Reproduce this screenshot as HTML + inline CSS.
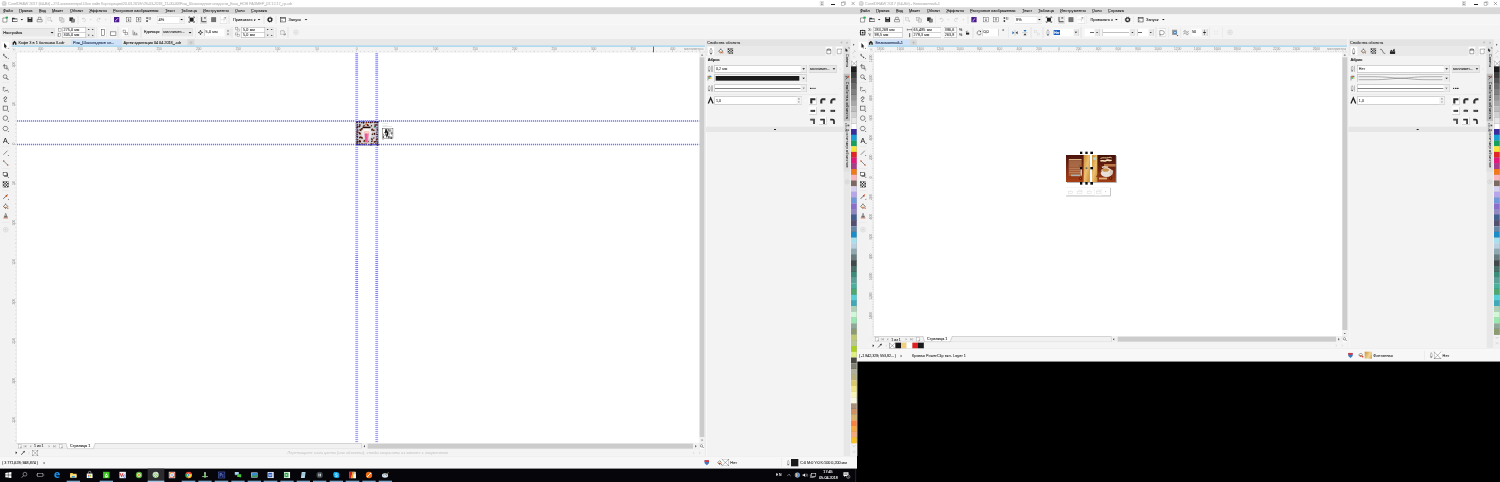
<!DOCTYPE html>
<html lang="ru"><head><meta charset="utf-8"><title>CorelDRAW 2017</title>
<style>
html,body{margin:0;padding:0;background:#000;overflow:hidden;}
body{width:1500px;height:482px;position:relative;}
#s{position:absolute;left:0;top:0;width:4500px;height:1446px;transform:scale(0.3333333);transform-origin:0 0;font-family:"Liberation Sans",sans-serif;overflow:hidden;background:#000;filter:brightness(1);}
#s div,#s span,#s svg{position:absolute;box-sizing:border-box;}
#s span{white-space:nowrap;-webkit-text-stroke:0.25px;}
#s svg{overflow:visible;}
</style></head><body><div id="s">
<div style="left:0px;top:0px;width:4500px;height:1446px;background:#000;"></div>
<div style="left:0px;top:0px;width:2571px;height:1406.1px;background:#f2f2f2;"></div>
<div style="left:0px;top:0px;width:2571px;height:21.9px;background:#fff;"></div>
<div style="left:0px;top:21.9px;width:2571px;height:20.7px;background:#d8d8d8;"></div>
<div style="left:0px;top:42.6px;width:2571px;height:32.7px;background:#f6f6f6;"></div>
<div style="left:0px;top:75px;width:2571px;height:42.3px;background:#f4f4f4;"></div>
<div style="left:0px;top:73.5px;width:2571px;height:1.8px;background:#fafafa;"></div>
<svg style="left:4.5px;top:3.3px;" width="15.6" height="15.6" viewBox="0 0 5.2 5.2"><circle cx="2.6" cy="2.6" r="2.5" fill="#d2d2d2"/><circle cx="2.2" cy="2.2" r="1.2" fill="#dedede"/></svg>
<span style="left:24px;top:4.2px;font-size:12.00px;line-height:14.4px;color:#bababa;letter-spacing:-0.473px;">CorelDRAW 2017 (64-Bit) - Z:\1.компьютера\ Шоп лайн Корпорация\20.03.2018г\28-03-2018_11-00-00\Рож_Шоколадные сладости_Бош_НОВ РАЗМЕР_07.12.17_гр.cdr</span>
<span style="left:9px;top:24.6px;font-size:12.00px;line-height:14.4px;color:#1e1e1e;letter-spacing:0.125px;">Файл</span>
<div style="left:9px;top:37.2px;width:5.7px;height:0.9px;background:#333;"></div>
<span style="left:57px;top:24.6px;font-size:12.00px;line-height:14.4px;color:#1e1e1e;letter-spacing:-0.006px;">Правка</span>
<div style="left:57px;top:37.2px;width:5.7px;height:0.9px;background:#333;"></div>
<span style="left:117px;top:24.6px;font-size:12.00px;line-height:14.4px;color:#1e1e1e;letter-spacing:-0.236px;">Вид</span>
<div style="left:117px;top:37.2px;width:5.7px;height:0.9px;background:#333;"></div>
<span style="left:156px;top:24.6px;font-size:12.00px;line-height:14.4px;color:#1e1e1e;letter-spacing:-0.192px;">Макет</span>
<div style="left:156px;top:37.2px;width:5.7px;height:0.9px;background:#333;"></div>
<span style="left:210px;top:24.6px;font-size:12.00px;line-height:14.4px;color:#1e1e1e;letter-spacing:-0.311px;">Объект</span>
<div style="left:210px;top:37.2px;width:5.7px;height:0.9px;background:#333;"></div>
<span style="left:267px;top:24.6px;font-size:12.00px;line-height:14.4px;color:#1e1e1e;letter-spacing:-0.079px;">Эффекты</span>
<div style="left:267px;top:37.2px;width:5.7px;height:0.9px;background:#333;"></div>
<span style="left:339px;top:24.6px;font-size:12.00px;line-height:14.4px;color:#1e1e1e;letter-spacing:-0.054px;">Растровые изображения</span>
<div style="left:339px;top:37.2px;width:5.7px;height:0.9px;background:#333;"></div>
<span style="left:495px;top:24.6px;font-size:12.00px;line-height:14.4px;color:#1e1e1e;letter-spacing:-0.042px;">Текст</span>
<div style="left:495px;top:37.2px;width:5.7px;height:0.9px;background:#333;"></div>
<span style="left:543px;top:24.6px;font-size:12.00px;line-height:14.4px;color:#1e1e1e;letter-spacing:0.136px;">Таблица</span>
<div style="left:543px;top:37.2px;width:5.7px;height:0.9px;background:#333;"></div>
<span style="left:609px;top:24.6px;font-size:12.00px;line-height:14.4px;color:#1e1e1e;letter-spacing:0.289px;">Инструменты</span>
<div style="left:609px;top:37.2px;width:5.7px;height:0.9px;background:#333;"></div>
<span style="left:705px;top:24.6px;font-size:12.00px;line-height:14.4px;color:#1e1e1e;letter-spacing:0.529px;">Окно</span>
<div style="left:705px;top:37.2px;width:5.7px;height:0.9px;background:#333;"></div>
<span style="left:753px;top:24.6px;font-size:12.00px;line-height:14.4px;color:#1e1e1e;letter-spacing:0.132px;">Справка</span>
<div style="left:753px;top:37.2px;width:5.7px;height:0.9px;background:#333;"></div>
<div style="left:2571px;top:0px;width:1929px;height:1084.2px;background:#f2f2f2;"></div>
<div style="left:2571px;top:0px;width:1929px;height:21.9px;background:#fff;"></div>
<div style="left:2571px;top:21.9px;width:1929px;height:20.7px;background:#d8d8d8;"></div>
<div style="left:2571px;top:42.6px;width:1929px;height:32.7px;background:#f6f6f6;"></div>
<div style="left:2571px;top:75px;width:1929px;height:42.3px;background:#f4f4f4;"></div>
<div style="left:2571px;top:73.5px;width:1929px;height:1.8px;background:#fafafa;"></div>
<svg style="left:2575.5px;top:3.3px;" width="15.6" height="15.6" viewBox="0 0 5.2 5.2"><circle cx="2.6" cy="2.6" r="2.5" fill="#d2d2d2"/><circle cx="2.2" cy="2.2" r="1.2" fill="#dedede"/></svg>
<span style="left:2595px;top:4.2px;font-size:12.00px;line-height:14.4px;color:#bababa;letter-spacing:-0.149px;">CorelDRAW 2017 (64-Bit) - Безымянный-1</span>
<span style="left:2580px;top:24.6px;font-size:12.00px;line-height:14.4px;color:#1e1e1e;letter-spacing:0.125px;">Файл</span>
<div style="left:2580px;top:37.2px;width:5.7px;height:0.9px;background:#333;"></div>
<span style="left:2628px;top:24.6px;font-size:12.00px;line-height:14.4px;color:#1e1e1e;letter-spacing:-0.006px;">Правка</span>
<div style="left:2628px;top:37.2px;width:5.7px;height:0.9px;background:#333;"></div>
<span style="left:2688px;top:24.6px;font-size:12.00px;line-height:14.4px;color:#1e1e1e;letter-spacing:-0.236px;">Вид</span>
<div style="left:2688px;top:37.2px;width:5.7px;height:0.9px;background:#333;"></div>
<span style="left:2727px;top:24.6px;font-size:12.00px;line-height:14.4px;color:#1e1e1e;letter-spacing:-0.192px;">Макет</span>
<div style="left:2727px;top:37.2px;width:5.7px;height:0.9px;background:#333;"></div>
<span style="left:2781px;top:24.6px;font-size:12.00px;line-height:14.4px;color:#1e1e1e;letter-spacing:-0.311px;">Объект</span>
<div style="left:2781px;top:37.2px;width:5.7px;height:0.9px;background:#333;"></div>
<span style="left:2838px;top:24.6px;font-size:12.00px;line-height:14.4px;color:#1e1e1e;letter-spacing:-0.079px;">Эффекты</span>
<div style="left:2838px;top:37.2px;width:5.7px;height:0.9px;background:#333;"></div>
<span style="left:2910px;top:24.6px;font-size:12.00px;line-height:14.4px;color:#1e1e1e;letter-spacing:-0.054px;">Растровые изображения</span>
<div style="left:2910px;top:37.2px;width:5.7px;height:0.9px;background:#333;"></div>
<span style="left:3066px;top:24.6px;font-size:12.00px;line-height:14.4px;color:#1e1e1e;letter-spacing:-0.042px;">Текст</span>
<div style="left:3066px;top:37.2px;width:5.7px;height:0.9px;background:#333;"></div>
<span style="left:3114px;top:24.6px;font-size:12.00px;line-height:14.4px;color:#1e1e1e;letter-spacing:0.136px;">Таблица</span>
<div style="left:3114px;top:37.2px;width:5.7px;height:0.9px;background:#333;"></div>
<span style="left:3180px;top:24.6px;font-size:12.00px;line-height:14.4px;color:#1e1e1e;letter-spacing:0.289px;">Инструменты</span>
<div style="left:3180px;top:37.2px;width:5.7px;height:0.9px;background:#333;"></div>
<span style="left:3276px;top:24.6px;font-size:12.00px;line-height:14.4px;color:#1e1e1e;letter-spacing:0.529px;">Окно</span>
<div style="left:3276px;top:37.2px;width:5.7px;height:0.9px;background:#333;"></div>
<span style="left:3324px;top:24.6px;font-size:12.00px;line-height:14.4px;color:#1e1e1e;letter-spacing:0.132px;">Справка</span>
<div style="left:3324px;top:37.2px;width:5.7px;height:0.9px;background:#333;"></div>
<svg style="left:5.1px;top:49.2px;" width="19.8" height="19.8" viewBox="0 0 10 10"><path d="M1.8 2.5H6.5L8 4V8.7H1.8Z" fill="#fff" stroke="#444" stroke-width="0.75"/><path d="M6.5 0.5L9.5 0.5L9.5 3.5Z" fill="#1aa84a"/><rect x="6" y="0.8" width="3" height="2.6" fill="#25b050"/></svg>
<svg style="left:33.6px;top:49.2px;" width="19.8" height="19.8" viewBox="0 0 10 10"><path d="M1 2H4.5L5.5 3.2H9V8.5H1Z" fill="#333"/><path d="M2.2 4.6H8.8V7.6H2.2Z" fill="#fff"/></svg>
<svg style="left:80.1px;top:49.2px;" width="19.8" height="19.8" viewBox="0 0 10 10"><rect x="1.3" y="1.3" width="7.4" height="7.4" fill="#222"/><rect x="3" y="1.3" width="4" height="2.6" fill="#ddd"/><rect x="2.8" y="5.6" width="4.4" height="3.1" fill="#555"/></svg>
<svg style="left:108.6px;top:49.2px;" width="19.8" height="19.8" viewBox="0 0 10 10"><path d="M3 1.5H7V5H3Z" fill="#fff" stroke="#444" stroke-width="0.75"/><path d="M1.2 5H8.8V8.3H1.2Z" fill="#fff" stroke="#444" stroke-width="0.75"/></svg>
<svg style="left:140.1px;top:49.2px;" width="19.8" height="19.8" viewBox="0 0 10 10"><rect x="1.8" y="1.8" width="4.4" height="4" fill="#f0f0f0" stroke="#c4c4c4" stroke-width="0.8"/><rect x="6.4" y="5.8" width="2" height="2.8" fill="#c8c8c8"/></svg>
<svg style="left:174.6px;top:49.2px;" width="19.8" height="19.8" viewBox="0 0 10 10"><rect x="1.5" y="1.5" width="4.6" height="5" fill="#e8e8e8" stroke="#b0b0b0" stroke-width="0.9"/><rect x="4" y="3.8" width="4.6" height="5" fill="#e0e0e0" stroke="#b0b0b0" stroke-width="0.9"/></svg>
<svg style="left:206.1px;top:49.2px;" width="19.8" height="19.8" viewBox="0 0 10 10"><rect x="1.2" y="1.6" width="5.4" height="5.6" fill="#333"/><rect x="4.4" y="4" width="4.6" height="4.8" fill="#888" stroke="#444" stroke-width="0.7"/></svg>
<svg style="left:242.1px;top:49.2px;" width="19.8" height="19.8" viewBox="0 0 10 10"><path d="M3 3.5A2.6 2.6 0 1 1 4 8" fill="none" stroke="#c8c8c8" stroke-width="0.9"/><path d="M1.5 3.8L4.3 2L4.2 5Z" fill="#c8c8c8"/></svg>
<svg style="left:285.6px;top:49.2px;" width="19.8" height="19.8" viewBox="0 0 10 10"><path d="M7 3.5A2.6 2.6 0 1 0 6 8" fill="none" stroke="#c8c8c8" stroke-width="0.9"/><path d="M8.5 3.8L5.7 2L5.8 5Z" fill="#c8c8c8"/></svg>
<svg style="left:339.6px;top:49.2px;" width="19.8" height="19.8" viewBox="0 0 10 10"><rect x="1" y="1" width="8" height="8" fill="#4a1a8c"/><path d="M3 7L7 3" stroke="#fff" stroke-width="1.1"/><path d="M3 7.4h1.6" stroke="#d8c8f0" stroke-width="0.8"/></svg>
<svg style="left:375.6px;top:49.2px;" width="19.8" height="19.8" viewBox="0 0 10 10"><rect x="1.6" y="1.6" width="6.8" height="6.8" fill="#fff" stroke="#555" stroke-width="0.65"/><path d="M5 2.8V6.4M3.8 5.2L5 6.8L6.2 5.2" stroke="#222" stroke-width="0.8" fill="none"/></svg>
<svg style="left:405.6px;top:49.2px;" width="19.8" height="19.8" viewBox="0 0 10 10"><rect x="1.6" y="1.6" width="6.8" height="6.8" fill="#fff" stroke="#555" stroke-width="0.65"/><path d="M5 7.2V3.4M3.8 4.8L5 3.2L6.2 4.8" stroke="#222" stroke-width="0.8" fill="none"/></svg>
<svg style="left:435.6px;top:49.2px;" width="19.8" height="19.8" viewBox="0 0 10 10"><rect x="1.5" y="1.5" width="2.2" height="2.2" fill="#333"/><rect x="1.5" y="5.8" width="2.2" height="2.7" fill="#333"/><rect x="5" y="1.5" width="1.4" height="2" fill="#555"/><rect x="7.2" y="1.5" width="1.4" height="2" fill="#777"/><rect x="5" y="4.2" width="3.6" height="1" fill="#999"/></svg>
<svg style="left:564.6px;top:49.2px;" width="19.8" height="19.8" viewBox="0 0 10 10"><rect x="2" y="2" width="6" height="6" fill="#222"/><path d="M0.8 2.6V0.8H2.6M7.4 0.8H9.2V2.6M9.2 7.4V9.2H7.4M2.6 9.2H0.8V7.4" stroke="#222" stroke-width="0.9" fill="none"/></svg>
<svg style="left:61.5px;top:57.3px;" width="7.2" height="3.6" viewBox="0 0 2.4 1.2"><path d="M0 0H2.4 L1.2 1.2 Z" fill="#111"/></svg>
<svg style="left:269.1px;top:57.6px;" width="6" height="3" viewBox="0 0 2 1"><path d="M0 0H2 L1 1 Z" fill="#ccc"/></svg>
<svg style="left:314.1px;top:57.6px;" width="6" height="3" viewBox="0 0 2 1"><path d="M0 0H2 L1 1 Z" fill="#ccc"/></svg>
<div style="left:137.49px;top:46.5px;width:1.02px;height:25.5px;background:#dcdcdc;"></div>
<div style="left:233.49px;top:46.5px;width:1.02px;height:25.5px;background:#dcdcdc;"></div>
<div style="left:330.99px;top:46.5px;width:1.02px;height:25.5px;background:#dcdcdc;"></div>
<div style="left:590.49px;top:46.5px;width:1.02px;height:25.5px;background:#dcdcdc;"></div>
<div style="left:686.49px;top:46.5px;width:1.02px;height:25.5px;background:#dcdcdc;"></div>
<div style="left:791.49px;top:46.5px;width:1.02px;height:25.5px;background:#dcdcdc;"></div>
<div style="left:827.49px;top:46.5px;width:1.02px;height:25.5px;background:#dcdcdc;"></div>
<div style="left:471px;top:48px;width:82.5px;height:22.5px;background:#fff;box-shadow:inset 0 0 0 1.3px #d0d0d0;"></div>
<div style="left:537px;top:48.6px;width:15.9px;height:21.3px;background:#f0f0f0;"></div>
<span style="left:475.5px;top:52.38px;font-size:11.70px;line-height:14.04px;color:#333;">4%</span>
<svg style="left:541.05px;top:57.07px;" width="8.1" height="4.05" viewBox="0 0 2.7 1.35"><path d="M0 0H2.7 L1.35 1.35 Z" fill="#111"/></svg>
<div style="left:600px;top:47.1px;width:21px;height:24px;background:#ececec;box-shadow:inset 0 0 0 1px #d0d0d0;"></div>
<svg style="left:600.6px;top:49.2px;" width="19.8" height="19.8" viewBox="0 0 10 10"><path d="M2 1V8H9" stroke="#333" stroke-width="1.2" fill="none"/><rect x="5.6" y="1.5" width="2.8" height="1.8" fill="#555"/><path d="M2 8.8H9" stroke="#888" stroke-width="0.8"/></svg>
<svg style="left:630.6px;top:49.2px;" width="19.8" height="19.8" viewBox="0 0 10 10"><rect x="1.3" y="1.3" width="7.4" height="7.4" fill="#6a6a6a"/><path d="M1.3 3.8H8.7M1.3 6.2H8.7M3.8 1.3V8.7M6.2 1.3V8.7" stroke="#8a8a8a" stroke-width="0.5"/></svg>
<div style="left:660px;top:47.1px;width:21px;height:24px;background:#fff;box-shadow:inset 0 0 0 1px #d0d0d0;"></div>
<svg style="left:660.6px;top:49.2px;" width="19.8" height="19.8" viewBox="0 0 10 10"><path d="M1 5H9M5.6 1V9" stroke="#999" stroke-width="0.6" stroke-dasharray="1 0.6"/><rect x="6.2" y="1.5" width="2.4" height="1.6" fill="#777"/></svg>
<span style="left:699px;top:52.38px;font-size:11.70px;line-height:14.04px;color:#222;letter-spacing:0.199px;">Привязать к</span>
<svg style="left:772.95px;top:57.07px;" width="8.1" height="4.05" viewBox="0 0 2.7 1.35"><path d="M0 0H2.7 L1.35 1.35 Z" fill="#111"/></svg>
<svg style="left:800.1px;top:49.2px;" width="19.8" height="19.8" viewBox="0 0 10 10"><circle cx="5" cy="5" r="2.8" fill="none" stroke="#222" stroke-width="1.9"/><circle cx="5" cy="5" r="3.9" fill="none" stroke="#222" stroke-width="1" stroke-dasharray="1.4 1.66"/></svg>
<svg style="left:839.1px;top:49.2px;" width="19.8" height="19.8" viewBox="0 0 10 10"><rect x="1.3" y="1.5" width="7.4" height="7" fill="#fff" stroke="#333" stroke-width="0.9"/><path d="M1.3 3H8.7" stroke="#333" stroke-width="0.9"/><path d="M3 5V6.5H4.6" stroke="#555" stroke-width="0.7" fill="none"/></svg>
<span style="left:865.5px;top:52.38px;font-size:11.70px;line-height:14.04px;color:#222;letter-spacing:0.151px;">Запуск</span>
<svg style="left:913.95px;top:57.07px;" width="8.1" height="4.05" viewBox="0 0 2.7 1.35"><path d="M0 0H2.7 L1.35 1.35 Z" fill="#111"/></svg>
<svg style="left:2577.6px;top:49.2px;" width="19.8" height="19.8" viewBox="0 0 10 10"><path d="M1.8 2.5H6.5L8 4V8.7H1.8Z" fill="#fff" stroke="#444" stroke-width="0.75"/><path d="M6.5 0.5L9.5 0.5L9.5 3.5Z" fill="#1aa84a"/><rect x="6" y="0.8" width="3" height="2.6" fill="#25b050"/></svg>
<svg style="left:2606.1px;top:49.2px;" width="19.8" height="19.8" viewBox="0 0 10 10"><path d="M1 2H4.5L5.5 3.2H9V8.5H1Z" fill="#333"/><path d="M2.2 4.6H8.8V7.6H2.2Z" fill="#fff"/></svg>
<svg style="left:2652.6px;top:49.2px;" width="19.8" height="19.8" viewBox="0 0 10 10"><rect x="1.3" y="1.3" width="7.4" height="7.4" fill="#222"/><rect x="3" y="1.3" width="4" height="2.6" fill="#ddd"/><rect x="2.8" y="5.6" width="4.4" height="3.1" fill="#555"/></svg>
<svg style="left:2681.1px;top:49.2px;" width="19.8" height="19.8" viewBox="0 0 10 10"><path d="M3 1.5H7V5H3Z" fill="#fff" stroke="#444" stroke-width="0.75"/><path d="M1.2 5H8.8V8.3H1.2Z" fill="#fff" stroke="#444" stroke-width="0.75"/></svg>
<svg style="left:2712.6px;top:49.2px;" width="19.8" height="19.8" viewBox="0 0 10 10"><rect x="1.8" y="1.8" width="4.4" height="4" fill="#f0f0f0" stroke="#c4c4c4" stroke-width="0.8"/><rect x="6.4" y="5.8" width="2" height="2.8" fill="#c8c8c8"/></svg>
<svg style="left:2747.1px;top:49.2px;" width="19.8" height="19.8" viewBox="0 0 10 10"><rect x="1.5" y="1.5" width="4.6" height="5" fill="#e8e8e8" stroke="#b0b0b0" stroke-width="0.9"/><rect x="4" y="3.8" width="4.6" height="5" fill="#e0e0e0" stroke="#b0b0b0" stroke-width="0.9"/></svg>
<svg style="left:2778.6px;top:49.2px;" width="19.8" height="19.8" viewBox="0 0 10 10"><rect x="1.2" y="1.6" width="5.4" height="5.6" fill="#333"/><rect x="4.4" y="4" width="4.6" height="4.8" fill="#888" stroke="#444" stroke-width="0.7"/></svg>
<svg style="left:2814.6px;top:49.2px;" width="19.8" height="19.8" viewBox="0 0 10 10"><path d="M3 3.5A2.6 2.6 0 1 1 4 8" fill="none" stroke="#c8c8c8" stroke-width="0.9"/><path d="M1.5 3.8L4.3 2L4.2 5Z" fill="#c8c8c8"/></svg>
<svg style="left:2858.1px;top:49.2px;" width="19.8" height="19.8" viewBox="0 0 10 10"><path d="M7 3.5A2.6 2.6 0 1 0 6 8" fill="none" stroke="#c8c8c8" stroke-width="0.9"/><path d="M8.5 3.8L5.7 2L5.8 5Z" fill="#c8c8c8"/></svg>
<svg style="left:2912.1px;top:49.2px;" width="19.8" height="19.8" viewBox="0 0 10 10"><rect x="1" y="1" width="8" height="8" fill="#4a1a8c"/><path d="M3 7L7 3" stroke="#fff" stroke-width="1.1"/><path d="M3 7.4h1.6" stroke="#d8c8f0" stroke-width="0.8"/></svg>
<svg style="left:2948.1px;top:49.2px;" width="19.8" height="19.8" viewBox="0 0 10 10"><rect x="1.6" y="1.6" width="6.8" height="6.8" fill="#fff" stroke="#555" stroke-width="0.65"/><path d="M5 2.8V6.4M3.8 5.2L5 6.8L6.2 5.2" stroke="#222" stroke-width="0.8" fill="none"/></svg>
<svg style="left:2978.1px;top:49.2px;" width="19.8" height="19.8" viewBox="0 0 10 10"><rect x="1.6" y="1.6" width="6.8" height="6.8" fill="#fff" stroke="#555" stroke-width="0.65"/><path d="M5 7.2V3.4M3.8 4.8L5 3.2L6.2 4.8" stroke="#222" stroke-width="0.8" fill="none"/></svg>
<svg style="left:3008.1px;top:49.2px;" width="19.8" height="19.8" viewBox="0 0 10 10"><rect x="1.5" y="1.5" width="2.2" height="2.2" fill="#333"/><rect x="1.5" y="5.8" width="2.2" height="2.7" fill="#333"/><rect x="5" y="1.5" width="1.4" height="2" fill="#555"/><rect x="7.2" y="1.5" width="1.4" height="2" fill="#777"/><rect x="5" y="4.2" width="3.6" height="1" fill="#999"/></svg>
<svg style="left:3137.1px;top:49.2px;" width="19.8" height="19.8" viewBox="0 0 10 10"><rect x="2" y="2" width="6" height="6" fill="#222"/><path d="M0.8 2.6V0.8H2.6M7.4 0.8H9.2V2.6M9.2 7.4V9.2H7.4M2.6 9.2H0.8V7.4" stroke="#222" stroke-width="0.9" fill="none"/></svg>
<svg style="left:2634px;top:57.3px;" width="7.2" height="3.6" viewBox="0 0 2.4 1.2"><path d="M0 0H2.4 L1.2 1.2 Z" fill="#111"/></svg>
<svg style="left:2841.6px;top:57.6px;" width="6" height="3" viewBox="0 0 2 1"><path d="M0 0H2 L1 1 Z" fill="#ccc"/></svg>
<svg style="left:2886.6px;top:57.6px;" width="6" height="3" viewBox="0 0 2 1"><path d="M0 0H2 L1 1 Z" fill="#ccc"/></svg>
<div style="left:2709.99px;top:46.5px;width:1.02px;height:25.5px;background:#dcdcdc;"></div>
<div style="left:2805.99px;top:46.5px;width:1.02px;height:25.5px;background:#dcdcdc;"></div>
<div style="left:2903.49px;top:46.5px;width:1.02px;height:25.5px;background:#dcdcdc;"></div>
<div style="left:3162.99px;top:46.5px;width:1.02px;height:25.5px;background:#dcdcdc;"></div>
<div style="left:3258.99px;top:46.5px;width:1.02px;height:25.5px;background:#dcdcdc;"></div>
<div style="left:3363.99px;top:46.5px;width:1.02px;height:25.5px;background:#dcdcdc;"></div>
<div style="left:3399.99px;top:46.5px;width:1.02px;height:25.5px;background:#dcdcdc;"></div>
<div style="left:3043.5px;top:48px;width:82.5px;height:22.5px;background:#fff;box-shadow:inset 0 0 0 1.3px #d0d0d0;"></div>
<div style="left:3109.5px;top:48.6px;width:15.9px;height:21.3px;background:#f0f0f0;"></div>
<span style="left:3048px;top:52.38px;font-size:11.70px;line-height:14.04px;color:#333;">8%</span>
<svg style="left:3113.55px;top:57.07px;" width="8.1" height="4.05" viewBox="0 0 2.7 1.35"><path d="M0 0H2.7 L1.35 1.35 Z" fill="#111"/></svg>
<div style="left:3172.5px;top:47.1px;width:21px;height:24px;background:#ececec;box-shadow:inset 0 0 0 1px #d0d0d0;"></div>
<svg style="left:3173.1px;top:49.2px;" width="19.8" height="19.8" viewBox="0 0 10 10"><path d="M2 1V8H9" stroke="#333" stroke-width="1.2" fill="none"/><rect x="5.6" y="1.5" width="2.8" height="1.8" fill="#555"/><path d="M2 8.8H9" stroke="#888" stroke-width="0.8"/></svg>
<svg style="left:3203.1px;top:49.2px;" width="19.8" height="19.8" viewBox="0 0 10 10"><rect x="1.3" y="1.3" width="7.4" height="7.4" fill="#6a6a6a"/><path d="M1.3 3.8H8.7M1.3 6.2H8.7M3.8 1.3V8.7M6.2 1.3V8.7" stroke="#8a8a8a" stroke-width="0.5"/></svg>
<div style="left:3232.5px;top:47.1px;width:21px;height:24px;background:#fff;box-shadow:inset 0 0 0 1px #d0d0d0;"></div>
<svg style="left:3233.1px;top:49.2px;" width="19.8" height="19.8" viewBox="0 0 10 10"><path d="M1 5H9M5.6 1V9" stroke="#999" stroke-width="0.6" stroke-dasharray="1 0.6"/><rect x="6.2" y="1.5" width="2.4" height="1.6" fill="#777"/></svg>
<span style="left:3271.5px;top:52.38px;font-size:11.70px;line-height:14.04px;color:#222;letter-spacing:0.199px;">Привязать к</span>
<svg style="left:3345.45px;top:57.07px;" width="8.1" height="4.05" viewBox="0 0 2.7 1.35"><path d="M0 0H2.7 L1.35 1.35 Z" fill="#111"/></svg>
<svg style="left:3372.6px;top:49.2px;" width="19.8" height="19.8" viewBox="0 0 10 10"><circle cx="5" cy="5" r="2.8" fill="none" stroke="#222" stroke-width="1.9"/><circle cx="5" cy="5" r="3.9" fill="none" stroke="#222" stroke-width="1" stroke-dasharray="1.4 1.66"/></svg>
<svg style="left:3411.6px;top:49.2px;" width="19.8" height="19.8" viewBox="0 0 10 10"><rect x="1.3" y="1.5" width="7.4" height="7" fill="#fff" stroke="#333" stroke-width="0.9"/><path d="M1.3 3H8.7" stroke="#333" stroke-width="0.9"/><path d="M3 5V6.5H4.6" stroke="#555" stroke-width="0.7" fill="none"/></svg>
<span style="left:3438px;top:52.38px;font-size:11.70px;line-height:14.04px;color:#222;letter-spacing:0.151px;">Запуск</span>
<svg style="left:3486.45px;top:57.07px;" width="8.1" height="4.05" viewBox="0 0 2.7 1.35"><path d="M0 0H2.7 L1.35 1.35 Z" fill="#111"/></svg>
<div style="left:4.5px;top:84.9px;width:159px;height:24.6px;background:#e9e9e9;box-shadow:inset 0 0 0 1.3px #cfcfcf;"></div>
<span style="left:9.6px;top:90.18px;font-size:11.70px;line-height:14.04px;color:#222;letter-spacing:-0.066px;">Настройка</span>
<svg style="left:151.8px;top:95.7px;" width="8.4" height="4.2" viewBox="0 0 2.8 1.4"><path d="M0 0H2.8 L1.4 1.4 Z" fill="#111"/></svg>
<svg style="left:172.5px;top:82.8px;" width="12" height="13.2" viewBox="0 0 4 4.4"><rect x="0.6" y="0.9" width="2.8" height="2.6" fill="#fff" stroke="#777" stroke-width="0.45"/></svg>
<svg style="left:172.5px;top:99px;" width="12" height="13.2" viewBox="0 0 4 4.4"><rect x="1" y="0.5" width="2" height="3.2" fill="#fff" stroke="#777" stroke-width="0.45"/><path d="M0.3 0.5V3.7" stroke="#555" stroke-width="0.4"/></svg>
<div style="left:186.9px;top:80.7px;width:71.1px;height:16.2px;background:#fff;box-shadow:inset 0 0 0 1.3px #a6a6a6;"></div>
<div style="left:186.9px;top:97.2px;width:71.1px;height:16.2px;background:#fff;box-shadow:inset 0 0 0 1.3px #a6a6a6;"></div>
<span style="left:190.5px;top:82.44px;font-size:11.10px;line-height:13.32px;color:#333;letter-spacing:0.235px;">275,0 мм</span>
<span style="left:190.5px;top:98.94px;font-size:11.10px;line-height:13.32px;color:#333;letter-spacing:0.235px;">305,0 мм</span>
<div style="left:258.9px;top:80.7px;width:25.2px;height:32.7px;background:#ececec;box-shadow:inset 0 0 0 1px #d6d6d6;"></div>
<svg style="left:262.8px;top:87.3px;" width="6" height="3" viewBox="0 0 2 1"><path d="M0 0H2 L1 1 Z" fill="#111"/></svg>
<svg style="left:274.8px;top:87.3px;" width="6" height="3" viewBox="0 0 2 1"><path d="M0 1 H2 L1 0 Z" fill="#222"/></svg>
<svg style="left:262.8px;top:103.8px;" width="6" height="3" viewBox="0 0 2 1"><path d="M0 0H2 L1 1 Z" fill="#111"/></svg>
<svg style="left:274.8px;top:103.8px;" width="6" height="3" viewBox="0 0 2 1"><path d="M0 1 H2 L1 0 Z" fill="#222"/></svg>
<div style="left:288.99px;top:81px;width:1.02px;height:33px;background:#dcdcdc;"></div>
<div style="left:298.5px;top:83.4px;width:21px;height:27.6px;background:#fff;box-shadow:inset 0 0 0 1px #d0d0d0;"></div>
<svg style="left:303px;top:87px;" width="12" height="21" viewBox="0 0 4 7"><rect x="0.6" y="0.5" width="2.8" height="6" fill="#fff" stroke="#444" stroke-width="0.5"/></svg>
<svg style="left:330px;top:91.5px;" width="19.2" height="16.5" viewBox="0 0 6.4 5.5"><rect x="0.5" y="1.2" width="5.4" height="3.4" fill="#fff" stroke="#444" stroke-width="0.5"/></svg>
<div style="left:353.49px;top:81px;width:1.02px;height:33px;background:#dcdcdc;"></div>
<div style="left:364.5px;top:83.4px;width:21.6px;height:27.6px;background:#fff;box-shadow:inset 0 0 0 1px #d0d0d0;"></div>
<svg style="left:367.5px;top:88.5px;" width="16.5" height="18" viewBox="0 0 5.5 6"><rect x="0.4" y="0.4" width="2.4" height="2.6" fill="#fff" stroke="#555" stroke-width="0.45"/><rect x="2.4" y="2.6" width="2.4" height="2.6" fill="#fff" stroke="#555" stroke-width="0.45"/></svg>
<svg style="left:396px;top:88.5px;" width="18" height="18" viewBox="0 0 6 6"><path d="M1 0.5V5.2H5.6" stroke="#555" stroke-width="0.5" fill="none"/><rect x="1.8" y="2.2" width="1.4" height="3" fill="#999"/><rect x="3.8" y="3.2" width="1.4" height="2" fill="#999"/></svg>
<div style="left:422.49px;top:81px;width:1.02px;height:33px;background:#dcdcdc;"></div>
<span style="left:432px;top:90.36px;font-size:11.40px;line-height:13.68px;color:#222;letter-spacing:-0.397px;">Единицы:</span>
<div style="left:486px;top:84.9px;width:91.5px;height:24.6px;background:#e9e9e9;box-shadow:inset 0 0 0 1.3px #cfcfcf;"></div>
<span style="left:489.9px;top:90.36px;font-size:11.40px;line-height:13.68px;color:#333;letter-spacing:0.306px;">миллимет...</span>
<svg style="left:565.8px;top:95.7px;" width="8.4" height="4.2" viewBox="0 0 2.8 1.4"><path d="M0 0H2.8 L1.4 1.4 Z" fill="#111"/></svg>
<div style="left:585.99px;top:81px;width:1.02px;height:33px;background:#dcdcdc;"></div>
<svg style="left:593.4px;top:88.8px;" width="16.8" height="16.8" viewBox="0 0 5.6 5.6"><path d="M2.8 0.3L3.8 1.6H1.8ZM2.8 5.3L3.8 4H1.8ZM0.3 2.8L1.6 1.8V3.8ZM5.3 2.8L4 1.8V3.8Z" fill="#222"/><circle cx="2.8" cy="2.8" r="1" fill="none" stroke="#222" stroke-width="0.5"/></svg>
<div style="left:612.9px;top:85.8px;width:63px;height:23.1px;background:#fff;box-shadow:inset 0 0 0 1.3px #a6a6a6;"></div>
<span style="left:616.8px;top:90.36px;font-size:11.40px;line-height:13.68px;color:#333;letter-spacing:0.218px;">5,0 мм</span>
<div style="left:676.8px;top:85.8px;width:15px;height:23.1px;background:#ececec;box-shadow:inset 0 0 0 1px #d6d6d6;"></div>
<svg style="left:681px;top:90.75px;" width="6" height="3" viewBox="0 0 2 1"><path d="M0 1 H2 L1 0 Z" fill="#222"/></svg>
<svg style="left:681px;top:101.25px;" width="6" height="3" viewBox="0 0 2 1"><path d="M0 0H2 L1 1 Z" fill="#222"/></svg>
<div style="left:695.49px;top:81px;width:1.02px;height:33px;background:#dcdcdc;"></div>
<svg style="left:705.6px;top:82.2px;" width="13.2" height="12.6" viewBox="0 0 4.4 4.2"><rect x="0.3" y="0.3" width="2.2" height="2" fill="#fff" stroke="#777" stroke-width="0.4"/><rect x="1.8" y="1.7" width="2.2" height="2" fill="#fff" stroke="#777" stroke-width="0.4"/></svg>
<svg style="left:705.6px;top:98.4px;" width="13.2" height="12.6" viewBox="0 0 4.4 4.2"><rect x="0.3" y="0.3" width="2.2" height="2" fill="#fff" stroke="#777" stroke-width="0.4"/><rect x="1.8" y="1.7" width="2.2" height="2" fill="#fff" stroke="#777" stroke-width="0.4"/></svg>
<div style="left:723px;top:80.7px;width:72px;height:16.2px;background:#fff;box-shadow:inset 0 0 0 1.3px #a6a6a6;"></div>
<div style="left:723px;top:97.2px;width:72px;height:16.2px;background:#fff;box-shadow:inset 0 0 0 1.3px #a6a6a6;"></div>
<span style="left:729px;top:82.44px;font-size:11.10px;line-height:13.32px;color:#333;letter-spacing:0.371px;">5,0 мм</span>
<span style="left:729px;top:98.94px;font-size:11.10px;line-height:13.32px;color:#333;letter-spacing:0.371px;">5,0 мм</span>
<div style="left:795.9px;top:80.7px;width:25.2px;height:32.7px;background:#ececec;box-shadow:inset 0 0 0 1px #d6d6d6;"></div>
<svg style="left:799.8px;top:87.3px;" width="6" height="3" viewBox="0 0 2 1"><path d="M0 0H2 L1 1 Z" fill="#111"/></svg>
<svg style="left:811.8px;top:87.3px;" width="6" height="3" viewBox="0 0 2 1"><path d="M0 1 H2 L1 0 Z" fill="#222"/></svg>
<svg style="left:799.8px;top:103.8px;" width="6" height="3" viewBox="0 0 2 1"><path d="M0 0H2 L1 1 Z" fill="#111"/></svg>
<svg style="left:811.8px;top:103.8px;" width="6" height="3" viewBox="0 0 2 1"><path d="M0 1 H2 L1 0 Z" fill="#222"/></svg>
<div style="left:827.49px;top:81px;width:1.02px;height:33px;background:#dcdcdc;"></div>
<svg style="left:838.5px;top:88.5px;" width="18" height="18" viewBox="0 0 6 6"><rect x="1" y="1" width="3.6" height="3.6" fill="none" stroke="#555" stroke-width="0.5" stroke-dasharray="0.8 0.5"/><path d="M4 5.2H5.6V3.6" stroke="#333" stroke-width="0.5" fill="none"/></svg>
<div style="left:863.49px;top:81px;width:1.02px;height:33px;background:#dcdcdc;"></div>
<svg style="left:879px;top:87.9px;" width="18" height="18" viewBox="0 0 6 6"><circle cx="3" cy="3" r="2.4" fill="none" stroke="#c4c4c4" stroke-width="0.4"/><path d="M3 1.4V4.6M1.4 3H4.6" stroke="#c4c4c4" stroke-width="0.4"/></svg>
<svg style="left:2579.1px;top:88.5px;" width="18" height="18" viewBox="0 0 6 6"><rect x="0.8" y="0.8" width="4.4" height="4.4" fill="none" stroke="#222" stroke-width="0.8"/><rect x="2.2" y="2.2" width="1.6" height="1.6" fill="#222"/><path d="M3 0V1M3 5V6M0 3H1M5 3H6" stroke="#222" stroke-width="0.6"/></svg>
<span style="left:2604.6px;top:82.98px;font-size:10.20px;line-height:12.24px;color:#444;">X:</span>
<span style="left:2604.6px;top:99.48px;font-size:10.20px;line-height:12.24px;color:#444;">Y:</span>
<div style="left:2619px;top:80.7px;width:88.5px;height:16.2px;background:#fff;box-shadow:inset 0 0 0 1.3px #a6a6a6;"></div>
<div style="left:2619px;top:97.2px;width:88.5px;height:16.2px;background:#fff;box-shadow:inset 0 0 0 1.3px #a6a6a6;"></div>
<span style="left:2623.5px;top:82.44px;font-size:11.10px;line-height:13.32px;color:#333;letter-spacing:0.153px;">283,269 мм</span>
<span style="left:2623.5px;top:98.94px;font-size:11.10px;line-height:13.32px;color:#333;letter-spacing:0.293px;">98,5 мм</span>
<svg style="left:2721px;top:85.2px;" width="15" height="7.8" viewBox="0 0 5 2.6"><path d="M0.3 1.3H4.7M0.3 0.4V2.2M4.7 0.4V2.2" stroke="#333" stroke-width="0.5"/></svg>
<svg style="left:2725.8px;top:99px;" width="6" height="13.2" viewBox="0 0 2 4.4"><path d="M1 0.2V4.2" stroke="#333" stroke-width="0.8"/></svg>
<div style="left:2736.6px;top:80.7px;width:87px;height:16.2px;background:#fff;box-shadow:inset 0 0 0 1.3px #a6a6a6;"></div>
<div style="left:2736.6px;top:97.2px;width:87px;height:16.2px;background:#fff;box-shadow:inset 0 0 0 1.3px #a6a6a6;"></div>
<span style="left:2740.5px;top:82.44px;font-size:11.10px;line-height:13.32px;color:#333;letter-spacing:0.356px;">65,485 мм</span>
<span style="left:2740.5px;top:98.94px;font-size:11.10px;line-height:13.32px;color:#333;letter-spacing:0.235px;">279,3 мм</span>
<div style="left:2830.5px;top:80.7px;width:40.5px;height:16.2px;background:#fff;box-shadow:inset 0 0 0 1.3px #a6a6a6;"></div>
<div style="left:2830.5px;top:97.2px;width:40.5px;height:16.2px;background:#fff;box-shadow:inset 0 0 0 1.3px #a6a6a6;"></div>
<span style="left:2834.4px;top:82.44px;font-size:11.10px;line-height:13.32px;color:#333;letter-spacing:0.145px;">396,6</span>
<span style="left:2834.4px;top:98.94px;font-size:11.10px;line-height:13.32px;color:#333;letter-spacing:0.145px;">263,8</span>
<span style="left:2877px;top:82.44px;font-size:11.10px;line-height:13.32px;color:#333;">%</span>
<span style="left:2877px;top:98.94px;font-size:11.10px;line-height:13.32px;color:#333;">%</span>
<svg style="left:2895px;top:90px;" width="13.2" height="15" viewBox="0 0 4.4 5"><rect x="1" y="2.6" width="3.2" height="2" fill="#222"/><path d="M1.4 2.6V1.4A0.8 0.8 0 0 1 2.8 1.4" stroke="#222" stroke-width="0.5" fill="none"/></svg>
<div style="left:2918.49px;top:81px;width:1.02px;height:33px;background:#dcdcdc;"></div>
<svg style="left:2929.5px;top:90px;" width="15" height="15" viewBox="0 0 5 5"><path d="M4 1.6A2 2 0 1 0 4.4 3.2" fill="none" stroke="#333" stroke-width="0.5"/><path d="M3.2 0.6L4.6 1.6L3.4 2.4Z" fill="#333"/></svg>
<div style="left:2946px;top:85.8px;width:50.4px;height:23.1px;background:#fff;box-shadow:inset 0 0 0 1.3px #a6a6a6;"></div>
<span style="left:2950.5px;top:90.36px;font-size:11.40px;line-height:13.68px;color:#333;letter-spacing:-0.282px;">0,0</span>
<span style="left:3007.5px;top:86.1px;font-size:9.00px;line-height:10.8px;color:#444;">o</span>
<div style="left:3024.99px;top:81px;width:1.02px;height:33px;background:#dcdcdc;"></div>
<svg style="left:3036px;top:88.8px;" width="18" height="18" viewBox="0 0 6 6"><path d="M3 0.3V5.7" stroke="#555" stroke-width="0.35" stroke-dasharray="0.6 0.4"/><path d="M0.4 1.5L2.4 3L0.4 4.5Z" fill="#1e6fb8"/><path d="M5.6 1.5L3.6 3L5.6 4.5Z" fill="#333"/></svg>
<svg style="left:3066px;top:88.8px;" width="18" height="18" viewBox="0 0 6 6"><path d="M0.3 3H5.7" stroke="#555" stroke-width="0.35" stroke-dasharray="0.6 0.4"/><path d="M1.5 0.4L3 2.4L4.5 0.4Z" fill="#1e6fb8"/><path d="M1.5 5.6L3 3.6L4.5 5.6Z" fill="#333"/></svg>
<div style="left:3092.49px;top:81px;width:1.02px;height:33px;background:#dcdcdc;"></div>
<svg style="left:3102px;top:88.8px;" width="18" height="18" viewBox="0 0 6 6"><rect x="0.6" y="0.6" width="2" height="2" fill="none" stroke="#d0d0d0" stroke-width="0.4"/><rect x="3.4" y="3.4" width="2" height="2" fill="none" stroke="#d0d0d0" stroke-width="0.4"/><path d="M2.6 2.6L3.4 3.4" stroke="#d0d0d0" stroke-width="0.4"/></svg>
<div style="left:3128.49px;top:81px;width:1.02px;height:33px;background:#dcdcdc;"></div>
<svg style="left:3138.9px;top:87.9px;" width="9.6" height="19.2" viewBox="0 0 3.2 6.4"><path d="M1.6 0.3L2.5 2.2V5.2H0.7V2.2Z" fill="#fff" stroke="#555" stroke-width="0.4"/><rect x="0.7" y="5.2" width="1.8" height="0.9" fill="#555"/></svg>
<div style="left:3157.5px;top:85.8px;width:78px;height:23.1px;background:#fff;box-shadow:inset 0 0 0 1.3px #a6a6a6;"></div>
<div style="left:3160.5px;top:89.7px;width:19.5px;height:15.6px;background:#1c63c8;"></div>
<span style="left:3162px;top:90.72px;font-size:10.80px;line-height:12.96px;color:#fff;letter-spacing:-0.632px;">Нет</span>
<div style="left:3220.5px;top:86.7px;width:14.4px;height:21.3px;background:#e8e8e8;"></div>
<svg style="left:3223.8px;top:95.25px;" width="7.8" height="3.9" viewBox="0 0 2.6 1.3"><path d="M0 0H2.6 L1.3 1.3 Z" fill="#111"/></svg>
<div style="left:3242.49px;top:81px;width:1.02px;height:33px;background:#dcdcdc;"></div>
<div style="left:3250.5px;top:85.8px;width:48px;height:23.1px;background:#fff;box-shadow:inset 0 0 0 1.3px #a6a6a6;"></div>
<div style="left:3270px;top:96px;width:12px;height:2.4px;background:#222;"></div>
<div style="left:3284.4px;top:86.7px;width:13.5px;height:21.3px;background:#e8e8e8;"></div>
<svg style="left:3288px;top:95.55px;" width="6.6" height="3.3" viewBox="0 0 2.2 1.1"><path d="M0 0H2.2 L1.1 1.1 Z" fill="#111"/></svg>
<div style="left:3306px;top:85.8px;width:99px;height:23.1px;background:#fff;box-shadow:inset 0 0 0 1.3px #a6a6a6;"></div>
<div style="left:3309px;top:96.6px;width:78px;height:1.35px;background:#444;"></div>
<div style="left:3389.4px;top:86.7px;width:15px;height:21.3px;background:#e8e8e8;"></div>
<svg style="left:3393.6px;top:95.55px;" width="6.6" height="3.3" viewBox="0 0 2.2 1.1"><path d="M0 0H2.2 L1.1 1.1 Z" fill="#111"/></svg>
<div style="left:3411px;top:85.8px;width:49.5px;height:23.1px;background:#fff;box-shadow:inset 0 0 0 1.3px #a6a6a6;"></div>
<div style="left:3414px;top:96px;width:12px;height:2.4px;background:#222;"></div>
<div style="left:3445.5px;top:86.7px;width:14.4px;height:21.3px;background:#e8e8e8;"></div>
<svg style="left:3449.4px;top:95.55px;" width="6.6" height="3.3" viewBox="0 0 2.2 1.1"><path d="M0 0H2.2 L1.1 1.1 Z" fill="#111"/></svg>
<div style="left:3467.49px;top:81px;width:1.02px;height:33px;background:#dcdcdc;"></div>
<div style="left:3475.5px;top:84.9px;width:22.5px;height:24.9px;background:#fff;box-shadow:inset 0 0 0 1px #c8c8c8;"></div>
<svg style="left:3477.3px;top:88.8px;" width="19.2" height="18" viewBox="0 0 6.4 6"><path d="M0.8 0.9H3.2A2.1 2.1 0 0 1 3.2 5.1H0.8Z" fill="none" stroke="#444" stroke-width="0.5"/><path d="M0.3 5.3H2" stroke="#444" stroke-width="0.5"/></svg>
<div style="left:3504.99px;top:81px;width:1.02px;height:33px;background:#dcdcdc;"></div>
<svg style="left:3515.1px;top:87.6px;" width="21" height="21" viewBox="0 0 7 7"><rect x="0.4" y="0.4" width="5" height="5.2" fill="#9a9a9a"/><rect x="1.6" y="1.8" width="3.4" height="2.6" rx="1" fill="#2a8ad8"/><rect x="2.6" y="2.6" width="1.4" height="1" fill="#fff"/><path d="M5 6h1.8l-0.9 0.8z" fill="#222"/></svg>
<div style="left:3540.99px;top:81px;width:1.02px;height:33px;background:#dcdcdc;"></div>
<svg style="left:3549.9px;top:88.8px;" width="16.8" height="16.8" viewBox="0 0 5.6 5.6"><path d="M0.3 2.4C1.2 0.4 2 0.4 2.7 1.8S4.4 3.4 5.1 1.4" fill="none" stroke="#444" stroke-width="0.5"/><path d="M0.3 4.6C1.2 2.6 2 2.6 2.7 4S4.4 5.6 5.1 3.6" fill="none" stroke="#444" stroke-width="0.5"/></svg>
<div style="left:3571.5px;top:85.8px;width:51px;height:23.1px;background:#fff;box-shadow:inset 0 0 0 1.3px #a6a6a6;"></div>
<span style="left:3576px;top:90.36px;font-size:11.40px;line-height:13.68px;color:#333;letter-spacing:-0.340px;">50</span>
<div style="left:3605.4px;top:86.7px;width:16.2px;height:21.3px;background:#e8e8e8;"></div>
<svg style="left:3609px;top:88.8px;" width="9" height="16.8" viewBox="0 0 3 5.6"><path d="M1.5 0.2V5.4" stroke="#222" stroke-width="0.4"/><path d="M0.2 2.8H2.8" stroke="#222" stroke-width="1"/></svg>
<div style="left:3627.99px;top:81px;width:1.02px;height:33px;background:#dcdcdc;"></div>
<svg style="left:3639px;top:88.8px;" width="18" height="18" viewBox="0 0 6 6"><path d="M1 1L2.4 2.4M5 1L3.6 2.4M1 5L2.4 3.6M5 5L3.6 3.6" stroke="#d0d0d0" stroke-width="0.5"/></svg>
<div style="left:3666.99px;top:81px;width:1.02px;height:33px;background:#dcdcdc;"></div>
<svg style="left:3681px;top:87.9px;" width="18" height="18" viewBox="0 0 6 6"><circle cx="3" cy="3" r="2.4" fill="none" stroke="#c0c0c0" stroke-width="0.4"/><path d="M3 1.4V4.6M1.4 3H4.6" stroke="#c0c0c0" stroke-width="0.4"/></svg>
<div style="left:34.5px;top:117px;width:2080.5px;height:22.8px;background:#e8e8e8;"></div>
<svg style="left:36.6px;top:120.9px;" width="13.2" height="13.8" viewBox="0 0 5 5.2"><path d="M0.3 2.6L2.5 0.4L4.7 2.6V5H3.1V3.4H1.9V5H0.3Z" fill="#222"/></svg>
<span style="left:55.5px;top:121.68px;font-size:11.70px;line-height:14.04px;color:#222;letter-spacing:-0.044px;">Кофе 3 в 1 большая 3.cdr</span>
<div style="left:213px;top:117.9px;width:153px;height:19.8px;background:#cfe2f8;"></div>
<span style="left:219px;top:121.68px;font-size:11.70px;line-height:14.04px;color:#1c2c4c;letter-spacing:0.028px;">Рож_Шоколадные сл...</span>
<span style="left:370.5px;top:121.68px;font-size:11.70px;line-height:14.04px;color:#222;letter-spacing:-0.224px;">Артек адаптация 04 04 2018_.cdr</span>
<div style="left:562.2px;top:118.2px;width:21.6px;height:18.6px;background:#dadada;"></div>
<svg style="left:567px;top:121.8px;" width="12" height="12" viewBox="0 0 4 4"><path d="M2 0.3V3.7M0.3 2H3.7" stroke="#aaa" stroke-width="0.45"/></svg>
<div style="left:34.5px;top:136.05px;width:2080.5px;height:4.65px;background:#b0daf0;"></div>
<div style="left:2604px;top:117px;width:1437px;height:22.8px;background:#e8e8e8;"></div>
<svg style="left:2606.1px;top:120.9px;" width="13.2" height="13.8" viewBox="0 0 5 5.2"><path d="M0.3 2.6L2.5 0.4L4.7 2.6V5H3.1V3.4H1.9V5H0.3Z" fill="#222"/></svg>
<div style="left:2620.5px;top:117.9px;width:109.5px;height:19.8px;background:#cfe2f8;"></div>
<span style="left:2626.5px;top:121.68px;font-size:11.70px;line-height:14.04px;color:#1c2c4c;letter-spacing:0.179px;">Безымянный-1</span>
<div style="left:2729.7px;top:118.2px;width:21.6px;height:18.6px;background:#dadada;"></div>
<svg style="left:2734.5px;top:121.8px;" width="12" height="12" viewBox="0 0 4 4"><path d="M2 0.3V3.7M0.3 2H3.7" stroke="#aaa" stroke-width="0.45"/></svg>
<div style="left:2604px;top:136.05px;width:1437px;height:4.65px;background:#b0daf0;"></div>
<div style="left:49.8px;top:140.7px;width:2064.6px;height:16.2px;background:#f3f3f3;"></div>
<svg style="left:0px;top:0px;" width="4500" height="1446" viewBox="0 0 1500 482"><path d="M20.75 50.9V52.3M24.70 51.3V52.3M28.65 51.3V52.3M32.60 51.3V52.3M36.55 51.3V52.3M40.50 50.3V52.3M44.45 51.3V52.3M48.40 51.3V52.3M52.35 51.3V52.3M56.30 51.3V52.3M60.25 50.9V52.3M64.20 51.3V52.3M68.15 51.3V52.3M72.10 51.3V52.3M76.05 51.3V52.3M80.00 50.3V52.3M83.95 51.3V52.3M87.90 51.3V52.3M91.85 51.3V52.3M95.80 51.3V52.3M99.75 50.9V52.3M103.70 51.3V52.3M107.65 51.3V52.3M111.60 51.3V52.3M115.55 51.3V52.3M119.50 50.3V52.3M123.45 51.3V52.3M127.40 51.3V52.3M131.35 51.3V52.3M135.30 51.3V52.3M139.25 50.9V52.3M143.20 51.3V52.3M147.15 51.3V52.3M151.10 51.3V52.3M155.05 51.3V52.3M159.00 50.3V52.3M162.95 51.3V52.3M166.90 51.3V52.3M170.85 51.3V52.3M174.80 51.3V52.3M178.75 50.9V52.3M182.70 51.3V52.3M186.65 51.3V52.3M190.60 51.3V52.3M194.55 51.3V52.3M198.50 50.3V52.3M202.45 51.3V52.3M206.40 51.3V52.3M210.35 51.3V52.3M214.30 51.3V52.3M218.25 50.9V52.3M222.20 51.3V52.3M226.15 51.3V52.3M230.10 51.3V52.3M234.05 51.3V52.3M238.00 50.3V52.3M241.95 51.3V52.3M245.90 51.3V52.3M249.85 51.3V52.3M253.80 51.3V52.3M257.75 50.9V52.3M261.70 51.3V52.3M265.65 51.3V52.3M269.60 51.3V52.3M273.55 51.3V52.3M277.50 50.3V52.3M281.45 51.3V52.3M285.40 51.3V52.3M289.35 51.3V52.3M293.30 51.3V52.3M297.25 50.9V52.3M301.20 51.3V52.3M305.15 51.3V52.3M309.10 51.3V52.3M313.05 51.3V52.3M317.00 50.3V52.3M320.95 51.3V52.3M324.90 51.3V52.3M328.85 51.3V52.3M332.80 51.3V52.3M336.75 50.9V52.3M340.70 51.3V52.3M344.65 51.3V52.3M348.60 51.3V52.3M352.55 51.3V52.3M356.50 50.3V52.3M360.45 51.3V52.3M364.40 51.3V52.3M368.35 51.3V52.3M372.30 51.3V52.3M376.25 50.9V52.3M380.20 51.3V52.3M384.15 51.3V52.3M388.10 51.3V52.3M392.05 51.3V52.3M396.00 50.3V52.3M399.95 51.3V52.3M403.90 51.3V52.3M407.85 51.3V52.3M411.80 51.3V52.3M415.75 50.9V52.3M419.70 51.3V52.3M423.65 51.3V52.3M427.60 51.3V52.3M431.55 51.3V52.3M435.50 50.3V52.3M439.45 51.3V52.3M443.40 51.3V52.3M447.35 51.3V52.3M451.30 51.3V52.3M455.25 50.9V52.3M459.20 51.3V52.3M463.15 51.3V52.3M467.10 51.3V52.3M471.05 51.3V52.3M475.00 50.3V52.3M478.95 51.3V52.3M482.90 51.3V52.3M486.85 51.3V52.3M490.80 51.3V52.3M494.75 50.9V52.3M498.70 51.3V52.3M502.65 51.3V52.3M506.60 51.3V52.3M510.55 51.3V52.3M514.50 50.3V52.3M518.45 51.3V52.3M522.40 51.3V52.3M526.35 51.3V52.3M530.30 51.3V52.3M534.25 50.9V52.3M538.20 51.3V52.3M542.15 51.3V52.3M546.10 51.3V52.3M550.05 51.3V52.3M554.00 50.3V52.3M557.95 51.3V52.3M561.90 51.3V52.3M565.85 51.3V52.3M569.80 51.3V52.3M573.75 50.9V52.3M577.70 51.3V52.3M581.65 51.3V52.3M585.60 51.3V52.3M589.55 51.3V52.3M593.50 50.3V52.3M597.45 51.3V52.3M601.40 51.3V52.3M605.35 51.3V52.3M609.30 51.3V52.3M613.25 50.9V52.3M617.20 51.3V52.3M621.15 51.3V52.3M625.10 51.3V52.3M629.05 51.3V52.3M633.00 50.3V52.3M636.95 51.3V52.3M640.90 51.3V52.3M644.85 51.3V52.3M648.80 51.3V52.3M652.75 50.9V52.3M656.70 51.3V52.3M660.65 51.3V52.3M664.60 51.3V52.3M668.55 51.3V52.3M672.50 50.3V52.3M676.45 51.3V52.3M680.40 51.3V52.3M684.35 51.3V52.3M688.30 51.3V52.3M692.25 50.9V52.3M696.20 51.3V52.3M700.15 51.3V52.3M704.10 51.3V52.3" stroke="#8c8c8c" stroke-width="0.36" fill="none"/></svg>
<div style="left:49.8px;top:156px;width:2064.6px;height:1.02px;background:#c8c8c8;"></div>
<span style="left:122.1px;top:140.76px;font-size:9.90px;line-height:11.88px;color:#8e8e8e;transform:translateX(-50%);-webkit-text-stroke:0;">400</span>
<span style="left:240.6px;top:140.76px;font-size:9.90px;line-height:11.88px;color:#8e8e8e;transform:translateX(-50%);-webkit-text-stroke:0;">350</span>
<span style="left:359.1px;top:140.76px;font-size:9.90px;line-height:11.88px;color:#8e8e8e;transform:translateX(-50%);-webkit-text-stroke:0;">300</span>
<span style="left:477.6px;top:140.76px;font-size:9.90px;line-height:11.88px;color:#8e8e8e;transform:translateX(-50%);-webkit-text-stroke:0;">250</span>
<span style="left:596.1px;top:140.76px;font-size:9.90px;line-height:11.88px;color:#8e8e8e;transform:translateX(-50%);-webkit-text-stroke:0;">200</span>
<span style="left:714.6px;top:140.76px;font-size:9.90px;line-height:11.88px;color:#8e8e8e;transform:translateX(-50%);-webkit-text-stroke:0;">150</span>
<span style="left:833.1px;top:140.76px;font-size:9.90px;line-height:11.88px;color:#8e8e8e;transform:translateX(-50%);-webkit-text-stroke:0;">100</span>
<span style="left:951.6px;top:140.76px;font-size:9.90px;line-height:11.88px;color:#8e8e8e;transform:translateX(-50%);-webkit-text-stroke:0;">50</span>
<span style="left:1070.1px;top:140.76px;font-size:9.90px;line-height:11.88px;color:#8e8e8e;transform:translateX(-50%);-webkit-text-stroke:0;">0</span>
<span style="left:1188.6px;top:140.76px;font-size:9.90px;line-height:11.88px;color:#8e8e8e;transform:translateX(-50%);-webkit-text-stroke:0;">50</span>
<span style="left:1307.1px;top:140.76px;font-size:9.90px;line-height:11.88px;color:#8e8e8e;transform:translateX(-50%);-webkit-text-stroke:0;">100</span>
<span style="left:1425.6px;top:140.76px;font-size:9.90px;line-height:11.88px;color:#8e8e8e;transform:translateX(-50%);-webkit-text-stroke:0;">150</span>
<span style="left:1544.1px;top:140.76px;font-size:9.90px;line-height:11.88px;color:#8e8e8e;transform:translateX(-50%);-webkit-text-stroke:0;">200</span>
<span style="left:1662.6px;top:140.76px;font-size:9.90px;line-height:11.88px;color:#8e8e8e;transform:translateX(-50%);-webkit-text-stroke:0;">250</span>
<span style="left:1781.1px;top:140.76px;font-size:9.90px;line-height:11.88px;color:#8e8e8e;transform:translateX(-50%);-webkit-text-stroke:0;">300</span>
<span style="left:1899.6px;top:140.76px;font-size:9.90px;line-height:11.88px;color:#8e8e8e;transform:translateX(-50%);-webkit-text-stroke:0;">350</span>
<span style="left:2018.1px;top:140.76px;font-size:9.90px;line-height:11.88px;color:#8e8e8e;transform:translateX(-50%);-webkit-text-stroke:0;">400</span>
<span style="left:2052.6px;top:142.2px;font-size:9.00px;line-height:10.8px;color:#909090;letter-spacing:0.466px;-webkit-text-stroke:0;">миллиметры</span>
<div style="left:2621.1px;top:140.7px;width:1421.4px;height:16.2px;background:#f3f3f3;"></div>
<svg style="left:0px;top:0px;" width="4500" height="1446" viewBox="0 0 1500 482"><path d="M875.55 51.3V52.3M878.03 51.3V52.3M880.50 50.3V52.3M882.98 51.3V52.3M885.45 51.3V52.3M887.92 51.3V52.3M890.40 50.9V52.3M892.88 51.3V52.3M895.35 51.3V52.3M897.83 51.3V52.3M900.30 50.3V52.3M902.78 51.3V52.3M905.25 51.3V52.3M907.73 51.3V52.3M910.20 50.9V52.3M912.68 51.3V52.3M915.15 51.3V52.3M917.63 51.3V52.3M920.10 50.3V52.3M922.58 51.3V52.3M925.05 51.3V52.3M927.52 51.3V52.3M930.00 50.9V52.3M932.48 51.3V52.3M934.95 51.3V52.3M937.43 51.3V52.3M939.90 50.3V52.3M942.38 51.3V52.3M944.85 51.3V52.3M947.33 51.3V52.3M949.80 50.9V52.3M952.28 51.3V52.3M954.75 51.3V52.3M957.23 51.3V52.3M959.70 50.3V52.3M962.18 51.3V52.3M964.65 51.3V52.3M967.12 51.3V52.3M969.60 50.9V52.3M972.08 51.3V52.3M974.55 51.3V52.3M977.03 51.3V52.3M979.50 50.3V52.3M981.98 51.3V52.3M984.45 51.3V52.3M986.92 51.3V52.3M989.40 50.9V52.3M991.88 51.3V52.3M994.35 51.3V52.3M996.83 51.3V52.3M999.30 50.3V52.3M1001.78 51.3V52.3M1004.25 51.3V52.3M1006.73 51.3V52.3M1009.20 50.9V52.3M1011.68 51.3V52.3M1014.15 51.3V52.3M1016.63 51.3V52.3M1019.10 50.3V52.3M1021.58 51.3V52.3M1024.05 51.3V52.3M1026.53 51.3V52.3M1029.00 50.9V52.3M1031.47 51.3V52.3M1033.95 51.3V52.3M1036.42 51.3V52.3M1038.90 50.3V52.3M1041.38 51.3V52.3M1043.85 51.3V52.3M1046.33 51.3V52.3M1048.80 50.9V52.3M1051.28 51.3V52.3M1053.75 51.3V52.3M1056.23 51.3V52.3M1058.70 50.3V52.3M1061.17 51.3V52.3M1063.65 51.3V52.3M1066.12 51.3V52.3M1068.60 50.9V52.3M1071.08 51.3V52.3M1073.55 51.3V52.3M1076.03 51.3V52.3M1078.50 50.3V52.3M1080.97 51.3V52.3M1083.45 51.3V52.3M1085.92 51.3V52.3M1088.40 50.9V52.3M1090.88 51.3V52.3M1093.35 51.3V52.3M1095.83 51.3V52.3M1098.30 50.3V52.3M1100.77 51.3V52.3M1103.25 51.3V52.3M1105.72 51.3V52.3M1108.20 50.9V52.3M1110.67 51.3V52.3M1113.15 51.3V52.3M1115.62 51.3V52.3M1118.10 50.3V52.3M1120.58 51.3V52.3M1123.05 51.3V52.3M1125.53 51.3V52.3M1128.00 50.9V52.3M1130.48 51.3V52.3M1132.95 51.3V52.3M1135.43 51.3V52.3M1137.90 50.3V52.3M1140.38 51.3V52.3M1142.85 51.3V52.3M1145.33 51.3V52.3M1147.80 50.9V52.3M1150.28 51.3V52.3M1152.75 51.3V52.3M1155.23 51.3V52.3M1157.70 50.3V52.3M1160.17 51.3V52.3M1162.65 51.3V52.3M1165.12 51.3V52.3M1167.60 50.9V52.3M1170.08 51.3V52.3M1172.55 51.3V52.3M1175.03 51.3V52.3M1177.50 50.3V52.3M1179.97 51.3V52.3M1182.45 51.3V52.3M1184.92 51.3V52.3M1187.40 50.9V52.3M1189.88 51.3V52.3M1192.35 51.3V52.3M1194.83 51.3V52.3M1197.30 50.3V52.3M1199.77 51.3V52.3M1202.25 51.3V52.3M1204.72 51.3V52.3M1207.20 50.9V52.3M1209.67 51.3V52.3M1212.15 51.3V52.3M1214.62 51.3V52.3M1217.10 50.3V52.3M1219.58 51.3V52.3M1222.05 51.3V52.3M1224.53 51.3V52.3M1227.00 50.9V52.3M1229.48 51.3V52.3M1231.95 51.3V52.3M1234.43 51.3V52.3M1236.90 50.3V52.3M1239.38 51.3V52.3M1241.85 51.3V52.3M1244.33 51.3V52.3M1246.80 50.9V52.3M1249.28 51.3V52.3M1251.75 51.3V52.3M1254.23 51.3V52.3M1256.70 50.3V52.3M1259.17 51.3V52.3M1261.65 51.3V52.3M1264.12 51.3V52.3M1266.60 50.9V52.3M1269.08 51.3V52.3M1271.55 51.3V52.3M1274.03 51.3V52.3M1276.50 50.3V52.3M1278.97 51.3V52.3M1281.45 51.3V52.3M1283.92 51.3V52.3M1286.40 50.9V52.3M1288.88 51.3V52.3M1291.35 51.3V52.3M1293.83 51.3V52.3M1296.30 50.3V52.3M1298.78 51.3V52.3M1301.25 51.3V52.3M1303.73 51.3V52.3M1306.20 50.9V52.3M1308.68 51.3V52.3M1311.15 51.3V52.3M1313.63 51.3V52.3M1316.10 50.3V52.3M1318.58 51.3V52.3M1321.05 51.3V52.3M1323.53 51.3V52.3M1326.00 50.9V52.3M1328.48 51.3V52.3M1330.95 51.3V52.3M1333.43 51.3V52.3M1335.90 50.3V52.3M1338.38 51.3V52.3M1340.85 51.3V52.3M1343.33 51.3V52.3M1345.80 50.9V52.3" stroke="#8c8c8c" stroke-width="0.36" fill="none"/></svg>
<div style="left:2621.1px;top:156px;width:1421.4px;height:1.02px;background:#c8c8c8;"></div>
<span style="left:2642.1px;top:140.76px;font-size:9.90px;line-height:11.88px;color:#8e8e8e;transform:translateX(-50%);-webkit-text-stroke:0;">1800</span>
<span style="left:2701.5px;top:140.76px;font-size:9.90px;line-height:11.88px;color:#8e8e8e;transform:translateX(-50%);-webkit-text-stroke:0;">1600</span>
<span style="left:2760.9px;top:140.76px;font-size:9.90px;line-height:11.88px;color:#8e8e8e;transform:translateX(-50%);-webkit-text-stroke:0;">1400</span>
<span style="left:2820.3px;top:140.76px;font-size:9.90px;line-height:11.88px;color:#8e8e8e;transform:translateX(-50%);-webkit-text-stroke:0;">1200</span>
<span style="left:2879.7px;top:140.76px;font-size:9.90px;line-height:11.88px;color:#8e8e8e;transform:translateX(-50%);-webkit-text-stroke:0;">1000</span>
<span style="left:2939.1px;top:140.76px;font-size:9.90px;line-height:11.88px;color:#8e8e8e;transform:translateX(-50%);-webkit-text-stroke:0;">800</span>
<span style="left:2998.5px;top:140.76px;font-size:9.90px;line-height:11.88px;color:#8e8e8e;transform:translateX(-50%);-webkit-text-stroke:0;">600</span>
<span style="left:3057.9px;top:140.76px;font-size:9.90px;line-height:11.88px;color:#8e8e8e;transform:translateX(-50%);-webkit-text-stroke:0;">400</span>
<span style="left:3117.3px;top:140.76px;font-size:9.90px;line-height:11.88px;color:#8e8e8e;transform:translateX(-50%);-webkit-text-stroke:0;">200</span>
<span style="left:3176.7px;top:140.76px;font-size:9.90px;line-height:11.88px;color:#8e8e8e;transform:translateX(-50%);-webkit-text-stroke:0;">0</span>
<span style="left:3236.1px;top:140.76px;font-size:9.90px;line-height:11.88px;color:#8e8e8e;transform:translateX(-50%);-webkit-text-stroke:0;">200</span>
<span style="left:3295.5px;top:140.76px;font-size:9.90px;line-height:11.88px;color:#8e8e8e;transform:translateX(-50%);-webkit-text-stroke:0;">400</span>
<span style="left:3354.9px;top:140.76px;font-size:9.90px;line-height:11.88px;color:#8e8e8e;transform:translateX(-50%);-webkit-text-stroke:0;">600</span>
<span style="left:3414.3px;top:140.76px;font-size:9.90px;line-height:11.88px;color:#8e8e8e;transform:translateX(-50%);-webkit-text-stroke:0;">800</span>
<span style="left:3473.7px;top:140.76px;font-size:9.90px;line-height:11.88px;color:#8e8e8e;transform:translateX(-50%);-webkit-text-stroke:0;">1000</span>
<span style="left:3533.1px;top:140.76px;font-size:9.90px;line-height:11.88px;color:#8e8e8e;transform:translateX(-50%);-webkit-text-stroke:0;">1200</span>
<span style="left:3592.5px;top:140.76px;font-size:9.90px;line-height:11.88px;color:#8e8e8e;transform:translateX(-50%);-webkit-text-stroke:0;">1400</span>
<span style="left:3651.9px;top:140.76px;font-size:9.90px;line-height:11.88px;color:#8e8e8e;transform:translateX(-50%);-webkit-text-stroke:0;">1600</span>
<span style="left:3711.3px;top:140.76px;font-size:9.90px;line-height:11.88px;color:#8e8e8e;transform:translateX(-50%);-webkit-text-stroke:0;">1800</span>
<span style="left:3770.7px;top:140.76px;font-size:9.90px;line-height:11.88px;color:#8e8e8e;transform:translateX(-50%);-webkit-text-stroke:0;">2000</span>
<span style="left:3830.1px;top:140.76px;font-size:9.90px;line-height:11.88px;color:#8e8e8e;transform:translateX(-50%);-webkit-text-stroke:0;">2200</span>
<span style="left:3889.5px;top:140.76px;font-size:9.90px;line-height:11.88px;color:#8e8e8e;transform:translateX(-50%);-webkit-text-stroke:0;">2400</span>
<span style="left:3948.9px;top:140.76px;font-size:9.90px;line-height:11.88px;color:#8e8e8e;transform:translateX(-50%);-webkit-text-stroke:0;">2600</span>
<span style="left:3981.9px;top:142.2px;font-size:9.00px;line-height:10.8px;color:#909090;letter-spacing:0.346px;-webkit-text-stroke:0;">миллиметры</span>
<div style="left:33.9px;top:156.9px;width:15.9px;height:1172.1px;background:#f3f3f3;"></div>
<svg style="left:0px;top:0px;" width="4500" height="1446" viewBox="0 0 1500 482"><path d="M15.50 53.65H16.50M15.50 57.60H16.50M15.50 61.55H16.50M14.50 65.50H16.50M15.50 69.45H16.50M15.50 73.40H16.50M15.50 77.35H16.50M15.50 81.30H16.50M15.10 85.25H16.50M15.50 89.20H16.50M15.50 93.15H16.50M15.50 97.10H16.50M15.50 101.05H16.50M14.50 105.00H16.50M15.50 108.95H16.50M15.50 112.90H16.50M15.50 116.85H16.50M15.50 120.80H16.50M15.10 124.75H16.50M15.50 128.70H16.50M15.50 132.65H16.50M15.50 136.60H16.50M15.50 140.55H16.50M14.50 144.50H16.50M15.50 148.45H16.50M15.50 152.40H16.50M15.50 156.35H16.50M15.50 160.30H16.50M15.10 164.25H16.50M15.50 168.20H16.50M15.50 172.15H16.50M15.50 176.10H16.50M15.50 180.05H16.50M14.50 184.00H16.50M15.50 187.95H16.50M15.50 191.90H16.50M15.50 195.85H16.50M15.50 199.80H16.50M15.10 203.75H16.50M15.50 207.70H16.50M15.50 211.65H16.50M15.50 215.60H16.50M15.50 219.55H16.50M14.50 223.50H16.50M15.50 227.45H16.50M15.50 231.40H16.50M15.50 235.35H16.50M15.50 239.30H16.50M15.10 243.25H16.50M15.50 247.20H16.50M15.50 251.15H16.50M15.50 255.10H16.50M15.50 259.05H16.50M14.50 263.00H16.50M15.50 266.95H16.50M15.50 270.90H16.50M15.50 274.85H16.50M15.50 278.80H16.50M15.10 282.75H16.50M15.50 286.70H16.50M15.50 290.65H16.50M15.50 294.60H16.50M15.50 298.55H16.50M14.50 302.50H16.50M15.50 306.45H16.50M15.50 310.40H16.50M15.50 314.35H16.50M15.50 318.30H16.50M15.10 322.25H16.50M15.50 326.20H16.50M15.50 330.15H16.50M15.50 334.10H16.50M15.50 338.05H16.50M14.50 342.00H16.50M15.50 345.95H16.50M15.50 349.90H16.50M15.50 353.85H16.50M15.50 357.80H16.50M15.10 361.75H16.50M15.50 365.70H16.50M15.50 369.65H16.50M15.50 373.60H16.50M15.50 377.55H16.50M14.50 381.50H16.50M15.50 385.45H16.50M15.50 389.40H16.50M15.50 393.35H16.50M15.50 397.30H16.50M15.10 401.25H16.50M15.50 405.20H16.50M15.50 409.15H16.50M15.50 413.10H16.50M15.50 417.05H16.50M14.50 421.00H16.50M15.50 424.95H16.50M15.50 428.90H16.50M15.50 432.85H16.50M15.50 436.80H16.50M15.10 440.75H16.50" stroke="#8c8c8c" stroke-width="0.36" fill="none"/></svg>
<div style="left:48.9px;top:156.9px;width:1.02px;height:1172.1px;background:#c8c8c8;"></div>
<span style="left:36.9px;top:193.5px;font-size:9.9px;line-height:10px;color:#8e8e8e;-webkit-text-stroke:0;transform:rotate(-90deg) translateX(-50%);transform-origin:0 0;">100</span>
<span style="left:36.9px;top:312px;font-size:9.9px;line-height:10px;color:#8e8e8e;-webkit-text-stroke:0;transform:rotate(-90deg) translateX(-50%);transform-origin:0 0;">50</span>
<span style="left:36.9px;top:430.5px;font-size:9.9px;line-height:10px;color:#8e8e8e;-webkit-text-stroke:0;transform:rotate(-90deg) translateX(-50%);transform-origin:0 0;">0</span>
<span style="left:36.9px;top:549px;font-size:9.9px;line-height:10px;color:#8e8e8e;-webkit-text-stroke:0;transform:rotate(-90deg) translateX(-50%);transform-origin:0 0;">50</span>
<span style="left:36.9px;top:667.5px;font-size:9.9px;line-height:10px;color:#8e8e8e;-webkit-text-stroke:0;transform:rotate(-90deg) translateX(-50%);transform-origin:0 0;">100</span>
<span style="left:36.9px;top:786px;font-size:9.9px;line-height:10px;color:#8e8e8e;-webkit-text-stroke:0;transform:rotate(-90deg) translateX(-50%);transform-origin:0 0;">150</span>
<span style="left:36.9px;top:904.5px;font-size:9.9px;line-height:10px;color:#8e8e8e;-webkit-text-stroke:0;transform:rotate(-90deg) translateX(-50%);transform-origin:0 0;">200</span>
<span style="left:36.9px;top:1023px;font-size:9.9px;line-height:10px;color:#8e8e8e;-webkit-text-stroke:0;transform:rotate(-90deg) translateX(-50%);transform-origin:0 0;">250</span>
<span style="left:36.9px;top:1141.5px;font-size:9.9px;line-height:10px;color:#8e8e8e;-webkit-text-stroke:0;transform:rotate(-90deg) translateX(-50%);transform-origin:0 0;">300</span>
<span style="left:36.9px;top:1260px;font-size:9.9px;line-height:10px;color:#8e8e8e;-webkit-text-stroke:0;transform:rotate(-90deg) translateX(-50%);transform-origin:0 0;">350</span>
<div style="left:2605.2px;top:156.9px;width:15.9px;height:851.7px;background:#f3f3f3;"></div>
<svg style="left:0px;top:0px;" width="4500" height="1446" viewBox="0 0 1500 482"><path d="M872.60 54.45H873.60M872.60 56.92H873.60M871.60 59.40H873.60M872.60 61.87H873.60M872.60 64.35H873.60M872.60 66.82H873.60M872.20 69.30H873.60M872.60 71.77H873.60M872.60 74.25H873.60M872.60 76.72H873.60M871.60 79.20H873.60M872.60 81.67H873.60M872.60 84.15H873.60M872.60 86.62H873.60M872.20 89.10H873.60M872.60 91.57H873.60M872.60 94.05H873.60M872.60 96.52H873.60M871.60 99.00H873.60M872.60 101.47H873.60M872.60 103.95H873.60M872.60 106.42H873.60M872.20 108.90H873.60M872.60 111.37H873.60M872.60 113.85H873.60M872.60 116.32H873.60M871.60 118.80H873.60M872.60 121.27H873.60M872.60 123.75H873.60M872.60 126.22H873.60M872.20 128.70H873.60M872.60 131.17H873.60M872.60 133.65H873.60M872.60 136.12H873.60M871.60 138.60H873.60M872.60 141.07H873.60M872.60 143.55H873.60M872.60 146.03H873.60M872.20 148.50H873.60M872.60 150.97H873.60M872.60 153.45H873.60M872.60 155.92H873.60M871.60 158.40H873.60M872.60 160.87H873.60M872.60 163.35H873.60M872.60 165.82H873.60M872.20 168.30H873.60M872.60 170.77H873.60M872.60 173.25H873.60M872.60 175.72H873.60M871.60 178.20H873.60M872.60 180.67H873.60M872.60 183.15H873.60M872.60 185.62H873.60M872.20 188.10H873.60M872.60 190.57H873.60M872.60 193.05H873.60M872.60 195.52H873.60M871.60 198.00H873.60M872.60 200.47H873.60M872.60 202.95H873.60M872.60 205.43H873.60M872.20 207.90H873.60M872.60 210.38H873.60M872.60 212.85H873.60M872.60 215.32H873.60M871.60 217.80H873.60M872.60 220.27H873.60M872.60 222.75H873.60M872.60 225.22H873.60M872.20 227.70H873.60M872.60 230.17H873.60M872.60 232.65H873.60M872.60 235.12H873.60M871.60 237.60H873.60M872.60 240.07H873.60M872.60 242.55H873.60M872.60 245.03H873.60M872.20 247.50H873.60M872.60 249.97H873.60M872.60 252.45H873.60M872.60 254.92H873.60M871.60 257.40H873.60M872.60 259.88H873.60M872.60 262.35H873.60M872.60 264.82H873.60M872.20 267.30H873.60M872.60 269.77H873.60M872.60 272.25H873.60M872.60 274.72H873.60M871.60 277.20H873.60M872.60 279.68H873.60M872.60 282.15H873.60M872.60 284.62H873.60M872.20 287.10H873.60M872.60 289.57H873.60M872.60 292.05H873.60M872.60 294.52H873.60M871.60 297.00H873.60M872.60 299.48H873.60M872.60 301.95H873.60M872.60 304.43H873.60M872.20 306.90H873.60M872.60 309.38H873.60M872.60 311.85H873.60M872.60 314.32H873.60M871.60 316.80H873.60M872.60 319.27H873.60M872.60 321.75H873.60M872.60 324.22H873.60M872.20 326.70H873.60M872.60 329.17H873.60M872.60 331.65H873.60M872.60 334.12H873.60" stroke="#8c8c8c" stroke-width="0.36" fill="none"/></svg>
<div style="left:2620.2px;top:156.9px;width:1.02px;height:851.7px;background:#c8c8c8;"></div>
<span style="left:2608.2px;top:175.2px;font-size:9.9px;line-height:10px;color:#8e8e8e;-webkit-text-stroke:0;transform:rotate(-90deg) translateX(-50%);transform-origin:0 0;">1200</span>
<span style="left:2608.2px;top:234.6px;font-size:9.9px;line-height:10px;color:#8e8e8e;-webkit-text-stroke:0;transform:rotate(-90deg) translateX(-50%);transform-origin:0 0;">1000</span>
<span style="left:2608.2px;top:294px;font-size:9.9px;line-height:10px;color:#8e8e8e;-webkit-text-stroke:0;transform:rotate(-90deg) translateX(-50%);transform-origin:0 0;">800</span>
<span style="left:2608.2px;top:353.4px;font-size:9.9px;line-height:10px;color:#8e8e8e;-webkit-text-stroke:0;transform:rotate(-90deg) translateX(-50%);transform-origin:0 0;">600</span>
<span style="left:2608.2px;top:412.8px;font-size:9.9px;line-height:10px;color:#8e8e8e;-webkit-text-stroke:0;transform:rotate(-90deg) translateX(-50%);transform-origin:0 0;">400</span>
<span style="left:2608.2px;top:472.2px;font-size:9.9px;line-height:10px;color:#8e8e8e;-webkit-text-stroke:0;transform:rotate(-90deg) translateX(-50%);transform-origin:0 0;">200</span>
<span style="left:2608.2px;top:531.6px;font-size:9.9px;line-height:10px;color:#8e8e8e;-webkit-text-stroke:0;transform:rotate(-90deg) translateX(-50%);transform-origin:0 0;">0</span>
<span style="left:2608.2px;top:591px;font-size:9.9px;line-height:10px;color:#8e8e8e;-webkit-text-stroke:0;transform:rotate(-90deg) translateX(-50%);transform-origin:0 0;">200</span>
<span style="left:2608.2px;top:650.4px;font-size:9.9px;line-height:10px;color:#8e8e8e;-webkit-text-stroke:0;transform:rotate(-90deg) translateX(-50%);transform-origin:0 0;">400</span>
<span style="left:2608.2px;top:709.8px;font-size:9.9px;line-height:10px;color:#8e8e8e;-webkit-text-stroke:0;transform:rotate(-90deg) translateX(-50%);transform-origin:0 0;">600</span>
<span style="left:2608.2px;top:769.2px;font-size:9.9px;line-height:10px;color:#8e8e8e;-webkit-text-stroke:0;transform:rotate(-90deg) translateX(-50%);transform-origin:0 0;">800</span>
<span style="left:2608.2px;top:828.6px;font-size:9.9px;line-height:10px;color:#8e8e8e;-webkit-text-stroke:0;transform:rotate(-90deg) translateX(-50%);transform-origin:0 0;">1000</span>
<span style="left:2608.2px;top:888px;font-size:9.9px;line-height:10px;color:#8e8e8e;-webkit-text-stroke:0;transform:rotate(-90deg) translateX(-50%);transform-origin:0 0;">1200</span>
<span style="left:2608.2px;top:947.4px;font-size:9.9px;line-height:10px;color:#8e8e8e;-webkit-text-stroke:0;transform:rotate(-90deg) translateX(-50%);transform-origin:0 0;">1400</span>
<div style="left:33.9px;top:140.7px;width:16.8px;height:15.6px;background:#f5f5f5;"></div>
<svg style="left:36.3px;top:142.8px;" width="12" height="12" viewBox="0 0 4 4"><path d="M0.5 0.5L2.2 2.2M2.2 0.8V2.2H0.8" stroke="#999" stroke-width="0.35" fill="none"/><path d="M3.4 0.5V3.6H0.4" stroke="#bbb" stroke-width="0.3" fill="none" stroke-dasharray="0.5 0.4"/></svg>
<div style="left:2605.2px;top:140.7px;width:16.8px;height:15.6px;background:#f5f5f5;"></div>
<svg style="left:2607.6px;top:142.8px;" width="12" height="12" viewBox="0 0 4 4"><path d="M0.5 0.5L2.2 2.2M2.2 0.8V2.2H0.8" stroke="#999" stroke-width="0.35" fill="none"/><path d="M3.4 0.5V3.6H0.4" stroke="#bbb" stroke-width="0.3" fill="none" stroke-dasharray="0.5 0.4"/></svg>
<div style="left:49.8px;top:156.9px;width:2048.7px;height:1172.4px;background:#fff;"></div>
<div style="left:2621.1px;top:156.9px;width:1405.5px;height:851.7px;background:#fff;"></div>
<svg style="left:49.8px;top:360.75px;" width="2048.7" height="4.5" viewBox="0 0 682.9 1.5"><path d="M0 0.75H682.9" stroke="#ececff" stroke-width="1.5"/><path d="M0 0.75H682.9" stroke="#3a3ae6" stroke-width="1.5" stroke-dasharray="1 1" stroke-dashoffset="1.6" opacity="0.7"/></svg>
<svg style="left:49.8px;top:431.25px;" width="2048.7" height="4.5" viewBox="0 0 682.9 1.5"><path d="M0 0.75H682.9" stroke="#ececff" stroke-width="1.5"/><path d="M0 0.75H682.9" stroke="#3a3ae6" stroke-width="1.5" stroke-dasharray="1 1" stroke-dashoffset="1.6" opacity="0.7"/></svg>
<svg style="left:1065.6px;top:156.9px;" width="8.4" height="1172.4" viewBox="0 0 2.8 390.8"><path d="M1.4 0V390.8" stroke="#f3f3ff" stroke-width="2.6"/><path d="M1.4 0V390.8" stroke="#3a3ae6" stroke-width="2.8" stroke-dasharray="0.8 1.2" stroke-dashoffset="1.2" opacity="0.6"/></svg>
<svg style="left:1125.6px;top:156.9px;" width="8.4" height="1172.4" viewBox="0 0 2.8 390.8"><path d="M1.4 0V390.8" stroke="#f3f3ff" stroke-width="2.6"/><path d="M1.4 0V390.8" stroke="#3a3ae6" stroke-width="2.8" stroke-dasharray="0.8 1.2" stroke-dashoffset="1.2" opacity="0.6"/></svg>
<div style="left:4.5px;top:123px;width:25.2px;height:28.2px;background:#fff;box-shadow:inset 0 0 0 1px #cfcfcf;"></div>
<svg style="left:6.9px;top:126.9px;" width="20.4" height="20.4" viewBox="0 0 10 10"><path d="M2.6 1L7 6.2L5 6.3L6 8.6L5 9L4 6.8L2.6 8Z" fill="#222"/><path d="M7.6 9.4h1.6v-1.6z" fill="#222"/></svg>
<svg style="left:6.9px;top:157.8px;" width="20.4" height="20.4" viewBox="0 0 10 10"><path d="M2 1.5C2.5 3.5 3 4.5 3.2 6" stroke="#333" stroke-width="0.7" fill="none"/><path d="M3.8 4.4L7.4 7.6L5.6 7.6L5.8 8.8Z" fill="#222"/><rect x="1.2" y="2.6" width="1.6" height="1.6" fill="#222"/><path d="M7.8 9.4h1.4v-1.4z" fill="#222"/></svg>
<svg style="left:6.9px;top:190.8px;" width="20.4" height="20.4" viewBox="0 0 10 10"><path d="M3 1V6.8H8.8M1 3H6.8V8.8" stroke="#333" stroke-width="0.75" fill="none"/><path d="M2 1.6L4 0.8M1 4L2 2.4" stroke="#333" stroke-width="0.5"/><path d="M7.8 9.8h1.6v-1.6z" fill="#222"/></svg>
<svg style="left:6.9px;top:222.3px;" width="20.4" height="20.4" viewBox="0 0 10 10"><circle cx="4" cy="3.8" r="2.7" fill="none" stroke="#333" stroke-width="0.8"/><path d="M6 5.8L8.8 8.6" stroke="#222" stroke-width="1.3"/></svg>
<svg style="left:6.9px;top:256.8px;" width="20.4" height="20.4" viewBox="0 0 10 10"><path d="M1.4 1.6V7.8M1.4 3H4.4" stroke="#333" stroke-width="0.7" fill="none"/><path d="M3 8.4C4.5 6 6 8.6 8.4 6.4" stroke="#222" stroke-width="0.9" fill="none"/><path d="M7.8 9.8h1.6v-1.6z" fill="#222"/></svg>
<svg style="left:6.9px;top:286.8px;" width="20.4" height="20.4" viewBox="0 0 10 10"><path d="M2.6 3.2C4 0.6 7 1.6 6.2 4C5.4 6.4 2 5.6 3 8.2C3.6 9.4 5.6 9 6.4 8" stroke="#222" stroke-width="1" fill="none"/><path d="M1.4 4.4L3.8 3.2" stroke="#222" stroke-width="0.8"/></svg>
<svg style="left:6.9px;top:315.3px;" width="20.4" height="20.4" viewBox="0 0 10 10"><rect x="1.2" y="1.6" width="6.6" height="6" fill="none" stroke="#333" stroke-width="0.8"/><path d="M7.8 9.8h1.6v-1.6z" fill="#222"/></svg>
<svg style="left:6.9px;top:345.3px;" width="20.4" height="20.4" viewBox="0 0 10 10"><circle cx="4.5" cy="4.6" r="3.4" fill="none" stroke="#333" stroke-width="0.8"/><path d="M7.8 9.8h1.6v-1.6z" fill="#222"/></svg>
<svg style="left:6.9px;top:375.9px;" width="20.4" height="20.4" viewBox="0 0 10 10"><path d="M2.6 1.6H6.4L8.2 4.7L6.4 7.8H2.6L0.9 4.7Z" fill="none" stroke="#333" stroke-width="0.8"/><path d="M7.8 9.8h1.6v-1.6z" fill="#222"/></svg>
<svg style="left:6.9px;top:448.2px;" width="20.4" height="20.4" viewBox="0 0 10 10"><path d="M1.6 8L7.6 2" stroke="#333" stroke-width="0.8"/><path d="M7.8 9.8h1.6v-1.6z" fill="#222"/></svg>
<svg style="left:6.9px;top:478.8px;" width="20.4" height="20.4" viewBox="0 0 10 10"><path d="M2 2L8 8" stroke="#333" stroke-width="0.8"/><rect x="1" y="1" width="1.8" height="1.8" fill="#c04a1a"/><rect x="7" y="7" width="1.8" height="1.8" fill="#c04a1a"/></svg>
<svg style="left:6.9px;top:513.9px;" width="20.4" height="20.4" viewBox="0 0 10 10"><rect x="2.6" y="2.8" width="5.6" height="5" fill="#444"/><rect x="1.2" y="1.4" width="5.6" height="5" fill="#fff" stroke="#333" stroke-width="0.8"/><path d="M8 9.9h1.6v-1.6z" fill="#222"/></svg>
<svg style="left:6.9px;top:542.7px;" width="20.4" height="20.4" viewBox="0 0 10 10"><rect x="1" y="1" width="8" height="8" fill="#fff" stroke="#222" stroke-width="0.5"/><rect x="1" y="1" width="2" height="2" fill="#222"/><rect x="1" y="5" width="2" height="2" fill="#222"/><rect x="3" y="3" width="2" height="2" fill="#222"/><rect x="3" y="7" width="2" height="2" fill="#222"/><rect x="5" y="1" width="2" height="2" fill="#222"/><rect x="5" y="5" width="2" height="2" fill="#222"/><rect x="7" y="3" width="2" height="2" fill="#222"/><rect x="7" y="7" width="2" height="2" fill="#222"/></svg>
<svg style="left:6.9px;top:579.3px;" width="20.4" height="20.4" viewBox="0 0 10 10"><path d="M1.4 8.6L5.4 4.6" stroke="#333" stroke-width="1"/><path d="M5 3.4L6.8 5.2M5.8 4.4L7.8 2.2" stroke="#c04a1a" stroke-width="1.5"/><path d="M8 9.9h1.6v-1.6z" fill="#222"/></svg>
<svg style="left:6.9px;top:608.7px;" width="20.4" height="20.4" viewBox="0 0 10 10"><path d="M1.6 5L4.8 1.8L8 5L4.8 8.2Z" fill="#fff" stroke="#222" stroke-width="0.9"/><path d="M2.6 5.4H7L4.8 7.6Z" fill="#e07a2a"/><path d="M4.8 1.8V0.6" stroke="#222" stroke-width="0.7"/><circle cx="8" cy="7.6" r="1" fill="#e04a1a"/></svg>
<svg style="left:6.9px;top:636.9px;" width="20.4" height="20.4" viewBox="0 0 10 10"><path d="M5 1.4L6.4 5.4H3.6Z" fill="#fff" stroke="#333" stroke-width="0.7"/><rect x="2.4" y="6" width="5.2" height="1.4" fill="#333"/><rect x="1.6" y="7.8" width="6.8" height="1" fill="#c04a1a"/></svg>
<span style="left:9.3px;top:408.6px;font-size:21.00px;line-height:25.2px;color:#222;">A</span>
<svg style="left:23.1px;top:427.8px;" width="4.2" height="4.2" viewBox="0 0 1.4 1.4"><path d="M0 1.4H1.4V0Z" fill="#222"/></svg>
<div style="left:6.3px;top:183.9px;width:21.6px;height:1.02px;background:#dadada;"></div>
<div style="left:6.3px;top:248.1px;width:21.6px;height:1.02px;background:#dadada;"></div>
<div style="left:6.3px;top:438px;width:21.6px;height:1.02px;background:#dadada;"></div>
<div style="left:6.3px;top:506.1px;width:21.6px;height:1.02px;background:#dadada;"></div>
<div style="left:6.3px;top:570px;width:21.6px;height:1.02px;background:#dadada;"></div>
<div style="left:6.3px;top:666.9px;width:21.6px;height:1.02px;background:#dadada;"></div>
<svg style="left:8.1px;top:679.5px;" width="18" height="18" viewBox="0 0 6 6"><circle cx="3" cy="3" r="2.4" fill="none" stroke="#c0c0c0" stroke-width="0.4"/><path d="M3 1.4V4.6M1.4 3H4.6" stroke="#c0c0c0" stroke-width="0.4"/></svg>
<div style="left:2576.4px;top:123px;width:25.2px;height:28.2px;background:#fff;box-shadow:inset 0 0 0 1px #cfcfcf;"></div>
<svg style="left:2578.8px;top:126.9px;" width="20.4" height="20.4" viewBox="0 0 10 10"><path d="M2.6 1L7 6.2L5 6.3L6 8.6L5 9L4 6.8L2.6 8Z" fill="#222"/><path d="M7.6 9.4h1.6v-1.6z" fill="#222"/></svg>
<svg style="left:2578.8px;top:157.8px;" width="20.4" height="20.4" viewBox="0 0 10 10"><path d="M2 1.5C2.5 3.5 3 4.5 3.2 6" stroke="#333" stroke-width="0.7" fill="none"/><path d="M3.8 4.4L7.4 7.6L5.6 7.6L5.8 8.8Z" fill="#222"/><rect x="1.2" y="2.6" width="1.6" height="1.6" fill="#222"/><path d="M7.8 9.4h1.4v-1.4z" fill="#222"/></svg>
<svg style="left:2578.8px;top:190.8px;" width="20.4" height="20.4" viewBox="0 0 10 10"><path d="M3 1V6.8H8.8M1 3H6.8V8.8" stroke="#333" stroke-width="0.75" fill="none"/><path d="M2 1.6L4 0.8M1 4L2 2.4" stroke="#333" stroke-width="0.5"/><path d="M7.8 9.8h1.6v-1.6z" fill="#222"/></svg>
<svg style="left:2578.8px;top:222.3px;" width="20.4" height="20.4" viewBox="0 0 10 10"><circle cx="4" cy="3.8" r="2.7" fill="none" stroke="#333" stroke-width="0.8"/><path d="M6 5.8L8.8 8.6" stroke="#222" stroke-width="1.3"/></svg>
<svg style="left:2578.8px;top:256.8px;" width="20.4" height="20.4" viewBox="0 0 10 10"><path d="M1.4 1.6V7.8M1.4 3H4.4" stroke="#333" stroke-width="0.7" fill="none"/><path d="M3 8.4C4.5 6 6 8.6 8.4 6.4" stroke="#222" stroke-width="0.9" fill="none"/><path d="M7.8 9.8h1.6v-1.6z" fill="#222"/></svg>
<svg style="left:2578.8px;top:286.8px;" width="20.4" height="20.4" viewBox="0 0 10 10"><path d="M2.6 3.2C4 0.6 7 1.6 6.2 4C5.4 6.4 2 5.6 3 8.2C3.6 9.4 5.6 9 6.4 8" stroke="#222" stroke-width="1" fill="none"/><path d="M1.4 4.4L3.8 3.2" stroke="#222" stroke-width="0.8"/></svg>
<svg style="left:2578.8px;top:315.3px;" width="20.4" height="20.4" viewBox="0 0 10 10"><rect x="1.2" y="1.6" width="6.6" height="6" fill="none" stroke="#333" stroke-width="0.8"/><path d="M7.8 9.8h1.6v-1.6z" fill="#222"/></svg>
<svg style="left:2578.8px;top:345.3px;" width="20.4" height="20.4" viewBox="0 0 10 10"><circle cx="4.5" cy="4.6" r="3.4" fill="none" stroke="#333" stroke-width="0.8"/><path d="M7.8 9.8h1.6v-1.6z" fill="#222"/></svg>
<svg style="left:2578.8px;top:375.9px;" width="20.4" height="20.4" viewBox="0 0 10 10"><path d="M2.6 1.6H6.4L8.2 4.7L6.4 7.8H2.6L0.9 4.7Z" fill="none" stroke="#333" stroke-width="0.8"/><path d="M7.8 9.8h1.6v-1.6z" fill="#222"/></svg>
<svg style="left:2578.8px;top:448.2px;" width="20.4" height="20.4" viewBox="0 0 10 10"><path d="M1.6 8L7.6 2" stroke="#333" stroke-width="0.8"/><path d="M7.8 9.8h1.6v-1.6z" fill="#222"/></svg>
<svg style="left:2578.8px;top:478.8px;" width="20.4" height="20.4" viewBox="0 0 10 10"><path d="M2 2L8 8" stroke="#333" stroke-width="0.8"/><rect x="1" y="1" width="1.8" height="1.8" fill="#c04a1a"/><rect x="7" y="7" width="1.8" height="1.8" fill="#c04a1a"/></svg>
<svg style="left:2578.8px;top:513.9px;" width="20.4" height="20.4" viewBox="0 0 10 10"><rect x="2.6" y="2.8" width="5.6" height="5" fill="#444"/><rect x="1.2" y="1.4" width="5.6" height="5" fill="#fff" stroke="#333" stroke-width="0.8"/><path d="M8 9.9h1.6v-1.6z" fill="#222"/></svg>
<svg style="left:2578.8px;top:542.7px;" width="20.4" height="20.4" viewBox="0 0 10 10"><rect x="1" y="1" width="8" height="8" fill="#fff" stroke="#222" stroke-width="0.5"/><rect x="1" y="1" width="2" height="2" fill="#222"/><rect x="1" y="5" width="2" height="2" fill="#222"/><rect x="3" y="3" width="2" height="2" fill="#222"/><rect x="3" y="7" width="2" height="2" fill="#222"/><rect x="5" y="1" width="2" height="2" fill="#222"/><rect x="5" y="5" width="2" height="2" fill="#222"/><rect x="7" y="3" width="2" height="2" fill="#222"/><rect x="7" y="7" width="2" height="2" fill="#222"/></svg>
<svg style="left:2578.8px;top:579.3px;" width="20.4" height="20.4" viewBox="0 0 10 10"><path d="M1.4 8.6L5.4 4.6" stroke="#333" stroke-width="1"/><path d="M5 3.4L6.8 5.2M5.8 4.4L7.8 2.2" stroke="#c04a1a" stroke-width="1.5"/><path d="M8 9.9h1.6v-1.6z" fill="#222"/></svg>
<svg style="left:2578.8px;top:608.7px;" width="20.4" height="20.4" viewBox="0 0 10 10"><path d="M1.6 5L4.8 1.8L8 5L4.8 8.2Z" fill="#fff" stroke="#222" stroke-width="0.9"/><path d="M2.6 5.4H7L4.8 7.6Z" fill="#e07a2a"/><path d="M4.8 1.8V0.6" stroke="#222" stroke-width="0.7"/><circle cx="8" cy="7.6" r="1" fill="#e04a1a"/></svg>
<svg style="left:2578.8px;top:636.9px;" width="20.4" height="20.4" viewBox="0 0 10 10"><path d="M5 1.4L6.4 5.4H3.6Z" fill="#fff" stroke="#333" stroke-width="0.7"/><rect x="2.4" y="6" width="5.2" height="1.4" fill="#333"/><rect x="1.6" y="7.8" width="6.8" height="1" fill="#c04a1a"/></svg>
<span style="left:2581.2px;top:408.6px;font-size:21.00px;line-height:25.2px;color:#222;">A</span>
<svg style="left:2595px;top:427.8px;" width="4.2" height="4.2" viewBox="0 0 1.4 1.4"><path d="M0 1.4H1.4V0Z" fill="#222"/></svg>
<div style="left:2578.2px;top:183.9px;width:21.6px;height:1.02px;background:#dadada;"></div>
<div style="left:2578.2px;top:248.1px;width:21.6px;height:1.02px;background:#dadada;"></div>
<div style="left:2578.2px;top:438px;width:21.6px;height:1.02px;background:#dadada;"></div>
<div style="left:2578.2px;top:506.1px;width:21.6px;height:1.02px;background:#dadada;"></div>
<div style="left:2578.2px;top:570px;width:21.6px;height:1.02px;background:#dadada;"></div>
<div style="left:2578.2px;top:666.9px;width:21.6px;height:1.02px;background:#dadada;"></div>
<svg style="left:2580px;top:679.5px;" width="18" height="18" viewBox="0 0 6 6"><circle cx="3" cy="3" r="2.4" fill="none" stroke="#c0c0c0" stroke-width="0.4"/><path d="M3 1.4V4.6M1.4 3H4.6" stroke="#c0c0c0" stroke-width="0.4"/></svg>
<div style="left:2098.5px;top:156.9px;width:15.6px;height:1172.1px;background:#f1f1f1;"></div>
<div style="left:2099.1px;top:171.9px;width:14.4px;height:1139.1px;background:#cccccc;"></div>
<svg style="left:2103px;top:162.75px;" width="6.6" height="3.3" viewBox="0 0 2.2 1.1"><path d="M0 1.1 H2.2 L1.1 0 Z" fill="#444"/></svg>
<svg style="left:2103px;top:1318.95px;" width="6.6" height="3.3" viewBox="0 0 2.2 1.1"><path d="M0 0H2.2 L1.1 1.1 Z" fill="#444"/></svg>
<div style="left:4026.6px;top:156.9px;width:15.6px;height:851.7px;background:#f1f1f1;"></div>
<div style="left:4027.2px;top:171.9px;width:14.4px;height:818.1px;background:#cccccc;"></div>
<svg style="left:4031.1px;top:162.75px;" width="6.6" height="3.3" viewBox="0 0 2.2 1.1"><path d="M0 1.1 H2.2 L1.1 0 Z" fill="#444"/></svg>
<svg style="left:4031.1px;top:998.55px;" width="6.6" height="3.3" viewBox="0 0 2.2 1.1"><path d="M0 0H2.2 L1.1 1.1 Z" fill="#444"/></svg>
<div style="left:2116.5px;top:117px;width:439.5px;height:1251px;background:#f3f3f3;"></div>
<div style="left:2115.3px;top:138px;width:2.7px;height:1230px;background:#ececec;"></div>
<div style="left:2118px;top:138px;width:2.7px;height:1230px;background:#f9f9f9;"></div>
<div style="left:2117.4px;top:117.6px;width:438.6px;height:20.7px;background:#e3e3e3;"></div>
<span style="left:2121.9px;top:121.68px;font-size:11.70px;line-height:14.04px;color:#333;letter-spacing:0.047px;">Свойства объекта</span>
<span style="left:2521.2px;top:121.62px;font-size:10.80px;line-height:12.96px;color:#aaa;">«</span>
<span style="left:2538px;top:121.56px;font-size:11.40px;line-height:13.68px;color:#aaa;">×</span>
<div style="left:2117.4px;top:138.3px;width:418.5px;height:30px;background:#e9e9e9;"></div>
<div style="left:2121.3px;top:140.4px;width:22.8px;height:25.8px;background:#fff;box-shadow:inset 0 0 0 1px #d0d0d0;"></div>
<svg style="left:2126.7px;top:143.4px;" width="12" height="21" viewBox="0 0 4 7"><path d="M2 0.4L3 2.6V5.6H1V2.6Z" fill="#fff" stroke="#555" stroke-width="0.45"/><rect x="1" y="5.6" width="2" height="1" fill="#555"/></svg>
<svg style="left:2152.8px;top:144px;" width="19.2" height="19.2" viewBox="0 0 10 10"><path d="M1.6 5L4.8 1.8L8 5L4.8 8.2Z" fill="#fff" stroke="#222" stroke-width="0.9"/><path d="M2.6 5.4H7L4.8 7.6Z" fill="#e07a2a"/><path d="M4.8 1.8V0.6" stroke="#222" stroke-width="0.7"/><circle cx="8" cy="7.6" r="1" fill="#e04a1a"/></svg>
<svg style="left:2182.2px;top:144.3px;" width="18.6" height="18.6" viewBox="0 0 10 10"><rect x="1" y="1" width="8" height="8" fill="#fff" stroke="#222" stroke-width="0.5"/><rect x="1" y="1" width="2" height="2" fill="#222"/><rect x="1" y="5" width="2" height="2" fill="#222"/><rect x="3" y="3" width="2" height="2" fill="#222"/><rect x="3" y="7" width="2" height="2" fill="#222"/><rect x="5" y="1" width="2" height="2" fill="#222"/><rect x="5" y="5" width="2" height="2" fill="#222"/><rect x="7" y="3" width="2" height="2" fill="#222"/><rect x="7" y="7" width="2" height="2" fill="#222"/></svg>
<div style="left:2475px;top:140.4px;width:23.1px;height:25.8px;background:#fff;box-shadow:inset 0 0 0 1px #cdcdcd;"></div>
<div style="left:2505.9px;top:140.4px;width:23.1px;height:25.8px;background:#fff;box-shadow:inset 0 0 0 1px #cdcdcd;"></div>
<svg style="left:2479.2px;top:144.6px;" width="15" height="18" viewBox="0 0 5 6"><path d="M0.5 5.5V1.8A1.3 1.3 0 0 1 1.8 0.5H3.2A1.3 1.3 0 0 1 4.5 1.8V5.5Z" fill="#fff" stroke="#444" stroke-width="0.5"/><path d="M0.5 1.6H4.5" stroke="#444" stroke-width="0.9"/></svg>
<svg style="left:2509.8px;top:144.6px;" width="16.2" height="18" viewBox="0 0 5.4 6"><path d="M0.5 0.8H3.4M4.5 2V5.5H0.5V0.8" fill="none" stroke="#666" stroke-width="0.5"/><path d="M3.4 0.3L4.9 0.3L4.9 1.8Z" fill="#444"/></svg>
<span style="left:2123.1px;top:171.48px;font-size:11.70px;line-height:14.04px;color:#222;font-weight:bold;letter-spacing:-0.074px;">Абрис</span>
<svg style="left:2123.1px;top:196.8px;" width="9" height="19.8" viewBox="0 0 3 6.6"><path d="M1.5 0.3L2.3 2V4.8H0.7V2Z" fill="#fff" stroke="#555" stroke-width="0.4"/><rect x="0.7" y="4.8" width="1.6" height="1" fill="#666"/></svg>
<div style="left:2135.4px;top:196.8px;width:1.5px;height:19.2px;background:#555;"></div>
<div style="left:2142.6px;top:194.7px;width:277.8px;height:23.4px;background:#fff;box-shadow:inset 0 0 0 1.3px #a6a6a6;"></div>
<span style="left:2148px;top:199.74px;font-size:11.10px;line-height:13.32px;color:#444;">0,2 мм</span>
<div style="left:2402.4px;top:195.6px;width:17.1px;height:21.6px;background:#ececec;"></div>
<svg style="left:2407.2px;top:204.75px;" width="7.8" height="3.9" viewBox="0 0 2.6 1.3"><path d="M0 0H2.6 L1.3 1.3 Z" fill="#111"/></svg>
<div style="left:2426.1px;top:194.7px;width:84.3px;height:23.4px;background:#e8e8e8;box-shadow:inset 0 0 0 1.3px #c8c8c8;"></div>
<span style="left:2430.3px;top:199.74px;font-size:11.10px;line-height:13.32px;color:#333;letter-spacing:-0.093px;">миллимет...</span>
<svg style="left:2498.1px;top:204.75px;" width="7.8" height="3.9" viewBox="0 0 2.6 1.3"><path d="M0 0H2.6 L1.3 1.3 Z" fill="#111"/></svg>
<svg style="left:2121.3px;top:226.2px;" width="15" height="16.8" viewBox="0 0 5 5.6"><rect x="1.4" y="0.4" width="1.5" height="1.5" fill="#e04a2a"/><rect x="2.9" y="0.4" width="1.5" height="1.5" fill="#2a8ad8"/><rect x="1.4" y="1.9" width="1.5" height="1.5" fill="#2aa84a"/><rect x="2.9" y="1.9" width="1.5" height="1.5" fill="#e8c02a"/><path d="M1 0.6V5.2" stroke="#666" stroke-width="0.6"/></svg>
<div style="left:2142.6px;top:223.2px;width:277.8px;height:23.4px;background:#f4f4f4;box-shadow:inset 0 0 0 1.3px #a6a6a6;"></div>
<div style="left:2402.4px;top:224.1px;width:17.1px;height:21.6px;background:#ececec;"></div>
<svg style="left:2407.2px;top:233.25px;" width="7.8" height="3.9" viewBox="0 0 2.6 1.3"><path d="M0 0H2.6 L1.3 1.3 Z" fill="#111"/></svg>
<svg style="left:2123.1px;top:255.6px;" width="9" height="19.8" viewBox="0 0 3 6.6"><path d="M1.5 0.3L2.3 2V4.8H0.7V2Z" fill="#fff" stroke="#555" stroke-width="0.4"/><rect x="0.7" y="4.8" width="1.6" height="1" fill="#666"/></svg>
<div style="left:2135.4px;top:255.6px;width:1.5px;height:19.2px;background:#555;"></div>
<div style="left:2142.6px;top:252.9px;width:277.8px;height:23.4px;background:#fff;box-shadow:inset 0 0 0 1.3px #a6a6a6;"></div>
<div style="left:2145px;top:263.7px;width:256.5px;height:2.1px;background:#444;"></div>
<div style="left:2402.4px;top:253.8px;width:17.1px;height:21.6px;background:#ececec;"></div>
<svg style="left:2407.8px;top:263.25px;" width="6.6" height="3.3" viewBox="0 0 2.2 1.1"><path d="M0 0H2.2 L1.1 1.1 Z" fill="#444"/></svg>
<div style="left:2430.3px;top:262.8px;width:4.5px;height:4.5px;background:#111;border-radius:2.25px;"></div>
<div style="left:2436.6px;top:262.8px;width:4.5px;height:4.5px;background:#111;border-radius:2.25px;"></div>
<div style="left:2442.9px;top:262.8px;width:4.5px;height:4.5px;background:#111;border-radius:2.25px;"></div>
<div style="left:2122.5px;top:282.6px;width:391.5px;height:1.02px;background:#dadada;"></div>
<svg style="left:2122.5px;top:291.6px;" width="18" height="19.2" viewBox="0 0 6 6.4"><path d="M0.6 6.2L3 0.6L5.4 6.2" fill="none" stroke="#222" stroke-width="1.3"/></svg>
<div style="left:2142.6px;top:289.2px;width:262.8px;height:24.6px;background:#fff;box-shadow:inset 0 0 0 1.3px #a6a6a6;"></div>
<span style="left:2148px;top:294.84px;font-size:11.10px;line-height:13.32px;color:#444;">1,0</span>
<div style="left:2389.5px;top:290.1px;width:15px;height:22.8px;background:#f2f2f2;"></div>
<svg style="left:2394.15px;top:295.27px;" width="5.7" height="2.85" viewBox="0 0 1.9 0.95"><path d="M0 0.95 H1.9 L0.95 0 Z" fill="#333"/></svg>
<svg style="left:2394.15px;top:305.48px;" width="5.7" height="2.85" viewBox="0 0 1.9 0.95"><path d="M0 0H1.9 L0.95 0.95 Z" fill="#333"/></svg>
<div style="left:2426.4px;top:290.4px;width:24px;height:24px;background:#fff;box-shadow:inset 0 0 0 1.3px #b4b4b4;"></div>
<div style="left:2426.4px;top:320.4px;width:24px;height:24px;background:#fff;box-shadow:inset 0 0 0 1.3px #b4b4b4;"></div>
<div style="left:2456.4px;top:350.4px;width:24px;height:24px;background:#fff;box-shadow:inset 0 0 0 1.3px #b4b4b4;"></div>
<svg style="left:2430.3px;top:294px;" width="16.2" height="16.2" viewBox="0 0 5.4 5.4"><path d="M1.3 5.4V1.3H5.4" fill="none" stroke="#2a2a2a" stroke-width="2.1"/><path d="M2.3 5.4V2.3H5.4" fill="none" stroke="#aaa" stroke-width="0.3"/></svg>
<svg style="left:2430.3px;top:325.8px;" width="16.2" height="13.2" viewBox="0 0 5.4 4.4"><rect x="0.5" y="1.2" width="4.6" height="2" fill="#2a2a2a" rx="0"/><path d="M0.5 2.2H4.2" stroke="#ccc" stroke-width="0.35"/></svg>
<svg style="left:2430.3px;top:354.6px;" width="16.2" height="16.8" viewBox="0 0 5.4 5.6"><path d="M0.2 1.2H4V5.6" fill="none" stroke="#2a2a2a" stroke-width="1.7"/><path d="M0.2 1.2H4V5.6" fill="none" stroke="#bbb" stroke-width="0.3"/></svg>
<svg style="left:2460.3px;top:294px;" width="16.2" height="16.2" viewBox="0 0 5.4 5.4"><path d="M1.3 5.4V2.5A1.2 1.2 0 0 1 2.5 1.3H5.4" fill="none" stroke="#2a2a2a" stroke-width="2.1"/><path d="M2.3 5.4V2.3H5.4" fill="none" stroke="#aaa" stroke-width="0.3"/></svg>
<svg style="left:2460.3px;top:325.8px;" width="16.2" height="13.2" viewBox="0 0 5.4 4.4"><rect x="0.5" y="1.2" width="4.6" height="2" fill="#2a2a2a" rx="0.9"/><path d="M1.2 2.2H4.2" stroke="#ccc" stroke-width="0.35"/></svg>
<svg style="left:2460.3px;top:354.6px;" width="16.2" height="16.8" viewBox="0 0 5.4 5.6"><path d="M0.2 1.2H4V5.6" fill="none" stroke="#2a2a2a" stroke-width="1.7"/><path d="M0.2 1.9H3.3V5.6" fill="none" stroke="#bbb" stroke-width="0.3"/></svg>
<svg style="left:2490.3px;top:294px;" width="16.2" height="16.2" viewBox="0 0 5.4 5.4"><path d="M1.3 5.4V3.5A2.2 2.2 0 0 1 3.5 1.3H5.4" fill="none" stroke="#2a2a2a" stroke-width="2.1"/><path d="M2.3 5.4V2.3H5.4" fill="none" stroke="#aaa" stroke-width="0.3"/></svg>
<svg style="left:2490.3px;top:325.8px;" width="16.2" height="13.2" viewBox="0 0 5.4 4.4"><rect x="0.5" y="1.2" width="4.6" height="2" fill="#2a2a2a" rx="0"/><path d="M1.2 2.2H4.2" stroke="#ccc" stroke-width="0.35"/></svg>
<svg style="left:2490.3px;top:354.6px;" width="16.2" height="16.8" viewBox="0 0 5.4 5.6"><path d="M0.2 1.2H2.6A1.4 1.4 0 0 1 4 2.6V5.6" fill="none" stroke="#2a2a2a" stroke-width="1.7"/></svg>
<div style="left:2517.9px;top:176.1px;width:4.8px;height:4.8px;background:#f8f8f8;box-shadow:inset 0 0 0 1px #e2e2e2;"></div>
<div style="left:2517.9px;top:204px;width:4.8px;height:4.8px;background:#f8f8f8;box-shadow:inset 0 0 0 1px #e2e2e2;"></div>
<div style="left:2517.9px;top:232.8px;width:4.8px;height:4.8px;background:#f8f8f8;box-shadow:inset 0 0 0 1px #e2e2e2;"></div>
<div style="left:2517.9px;top:262.5px;width:4.8px;height:4.8px;background:#f8f8f8;box-shadow:inset 0 0 0 1px #e2e2e2;"></div>
<div style="left:2517.9px;top:299.1px;width:4.8px;height:4.8px;background:#f8f8f8;box-shadow:inset 0 0 0 1px #e2e2e2;"></div>
<div style="left:2517.9px;top:329.1px;width:4.8px;height:4.8px;background:#f8f8f8;box-shadow:inset 0 0 0 1px #e2e2e2;"></div>
<div style="left:2517.9px;top:359.1px;width:4.8px;height:4.8px;background:#f8f8f8;box-shadow:inset 0 0 0 1px #e2e2e2;"></div>
<div style="left:2414.4px;top:299.1px;width:4.8px;height:4.8px;background:#f8f8f8;box-shadow:inset 0 0 0 1px #e2e2e2;"></div>
<div style="left:2117.7px;top:379.8px;width:417.3px;height:16.5px;background:#e6e6e6;"></div>
<div style="left:2322px;top:387.3px;width:6px;height:2.4px;background:#222;"></div>
<div style="left:2147.4px;top:228px;width:250.8px;height:14.4px;background:#1a1a1a;"></div>
<div style="left:4044.9px;top:117px;width:439.8px;height:927px;background:#f3f3f3;"></div>
<div style="left:4043.7px;top:138px;width:2.7px;height:906px;background:#ececec;"></div>
<div style="left:4046.4px;top:138px;width:2.7px;height:906px;background:#f9f9f9;"></div>
<div style="left:4045.8px;top:117.6px;width:438.9px;height:20.7px;background:#e3e3e3;"></div>
<span style="left:4050.3px;top:121.68px;font-size:11.70px;line-height:14.04px;color:#333;letter-spacing:0.047px;">Свойства объекта</span>
<span style="left:4449.9px;top:121.62px;font-size:10.80px;line-height:12.96px;color:#aaa;">«</span>
<span style="left:4466.7px;top:121.56px;font-size:11.40px;line-height:13.68px;color:#aaa;">×</span>
<div style="left:4045.8px;top:138.3px;width:418.8px;height:30px;background:#e9e9e9;"></div>
<div style="left:4049.7px;top:140.4px;width:22.8px;height:25.8px;background:#fff;box-shadow:inset 0 0 0 1px #d0d0d0;"></div>
<svg style="left:4055.1px;top:143.4px;" width="12" height="21" viewBox="0 0 4 7"><path d="M2 0.4L3 2.6V5.6H1V2.6Z" fill="#fff" stroke="#555" stroke-width="0.45"/><rect x="1" y="5.6" width="2" height="1" fill="#555"/></svg>
<svg style="left:4081.2px;top:144px;" width="19.2" height="19.2" viewBox="0 0 10 10"><path d="M1.6 5L4.8 1.8L8 5L4.8 8.2Z" fill="#fff" stroke="#222" stroke-width="0.9"/><path d="M2.6 5.4H7L4.8 7.6Z" fill="#e07a2a"/><path d="M4.8 1.8V0.6" stroke="#222" stroke-width="0.7"/><circle cx="8" cy="7.6" r="1" fill="#e04a1a"/></svg>
<svg style="left:4110.6px;top:144.3px;" width="18.6" height="18.6" viewBox="0 0 10 10"><rect x="1" y="1" width="8" height="8" fill="#fff" stroke="#222" stroke-width="0.5"/><rect x="1" y="1" width="2" height="2" fill="#222"/><rect x="1" y="5" width="2" height="2" fill="#222"/><rect x="3" y="3" width="2" height="2" fill="#222"/><rect x="3" y="7" width="2" height="2" fill="#222"/><rect x="5" y="1" width="2" height="2" fill="#222"/><rect x="5" y="5" width="2" height="2" fill="#222"/><rect x="7" y="3" width="2" height="2" fill="#222"/><rect x="7" y="7" width="2" height="2" fill="#222"/></svg>
<svg style="left:4139.4px;top:145.2px;" width="18" height="18" viewBox="0 0 6 6"><path d="M0.4 1H1.6C3 1 3 5 4.4 5H5.6" fill="none" stroke="#333" stroke-width="0.6"/></svg>
<svg style="left:4167.9px;top:144.6px;" width="19.2" height="18.6" viewBox="0 0 6.4 6.2"><rect x="0.6" y="3" width="5.2" height="2.6" fill="#222"/><path d="M0.6 3L2 1.4L3.2 2.6L4.6 0.8L5.8 3Z" fill="#222"/><path d="M4.8 0.4v1.6M4 1.2h1.6" stroke="#222" stroke-width="0.4"/></svg>
<div style="left:4403.7px;top:140.4px;width:23.1px;height:25.8px;background:#fff;box-shadow:inset 0 0 0 1px #cdcdcd;"></div>
<div style="left:4434.6px;top:140.4px;width:23.1px;height:25.8px;background:#fff;box-shadow:inset 0 0 0 1px #cdcdcd;"></div>
<svg style="left:4407.9px;top:144.6px;" width="15" height="18" viewBox="0 0 5 6"><path d="M0.5 5.5V1.8A1.3 1.3 0 0 1 1.8 0.5H3.2A1.3 1.3 0 0 1 4.5 1.8V5.5Z" fill="#fff" stroke="#444" stroke-width="0.5"/><path d="M0.5 1.6H4.5" stroke="#444" stroke-width="0.9"/></svg>
<svg style="left:4438.5px;top:144.6px;" width="16.2" height="18" viewBox="0 0 5.4 6"><path d="M0.5 0.8H3.4M4.5 2V5.5H0.5V0.8" fill="none" stroke="#666" stroke-width="0.5"/><path d="M3.4 0.3L4.9 0.3L4.9 1.8Z" fill="#444"/></svg>
<span style="left:4051.5px;top:171.48px;font-size:11.70px;line-height:14.04px;color:#222;font-weight:bold;letter-spacing:-0.074px;">Абрис</span>
<svg style="left:4051.5px;top:196.8px;" width="9" height="19.8" viewBox="0 0 3 6.6"><path d="M1.5 0.3L2.3 2V4.8H0.7V2Z" fill="#fff" stroke="#555" stroke-width="0.4"/><rect x="0.7" y="4.8" width="1.6" height="1" fill="#666"/></svg>
<div style="left:4063.8px;top:196.8px;width:1.5px;height:19.2px;background:#555;"></div>
<div style="left:4071px;top:194.7px;width:277.8px;height:23.4px;background:#fff;box-shadow:inset 0 0 0 1.3px #a6a6a6;"></div>
<span style="left:4076.4px;top:199.74px;font-size:11.10px;line-height:13.32px;color:#444;">Нет</span>
<div style="left:4330.8px;top:195.6px;width:17.1px;height:21.6px;background:#ececec;"></div>
<svg style="left:4335.6px;top:204.75px;" width="7.8" height="3.9" viewBox="0 0 2.6 1.3"><path d="M0 0H2.6 L1.3 1.3 Z" fill="#111"/></svg>
<div style="left:4354.5px;top:194.7px;width:84.3px;height:23.4px;background:#e8e8e8;box-shadow:inset 0 0 0 1.3px #c8c8c8;"></div>
<span style="left:4358.7px;top:199.74px;font-size:11.10px;line-height:13.32px;color:#333;letter-spacing:-0.093px;">миллимет...</span>
<svg style="left:4426.5px;top:204.75px;" width="7.8" height="3.9" viewBox="0 0 2.6 1.3"><path d="M0 0H2.6 L1.3 1.3 Z" fill="#111"/></svg>
<svg style="left:4049.7px;top:226.2px;" width="15" height="16.8" viewBox="0 0 5 5.6"><rect x="1.4" y="0.4" width="1.5" height="1.5" fill="#e04a2a"/><rect x="2.9" y="0.4" width="1.5" height="1.5" fill="#2a8ad8"/><rect x="1.4" y="1.9" width="1.5" height="1.5" fill="#2aa84a"/><rect x="2.9" y="1.9" width="1.5" height="1.5" fill="#e8c02a"/><path d="M1 0.6V5.2" stroke="#666" stroke-width="0.6"/></svg>
<div style="left:4071px;top:223.2px;width:277.8px;height:23.4px;background:#f4f4f4;box-shadow:inset 0 0 0 1.3px #a6a6a6;"></div>
<div style="left:4330.8px;top:224.1px;width:17.1px;height:21.6px;background:#ececec;"></div>
<svg style="left:4335.6px;top:233.25px;" width="7.8" height="3.9" viewBox="0 0 2.6 1.3"><path d="M0 0H2.6 L1.3 1.3 Z" fill="#111"/></svg>
<svg style="left:4051.5px;top:255.6px;" width="9" height="19.8" viewBox="0 0 3 6.6"><path d="M1.5 0.3L2.3 2V4.8H0.7V2Z" fill="#fff" stroke="#555" stroke-width="0.4"/><rect x="0.7" y="4.8" width="1.6" height="1" fill="#666"/></svg>
<div style="left:4063.8px;top:255.6px;width:1.5px;height:19.2px;background:#555;"></div>
<div style="left:4071px;top:252.9px;width:277.8px;height:23.4px;background:#fff;box-shadow:inset 0 0 0 1.3px #a6a6a6;"></div>
<div style="left:4073.4px;top:263.7px;width:256.5px;height:2.1px;background:#444;"></div>
<div style="left:4330.8px;top:253.8px;width:17.1px;height:21.6px;background:#ececec;"></div>
<svg style="left:4336.2px;top:263.25px;" width="6.6" height="3.3" viewBox="0 0 2.2 1.1"><path d="M0 0H2.2 L1.1 1.1 Z" fill="#444"/></svg>
<div style="left:4358.7px;top:262.8px;width:4.5px;height:4.5px;background:#111;border-radius:2.25px;"></div>
<div style="left:4365px;top:262.8px;width:4.5px;height:4.5px;background:#111;border-radius:2.25px;"></div>
<div style="left:4371.3px;top:262.8px;width:4.5px;height:4.5px;background:#111;border-radius:2.25px;"></div>
<div style="left:4050.9px;top:282.6px;width:391.8px;height:1.02px;background:#dadada;"></div>
<svg style="left:4050.9px;top:291.6px;" width="18" height="19.2" viewBox="0 0 6 6.4"><path d="M0.6 6.2L3 0.6L5.4 6.2" fill="none" stroke="#222" stroke-width="1.3"/></svg>
<div style="left:4071px;top:289.2px;width:262.8px;height:24.6px;background:#fff;box-shadow:inset 0 0 0 1.3px #a6a6a6;"></div>
<span style="left:4076.4px;top:294.84px;font-size:11.10px;line-height:13.32px;color:#444;">1,0</span>
<div style="left:4317.9px;top:290.1px;width:15px;height:22.8px;background:#f2f2f2;"></div>
<svg style="left:4322.55px;top:295.27px;" width="5.7" height="2.85" viewBox="0 0 1.9 0.95"><path d="M0 0.95 H1.9 L0.95 0 Z" fill="#333"/></svg>
<svg style="left:4322.55px;top:305.48px;" width="5.7" height="2.85" viewBox="0 0 1.9 0.95"><path d="M0 0H1.9 L0.95 0.95 Z" fill="#333"/></svg>
<div style="left:4354.8px;top:290.4px;width:24px;height:24px;background:#fff;box-shadow:inset 0 0 0 1.3px #b4b4b4;"></div>
<div style="left:4354.8px;top:320.4px;width:24px;height:24px;background:#fff;box-shadow:inset 0 0 0 1.3px #b4b4b4;"></div>
<div style="left:4384.8px;top:350.4px;width:24px;height:24px;background:#fff;box-shadow:inset 0 0 0 1.3px #b4b4b4;"></div>
<svg style="left:4358.7px;top:294px;" width="16.2" height="16.2" viewBox="0 0 5.4 5.4"><path d="M1.3 5.4V1.3H5.4" fill="none" stroke="#2a2a2a" stroke-width="2.1"/><path d="M2.3 5.4V2.3H5.4" fill="none" stroke="#aaa" stroke-width="0.3"/></svg>
<svg style="left:4358.7px;top:325.8px;" width="16.2" height="13.2" viewBox="0 0 5.4 4.4"><rect x="0.5" y="1.2" width="4.6" height="2" fill="#2a2a2a" rx="0"/><path d="M0.5 2.2H4.2" stroke="#ccc" stroke-width="0.35"/></svg>
<svg style="left:4358.7px;top:354.6px;" width="16.2" height="16.8" viewBox="0 0 5.4 5.6"><path d="M0.2 1.2H4V5.6" fill="none" stroke="#2a2a2a" stroke-width="1.7"/><path d="M0.2 1.2H4V5.6" fill="none" stroke="#bbb" stroke-width="0.3"/></svg>
<svg style="left:4388.7px;top:294px;" width="16.2" height="16.2" viewBox="0 0 5.4 5.4"><path d="M1.3 5.4V2.5A1.2 1.2 0 0 1 2.5 1.3H5.4" fill="none" stroke="#2a2a2a" stroke-width="2.1"/><path d="M2.3 5.4V2.3H5.4" fill="none" stroke="#aaa" stroke-width="0.3"/></svg>
<svg style="left:4388.7px;top:325.8px;" width="16.2" height="13.2" viewBox="0 0 5.4 4.4"><rect x="0.5" y="1.2" width="4.6" height="2" fill="#2a2a2a" rx="0.9"/><path d="M1.2 2.2H4.2" stroke="#ccc" stroke-width="0.35"/></svg>
<svg style="left:4388.7px;top:354.6px;" width="16.2" height="16.8" viewBox="0 0 5.4 5.6"><path d="M0.2 1.2H4V5.6" fill="none" stroke="#2a2a2a" stroke-width="1.7"/><path d="M0.2 1.9H3.3V5.6" fill="none" stroke="#bbb" stroke-width="0.3"/></svg>
<svg style="left:4418.7px;top:294px;" width="16.2" height="16.2" viewBox="0 0 5.4 5.4"><path d="M1.3 5.4V3.5A2.2 2.2 0 0 1 3.5 1.3H5.4" fill="none" stroke="#2a2a2a" stroke-width="2.1"/><path d="M2.3 5.4V2.3H5.4" fill="none" stroke="#aaa" stroke-width="0.3"/></svg>
<svg style="left:4418.7px;top:325.8px;" width="16.2" height="13.2" viewBox="0 0 5.4 4.4"><rect x="0.5" y="1.2" width="4.6" height="2" fill="#2a2a2a" rx="0"/><path d="M1.2 2.2H4.2" stroke="#ccc" stroke-width="0.35"/></svg>
<svg style="left:4418.7px;top:354.6px;" width="16.2" height="16.8" viewBox="0 0 5.4 5.6"><path d="M0.2 1.2H2.6A1.4 1.4 0 0 1 4 2.6V5.6" fill="none" stroke="#2a2a2a" stroke-width="1.7"/></svg>
<div style="left:4446.6px;top:176.1px;width:4.8px;height:4.8px;background:#f8f8f8;box-shadow:inset 0 0 0 1px #e2e2e2;"></div>
<div style="left:4446.6px;top:204px;width:4.8px;height:4.8px;background:#f8f8f8;box-shadow:inset 0 0 0 1px #e2e2e2;"></div>
<div style="left:4446.6px;top:232.8px;width:4.8px;height:4.8px;background:#f8f8f8;box-shadow:inset 0 0 0 1px #e2e2e2;"></div>
<div style="left:4446.6px;top:262.5px;width:4.8px;height:4.8px;background:#f8f8f8;box-shadow:inset 0 0 0 1px #e2e2e2;"></div>
<div style="left:4446.6px;top:299.1px;width:4.8px;height:4.8px;background:#f8f8f8;box-shadow:inset 0 0 0 1px #e2e2e2;"></div>
<div style="left:4446.6px;top:329.1px;width:4.8px;height:4.8px;background:#f8f8f8;box-shadow:inset 0 0 0 1px #e2e2e2;"></div>
<div style="left:4446.6px;top:359.1px;width:4.8px;height:4.8px;background:#f8f8f8;box-shadow:inset 0 0 0 1px #e2e2e2;"></div>
<div style="left:4342.8px;top:299.1px;width:4.8px;height:4.8px;background:#f8f8f8;box-shadow:inset 0 0 0 1px #e2e2e2;"></div>
<div style="left:4046.1px;top:379.8px;width:417.6px;height:16.5px;background:#e6e6e6;"></div>
<div style="left:4250.4px;top:387.3px;width:6px;height:2.4px;background:#222;"></div>
<svg style="left:4073.7px;top:226.2px;" width="255" height="17.4" viewBox="0 0 85 5.8"><path d="M0.5 1.4H15C30 1.4 35 2.9 42.5 2.9S55 1.4 70 1.4H84.5" fill="none" stroke="#555" stroke-width="0.45"/><path d="M0.5 4.4H15C30 4.4 35 2.9 42.5 2.9S55 4.4 70 4.4H84.5" fill="none" stroke="#555" stroke-width="0.45"/></svg>
<div style="left:2531.1px;top:138.3px;width:19.8px;height:1229.7px;background:#e7e7e7;"></div>
<div style="left:2531.1px;top:138.9px;width:19.2px;height:81px;background:#e0e0e0;"></div>
<div style="left:2531.1px;top:220.8px;width:19.2px;height:142.8px;background:#bfbfbf;"></div>
<div style="left:2531.1px;top:364.5px;width:19.2px;height:150px;background:#e0e0e0;"></div>
<svg style="left:2533.5px;top:141px;" width="15" height="15" viewBox="0 0 5 5"><path d="M0.8 1.2L3.4 3.4L2.2 3.6L2.8 4.8L2.2 5L1.6 3.9L0.8 4.6Z" fill="#222"/><path d="M3.6 0.6h1v1.4" stroke="#444" stroke-width="0.4" fill="none"/></svg>
<span style="left:2547.9px;top:162px;font-size:11.10px;line-height:13.32px;color:#333;transform:rotate(90deg);transform-origin:0 0;letter-spacing:0.029px;">Советы</span>
<svg style="left:2533.8px;top:225px;" width="15" height="15" viewBox="0 0 5 5"><path d="M1 4.4L3.4 2" stroke="#333" stroke-width="0.7"/><path d="M3 1L4.4 2.4" stroke="#c04a1a" stroke-width="1.1"/><circle cx="1.6" cy="1.6" r="0.9" fill="#666"/></svg>
<span style="left:2547.9px;top:244.5px;font-size:11.10px;line-height:13.32px;color:#222;transform:rotate(90deg);transform-origin:0 0;letter-spacing:1.206px;">Свойства объекта</span>
<svg style="left:2533.8px;top:367.8px;" width="15" height="15" viewBox="0 0 5 5"><path d="M0.6 1H2.2M0.6 2.6H2.2M0.6 4.2H2.2" stroke="#333" stroke-width="0.6"/><rect x="2.8" y="2" width="1.8" height="1.6" fill="#555"/></svg>
<span style="left:2547.9px;top:385.5px;font-size:11.10px;line-height:13.32px;color:#333;transform:rotate(90deg);transform-origin:0 0;letter-spacing:0.686px;">Диспетчер объектов</span>
<svg style="left:2532.6px;top:537px;" width="16.8" height="16.8" viewBox="0 0 5.6 5.6"><circle cx="2.8" cy="2.8" r="2.2" fill="none" stroke="#c4c4c4" stroke-width="0.4"/><path d="M2.8 1.4V4.2M1.4 2.8H4.2" stroke="#c4c4c4" stroke-width="0.4"/></svg>
<div style="left:4459.8px;top:138.3px;width:19.8px;height:905.7px;background:#e7e7e7;"></div>
<div style="left:4459.8px;top:138.9px;width:19.2px;height:81px;background:#e0e0e0;"></div>
<div style="left:4459.8px;top:220.8px;width:19.2px;height:142.8px;background:#bfbfbf;"></div>
<div style="left:4459.8px;top:364.5px;width:19.2px;height:150px;background:#e0e0e0;"></div>
<svg style="left:4462.2px;top:141px;" width="15" height="15" viewBox="0 0 5 5"><path d="M0.8 1.2L3.4 3.4L2.2 3.6L2.8 4.8L2.2 5L1.6 3.9L0.8 4.6Z" fill="#222"/><path d="M3.6 0.6h1v1.4" stroke="#444" stroke-width="0.4" fill="none"/></svg>
<span style="left:4476.6px;top:162px;font-size:11.10px;line-height:13.32px;color:#333;transform:rotate(90deg);transform-origin:0 0;letter-spacing:0.029px;">Советы</span>
<svg style="left:4462.5px;top:225px;" width="15" height="15" viewBox="0 0 5 5"><path d="M1 4.4L3.4 2" stroke="#333" stroke-width="0.7"/><path d="M3 1L4.4 2.4" stroke="#c04a1a" stroke-width="1.1"/><circle cx="1.6" cy="1.6" r="0.9" fill="#666"/></svg>
<span style="left:4476.6px;top:244.5px;font-size:11.10px;line-height:13.32px;color:#222;transform:rotate(90deg);transform-origin:0 0;letter-spacing:1.206px;">Свойства объекта</span>
<svg style="left:4462.5px;top:367.8px;" width="15" height="15" viewBox="0 0 5 5"><path d="M0.6 1H2.2M0.6 2.6H2.2M0.6 4.2H2.2" stroke="#333" stroke-width="0.6"/><rect x="2.8" y="2" width="1.8" height="1.6" fill="#555"/></svg>
<span style="left:4476.6px;top:385.5px;font-size:11.10px;line-height:13.32px;color:#333;transform:rotate(90deg);transform-origin:0 0;letter-spacing:0.686px;">Диспетчер объектов</span>
<svg style="left:4461.3px;top:537px;" width="16.8" height="16.8" viewBox="0 0 5.6 5.6"><circle cx="2.8" cy="2.8" r="2.2" fill="none" stroke="#c4c4c4" stroke-width="0.4"/><path d="M2.8 1.4V4.2M1.4 2.8H4.2" stroke="#c4c4c4" stroke-width="0.4"/></svg>
<div style="left:2551.8px;top:117px;width:19.8px;height:1251px;background:#f1f1f1;"></div>
<svg style="left:2559.75px;top:131.1px;" width="3.3" height="6.6" viewBox="0 0 1.1 2.2"><path d="M0 0V2.2 L1.1 1.1 Z" fill="#222"/></svg>
<svg style="left:2554.8px;top:148.8px;" width="13.8" height="13.8" viewBox="0 0 4.6 4.6"><path d="M0.6 4L3 1.6" stroke="#bbb" stroke-width="0.6"/><path d="M2.8 0.8L3.8 1.8" stroke="#bbb" stroke-width="1"/></svg>
<svg style="left:2556.6px;top:168px;" width="10.2" height="6" viewBox="0 0 3.4 2"><path d="M0.3 1.7L1.7 0.3L3.1 1.7" fill="none" stroke="#bbb" stroke-width="0.4"/></svg>
<div style="left:2553.6px;top:181.5px;width:16.8px;height:17.1px;background:#fff;box-shadow:inset 0 0 0 1px #777;"></div>
<svg style="left:2553.6px;top:181.5px;" width="16.8" height="17.1" viewBox="0 0 5.6 5.7"><path d="M0 0L5.6 5.7 M5.6 0L0 5.7" stroke="#333" stroke-width="0.35" fill="none"/></svg>
<div style="left:2553.3px;top:198.9px;width:17.1px;height:17.55px;background:#1c1c1c;box-shadow:inset -1px -1px 0 rgba(0,0,0,0.3);"></div>
<div style="left:2553.3px;top:216.03px;width:17.1px;height:17.55px;background:#3c3c3c;box-shadow:inset -1px -1px 0 rgba(0,0,0,0.3);"></div>
<div style="left:2553.3px;top:233.16px;width:17.1px;height:17.55px;background:#565656;box-shadow:inset -1px -1px 0 rgba(0,0,0,0.3);"></div>
<div style="left:2553.3px;top:250.29px;width:17.1px;height:17.55px;background:#6c6c6c;box-shadow:inset -1px -1px 0 rgba(0,0,0,0.3);"></div>
<div style="left:2553.3px;top:267.42px;width:17.1px;height:17.55px;background:#808080;box-shadow:inset -1px -1px 0 rgba(0,0,0,0.3);"></div>
<div style="left:2553.3px;top:284.55px;width:17.1px;height:17.55px;background:#949494;box-shadow:inset -1px -1px 0 rgba(0,0,0,0.3);"></div>
<div style="left:2553.3px;top:301.68px;width:17.1px;height:17.55px;background:#a8a8a8;box-shadow:inset -1px -1px 0 rgba(0,0,0,0.3);"></div>
<div style="left:2553.3px;top:318.81px;width:17.1px;height:17.55px;background:#bcbcbc;box-shadow:inset -1px -1px 0 rgba(0,0,0,0.3);"></div>
<div style="left:2553.3px;top:335.94px;width:17.1px;height:17.55px;background:#d0d0d0;box-shadow:inset -1px -1px 0 rgba(0,0,0,0.3);"></div>
<div style="left:2553.3px;top:353.07px;width:17.1px;height:17.55px;background:#e6e6e6;box-shadow:inset 0 0 0 1px #b0b0b0;"></div>
<div style="left:2553.3px;top:370.2px;width:17.1px;height:17.55px;background:#ffffff;box-shadow:inset 0 0 0 1px #b0b0b0;"></div>
<div style="left:2553.3px;top:387.33px;width:17.1px;height:17.55px;background:#3a2e9c;box-shadow:inset -1px -1px 0 rgba(0,0,0,0.3);"></div>
<div style="left:2553.3px;top:404.46px;width:17.1px;height:17.55px;background:#18a0d4;box-shadow:inset -1px -1px 0 rgba(0,0,0,0.3);"></div>
<div style="left:2553.3px;top:421.59px;width:17.1px;height:17.55px;background:#16a05c;box-shadow:inset -1px -1px 0 rgba(0,0,0,0.3);"></div>
<div style="left:2553.3px;top:438.72px;width:17.1px;height:17.55px;background:#f8e43c;box-shadow:inset -1px -1px 0 rgba(0,0,0,0.3);"></div>
<div style="left:2553.3px;top:455.85px;width:17.1px;height:17.55px;background:#e02626;box-shadow:inset -1px -1px 0 rgba(0,0,0,0.3);"></div>
<div style="left:2553.3px;top:472.98px;width:17.1px;height:17.55px;background:#e2187c;box-shadow:inset -1px -1px 0 rgba(0,0,0,0.3);"></div>
<div style="left:2553.3px;top:490.11px;width:17.1px;height:17.55px;background:#a63e8e;box-shadow:inset -1px -1px 0 rgba(0,0,0,0.3);"></div>
<div style="left:2553.3px;top:507.24px;width:17.1px;height:17.55px;background:#f07a1a;box-shadow:inset -1px -1px 0 rgba(0,0,0,0.3);"></div>
<div style="left:2553.3px;top:524.37px;width:17.1px;height:17.55px;background:#f8b6c0;box-shadow:inset -1px -1px 0 rgba(0,0,0,0.3);"></div>
<div style="left:2553.3px;top:541.5px;width:17.1px;height:17.55px;background:#7a6a62;box-shadow:inset -1px -1px 0 rgba(0,0,0,0.3);"></div>
<div style="left:2553.3px;top:558.63px;width:17.1px;height:17.55px;background:#d8d2f2;box-shadow:inset -1px -1px 0 rgba(0,0,0,0.3);"></div>
<div style="left:2553.3px;top:575.76px;width:17.1px;height:17.55px;background:#b6a6ea;box-shadow:inset -1px -1px 0 rgba(0,0,0,0.3);"></div>
<div style="left:2553.3px;top:592.89px;width:17.1px;height:17.55px;background:#7098da;box-shadow:inset -1px -1px 0 rgba(0,0,0,0.3);"></div>
<div style="left:2553.3px;top:610.02px;width:17.1px;height:17.55px;background:#8a6ecc;box-shadow:inset -1px -1px 0 rgba(0,0,0,0.3);"></div>
<div style="left:2553.3px;top:627.15px;width:17.1px;height:17.55px;background:#9088c0;box-shadow:inset -1px -1px 0 rgba(0,0,0,0.3);"></div>
<div style="left:2553.3px;top:644.28px;width:17.1px;height:17.55px;background:#44608e;box-shadow:inset -1px -1px 0 rgba(0,0,0,0.3);"></div>
<div style="left:2553.3px;top:661.41px;width:17.1px;height:17.55px;background:#54506e;box-shadow:inset -1px -1px 0 rgba(0,0,0,0.3);"></div>
<div style="left:2553.3px;top:678.54px;width:17.1px;height:17.55px;background:#6888a8;box-shadow:inset -1px -1px 0 rgba(0,0,0,0.3);"></div>
<div style="left:2553.3px;top:695.67px;width:17.1px;height:17.55px;background:#1a8cc8;box-shadow:inset -1px -1px 0 rgba(0,0,0,0.3);"></div>
<div style="left:2553.3px;top:712.8px;width:17.1px;height:17.55px;background:#a8e0f0;box-shadow:inset -1px -1px 0 rgba(0,0,0,0.3);"></div>
<div style="left:2553.3px;top:729.93px;width:17.1px;height:17.55px;background:#b8d0e0;box-shadow:inset -1px -1px 0 rgba(0,0,0,0.3);"></div>
<div style="left:2553.3px;top:747.06px;width:17.1px;height:17.55px;background:#90a8b0;box-shadow:inset -1px -1px 0 rgba(0,0,0,0.3);"></div>
<div style="left:2553.3px;top:764.19px;width:17.1px;height:17.55px;background:#687c80;box-shadow:inset -1px -1px 0 rgba(0,0,0,0.3);"></div>
<div style="left:2553.3px;top:781.32px;width:17.1px;height:17.55px;background:#404848;box-shadow:inset -1px -1px 0 rgba(0,0,0,0.3);"></div>
<div style="left:2553.3px;top:798.45px;width:17.1px;height:17.55px;background:#487068;box-shadow:inset -1px -1px 0 rgba(0,0,0,0.3);"></div>
<div style="left:2553.3px;top:815.58px;width:17.1px;height:17.55px;background:#3c8c7c;box-shadow:inset -1px -1px 0 rgba(0,0,0,0.3);"></div>
<div style="left:2553.3px;top:832.71px;width:17.1px;height:17.55px;background:#58a098;box-shadow:inset -1px -1px 0 rgba(0,0,0,0.3);"></div>
<div style="left:2553.3px;top:849.84px;width:17.1px;height:17.55px;background:#48b09c;box-shadow:inset -1px -1px 0 rgba(0,0,0,0.3);"></div>
<div style="left:2553.3px;top:866.97px;width:17.1px;height:17.55px;background:#50a870;box-shadow:inset -1px -1px 0 rgba(0,0,0,0.3);"></div>
<div style="left:2553.3px;top:884.1px;width:17.1px;height:17.55px;background:#58d0d8;box-shadow:inset -1px -1px 0 rgba(0,0,0,0.3);"></div>
<div style="left:2553.3px;top:901.23px;width:17.1px;height:17.55px;background:#40a8b8;box-shadow:inset -1px -1px 0 rgba(0,0,0,0.3);"></div>
<div style="left:2553.3px;top:918.36px;width:17.1px;height:17.55px;background:#b0d0b8;box-shadow:inset -1px -1px 0 rgba(0,0,0,0.3);"></div>
<div style="left:2553.3px;top:935.49px;width:17.1px;height:17.55px;background:#d0f8d8;box-shadow:inset -1px -1px 0 rgba(0,0,0,0.3);"></div>
<div style="left:2553.3px;top:952.62px;width:17.1px;height:17.55px;background:#98e8b0;box-shadow:inset -1px -1px 0 rgba(0,0,0,0.3);"></div>
<div style="left:2553.3px;top:969.75px;width:17.1px;height:17.55px;background:#90a898;box-shadow:inset -1px -1px 0 rgba(0,0,0,0.3);"></div>
<div style="left:2553.3px;top:986.88px;width:17.1px;height:17.55px;background:#8c9c70;box-shadow:inset -1px -1px 0 rgba(0,0,0,0.3);"></div>
<div style="left:2553.3px;top:1004.01px;width:17.1px;height:17.55px;background:#c0c870;box-shadow:inset -1px -1px 0 rgba(0,0,0,0.3);"></div>
<div style="left:2553.3px;top:1021.14px;width:17.1px;height:17.55px;background:#b8c890;box-shadow:inset -1px -1px 0 rgba(0,0,0,0.3);"></div>
<div style="left:2553.3px;top:1038.27px;width:17.1px;height:17.55px;background:#a8d020;box-shadow:inset -1px -1px 0 rgba(0,0,0,0.3);"></div>
<div style="left:2553.3px;top:1055.4px;width:17.1px;height:17.55px;background:#e0f080;box-shadow:inset -1px -1px 0 rgba(0,0,0,0.3);"></div>
<div style="left:2553.3px;top:1072.53px;width:17.1px;height:17.55px;background:#484840;box-shadow:inset -1px -1px 0 rgba(0,0,0,0.3);"></div>
<div style="left:2553.3px;top:1089.66px;width:17.1px;height:17.55px;background:#808070;box-shadow:inset -1px -1px 0 rgba(0,0,0,0.3);"></div>
<div style="left:2553.3px;top:1106.79px;width:17.1px;height:17.55px;background:#b0b098;box-shadow:inset -1px -1px 0 rgba(0,0,0,0.3);"></div>
<div style="left:2553.3px;top:1123.92px;width:17.1px;height:17.55px;background:#b8b078;box-shadow:inset -1px -1px 0 rgba(0,0,0,0.3);"></div>
<div style="left:2553.3px;top:1141.05px;width:17.1px;height:17.55px;background:#d8c868;box-shadow:inset -1px -1px 0 rgba(0,0,0,0.3);"></div>
<div style="left:2553.3px;top:1158.18px;width:17.1px;height:17.55px;background:#f0e488;box-shadow:inset -1px -1px 0 rgba(0,0,0,0.3);"></div>
<div style="left:2553.3px;top:1175.31px;width:17.1px;height:17.55px;background:#f8f4b8;box-shadow:inset -1px -1px 0 rgba(0,0,0,0.3);"></div>
<div style="left:2553.3px;top:1192.44px;width:17.1px;height:17.55px;background:#f8f8e0;box-shadow:inset -1px -1px 0 rgba(0,0,0,0.3);"></div>
<div style="left:2553.3px;top:1209.57px;width:17.1px;height:17.55px;background:#a89078;box-shadow:inset -1px -1px 0 rgba(0,0,0,0.3);"></div>
<div style="left:2553.3px;top:1226.7px;width:17.1px;height:17.55px;background:#d09060;box-shadow:inset -1px -1px 0 rgba(0,0,0,0.3);"></div>
<div style="left:2553.3px;top:1243.83px;width:17.1px;height:17.55px;background:#d8b068;box-shadow:inset -1px -1px 0 rgba(0,0,0,0.3);"></div>
<div style="left:2553.3px;top:1260.96px;width:17.1px;height:17.55px;background:#f88040;box-shadow:inset -1px -1px 0 rgba(0,0,0,0.3);"></div>
<div style="left:2553.3px;top:1278.09px;width:17.1px;height:17.55px;background:#f8a840;box-shadow:inset -1px -1px 0 rgba(0,0,0,0.3);"></div>
<div style="left:2553.3px;top:1295.22px;width:17.1px;height:17.55px;background:#f8a878;box-shadow:inset -1px -1px 0 rgba(0,0,0,0.3);"></div>
<div style="left:2553.3px;top:1312.35px;width:17.1px;height:17.55px;background:#f8c020;box-shadow:inset -1px -1px 0 rgba(0,0,0,0.3);"></div>
<svg style="left:2556.6px;top:1335.48px;" width="10.2" height="6" viewBox="0 0 3.4 2"><path d="M0.3 0.3L1.7 1.7L3.1 0.3" fill="none" stroke="#999" stroke-width="0.4"/></svg>
<svg style="left:2556.6px;top:1351.68px;" width="10.2" height="7.2" viewBox="0 0 3.4 2.4"><path d="M0.3 0.3L1.5 1.2L0.3 2.1M1.9 0.3L3.1 1.2L1.9 2.1" fill="none" stroke="#bbb" stroke-width="0.4"/></svg>
<div style="left:4480.8px;top:117px;width:19.8px;height:927px;background:#f1f1f1;"></div>
<svg style="left:4488.75px;top:131.1px;" width="3.3" height="6.6" viewBox="0 0 1.1 2.2"><path d="M0 0V2.2 L1.1 1.1 Z" fill="#222"/></svg>
<svg style="left:4483.8px;top:148.8px;" width="13.8" height="13.8" viewBox="0 0 4.6 4.6"><path d="M0.6 4L3 1.6" stroke="#bbb" stroke-width="0.6"/><path d="M2.8 0.8L3.8 1.8" stroke="#bbb" stroke-width="1"/></svg>
<svg style="left:4485.6px;top:168px;" width="10.2" height="6" viewBox="0 0 3.4 2"><path d="M0.3 1.7L1.7 0.3L3.1 1.7" fill="none" stroke="#bbb" stroke-width="0.4"/></svg>
<div style="left:4482.6px;top:181.5px;width:16.8px;height:17.1px;background:#fff;box-shadow:inset 0 0 0 1px #777;"></div>
<svg style="left:4482.6px;top:181.5px;" width="16.8" height="17.1" viewBox="0 0 5.6 5.7"><path d="M0 0L5.6 5.7 M5.6 0L0 5.7" stroke="#333" stroke-width="0.35" fill="none"/></svg>
<div style="left:4482.3px;top:198.9px;width:17.1px;height:17.55px;background:#1c1c1c;box-shadow:inset -1px -1px 0 rgba(0,0,0,0.3);"></div>
<div style="left:4482.3px;top:216.03px;width:17.1px;height:17.55px;background:#3c3c3c;box-shadow:inset -1px -1px 0 rgba(0,0,0,0.3);"></div>
<div style="left:4482.3px;top:233.16px;width:17.1px;height:17.55px;background:#565656;box-shadow:inset -1px -1px 0 rgba(0,0,0,0.3);"></div>
<div style="left:4482.3px;top:250.29px;width:17.1px;height:17.55px;background:#6c6c6c;box-shadow:inset -1px -1px 0 rgba(0,0,0,0.3);"></div>
<div style="left:4482.3px;top:267.42px;width:17.1px;height:17.55px;background:#808080;box-shadow:inset -1px -1px 0 rgba(0,0,0,0.3);"></div>
<div style="left:4482.3px;top:284.55px;width:17.1px;height:17.55px;background:#949494;box-shadow:inset -1px -1px 0 rgba(0,0,0,0.3);"></div>
<div style="left:4482.3px;top:301.68px;width:17.1px;height:17.55px;background:#a8a8a8;box-shadow:inset -1px -1px 0 rgba(0,0,0,0.3);"></div>
<div style="left:4482.3px;top:318.81px;width:17.1px;height:17.55px;background:#bcbcbc;box-shadow:inset -1px -1px 0 rgba(0,0,0,0.3);"></div>
<div style="left:4482.3px;top:335.94px;width:17.1px;height:17.55px;background:#d0d0d0;box-shadow:inset -1px -1px 0 rgba(0,0,0,0.3);"></div>
<div style="left:4482.3px;top:353.07px;width:17.1px;height:17.55px;background:#e6e6e6;box-shadow:inset 0 0 0 1px #b0b0b0;"></div>
<div style="left:4482.3px;top:370.2px;width:17.1px;height:17.55px;background:#ffffff;box-shadow:inset 0 0 0 1px #b0b0b0;"></div>
<div style="left:4482.3px;top:387.33px;width:17.1px;height:17.55px;background:#3a2e9c;box-shadow:inset -1px -1px 0 rgba(0,0,0,0.3);"></div>
<div style="left:4482.3px;top:404.46px;width:17.1px;height:17.55px;background:#18a0d4;box-shadow:inset -1px -1px 0 rgba(0,0,0,0.3);"></div>
<div style="left:4482.3px;top:421.59px;width:17.1px;height:17.55px;background:#16a05c;box-shadow:inset -1px -1px 0 rgba(0,0,0,0.3);"></div>
<div style="left:4482.3px;top:438.72px;width:17.1px;height:17.55px;background:#f8e43c;box-shadow:inset -1px -1px 0 rgba(0,0,0,0.3);"></div>
<div style="left:4482.3px;top:455.85px;width:17.1px;height:17.55px;background:#e02626;box-shadow:inset -1px -1px 0 rgba(0,0,0,0.3);"></div>
<div style="left:4482.3px;top:472.98px;width:17.1px;height:17.55px;background:#e2187c;box-shadow:inset -1px -1px 0 rgba(0,0,0,0.3);"></div>
<div style="left:4482.3px;top:490.11px;width:17.1px;height:17.55px;background:#a63e8e;box-shadow:inset -1px -1px 0 rgba(0,0,0,0.3);"></div>
<div style="left:4482.3px;top:507.24px;width:17.1px;height:17.55px;background:#f07a1a;box-shadow:inset -1px -1px 0 rgba(0,0,0,0.3);"></div>
<div style="left:4482.3px;top:524.37px;width:17.1px;height:17.55px;background:#f8b6c0;box-shadow:inset -1px -1px 0 rgba(0,0,0,0.3);"></div>
<div style="left:4482.3px;top:541.5px;width:17.1px;height:17.55px;background:#7a6a62;box-shadow:inset -1px -1px 0 rgba(0,0,0,0.3);"></div>
<div style="left:4482.3px;top:558.63px;width:17.1px;height:17.55px;background:#d8d2f2;box-shadow:inset -1px -1px 0 rgba(0,0,0,0.3);"></div>
<div style="left:4482.3px;top:575.76px;width:17.1px;height:17.55px;background:#b6a6ea;box-shadow:inset -1px -1px 0 rgba(0,0,0,0.3);"></div>
<div style="left:4482.3px;top:592.89px;width:17.1px;height:17.55px;background:#7098da;box-shadow:inset -1px -1px 0 rgba(0,0,0,0.3);"></div>
<div style="left:4482.3px;top:610.02px;width:17.1px;height:17.55px;background:#8a6ecc;box-shadow:inset -1px -1px 0 rgba(0,0,0,0.3);"></div>
<div style="left:4482.3px;top:627.15px;width:17.1px;height:17.55px;background:#9088c0;box-shadow:inset -1px -1px 0 rgba(0,0,0,0.3);"></div>
<div style="left:4482.3px;top:644.28px;width:17.1px;height:17.55px;background:#44608e;box-shadow:inset -1px -1px 0 rgba(0,0,0,0.3);"></div>
<div style="left:4482.3px;top:661.41px;width:17.1px;height:17.55px;background:#54506e;box-shadow:inset -1px -1px 0 rgba(0,0,0,0.3);"></div>
<div style="left:4482.3px;top:678.54px;width:17.1px;height:17.55px;background:#6888a8;box-shadow:inset -1px -1px 0 rgba(0,0,0,0.3);"></div>
<div style="left:4482.3px;top:695.67px;width:17.1px;height:17.55px;background:#1a8cc8;box-shadow:inset -1px -1px 0 rgba(0,0,0,0.3);"></div>
<div style="left:4482.3px;top:712.8px;width:17.1px;height:17.55px;background:#a8e0f0;box-shadow:inset -1px -1px 0 rgba(0,0,0,0.3);"></div>
<div style="left:4482.3px;top:729.93px;width:17.1px;height:17.55px;background:#b8d0e0;box-shadow:inset -1px -1px 0 rgba(0,0,0,0.3);"></div>
<div style="left:4482.3px;top:747.06px;width:17.1px;height:17.55px;background:#90a8b0;box-shadow:inset -1px -1px 0 rgba(0,0,0,0.3);"></div>
<div style="left:4482.3px;top:764.19px;width:17.1px;height:17.55px;background:#687c80;box-shadow:inset -1px -1px 0 rgba(0,0,0,0.3);"></div>
<div style="left:4482.3px;top:781.32px;width:17.1px;height:17.55px;background:#404848;box-shadow:inset -1px -1px 0 rgba(0,0,0,0.3);"></div>
<div style="left:4482.3px;top:798.45px;width:17.1px;height:17.55px;background:#487068;box-shadow:inset -1px -1px 0 rgba(0,0,0,0.3);"></div>
<div style="left:4482.3px;top:815.58px;width:17.1px;height:17.55px;background:#3c8c7c;box-shadow:inset -1px -1px 0 rgba(0,0,0,0.3);"></div>
<div style="left:4482.3px;top:832.71px;width:17.1px;height:17.55px;background:#58a098;box-shadow:inset -1px -1px 0 rgba(0,0,0,0.3);"></div>
<div style="left:4482.3px;top:849.84px;width:17.1px;height:17.55px;background:#48b09c;box-shadow:inset -1px -1px 0 rgba(0,0,0,0.3);"></div>
<div style="left:4482.3px;top:866.97px;width:17.1px;height:17.55px;background:#50a870;box-shadow:inset -1px -1px 0 rgba(0,0,0,0.3);"></div>
<div style="left:4482.3px;top:884.1px;width:17.1px;height:17.55px;background:#58d0d8;box-shadow:inset -1px -1px 0 rgba(0,0,0,0.3);"></div>
<div style="left:4482.3px;top:901.23px;width:17.1px;height:17.55px;background:#40a8b8;box-shadow:inset -1px -1px 0 rgba(0,0,0,0.3);"></div>
<div style="left:4482.3px;top:918.36px;width:17.1px;height:17.55px;background:#b0d0b8;box-shadow:inset -1px -1px 0 rgba(0,0,0,0.3);"></div>
<div style="left:4482.3px;top:935.49px;width:17.1px;height:17.55px;background:#d0f8d8;box-shadow:inset -1px -1px 0 rgba(0,0,0,0.3);"></div>
<div style="left:4482.3px;top:952.62px;width:17.1px;height:17.55px;background:#98e8b0;box-shadow:inset -1px -1px 0 rgba(0,0,0,0.3);"></div>
<div style="left:4482.3px;top:969.75px;width:17.1px;height:17.55px;background:#90a898;box-shadow:inset -1px -1px 0 rgba(0,0,0,0.3);"></div>
<div style="left:4482.3px;top:986.88px;width:17.1px;height:17.55px;background:#8c9c70;box-shadow:inset -1px -1px 0 rgba(0,0,0,0.3);"></div>
<svg style="left:4485.6px;top:1010.01px;" width="10.2" height="6" viewBox="0 0 3.4 2"><path d="M0.3 0.3L1.7 1.7L3.1 0.3" fill="none" stroke="#999" stroke-width="0.4"/></svg>
<svg style="left:4485.6px;top:1026.21px;" width="10.2" height="7.2" viewBox="0 0 3.4 2.4"><path d="M0.3 0.3L1.5 1.2L0.3 2.1M1.9 0.3L3.1 1.2L1.9 2.1" fill="none" stroke="#bbb" stroke-width="0.4"/></svg>
<div style="left:33.9px;top:1329.3px;width:2080.2px;height:18.9px;background:#f1f1f1;"></div>
<div style="left:49.8px;top:1329.3px;width:1034.7px;height:1.02px;background:#9a9a9a;"></div>
<div style="left:1084.5px;top:1329.3px;width:1.02px;height:16.8px;background:#b0b0b0;"></div>
<div style="left:49.8px;top:1346.1px;width:1034.7px;height:1.02px;background:#d8d8d8;"></div>
<svg style="left:53.4px;top:1331.7px;" width="13.2" height="13.8" viewBox="0 0 4.4 4.6"><rect x="0.8" y="0.6" width="2.6" height="3.4" fill="#fff" stroke="#999" stroke-width="0.35"/><path d="M2.4 3.4h1.6M3.2 2.6v1.6" stroke="#777" stroke-width="0.35"/></svg>
<svg style="left:176.4px;top:1331.7px;" width="13.2" height="13.8" viewBox="0 0 4.4 4.6"><rect x="0.8" y="0.6" width="2.6" height="3.4" fill="#fff" stroke="#999" stroke-width="0.35"/><path d="M2.4 3.4h1.6M3.2 2.6v1.6" stroke="#777" stroke-width="0.35"/></svg>
<svg style="left:71.4px;top:1334.7px;" width="9" height="7.8" viewBox="0 0 3 2.6"><path d="M0.4 0V2.6" stroke="#999" stroke-width="0.4"/><path d="M2.6 0L0.9 1.3L2.6 2.6Z" fill="#999"/></svg>
<svg style="left:90px;top:1335px;" width="3.6" height="7.2" viewBox="0 0 1.2 2.4"><path d="M1.2 0V2.4 L0 1.2 Z" fill="#999"/></svg>
<span style="left:102.3px;top:1332.42px;font-size:10.80px;line-height:12.96px;color:#333;letter-spacing:-0.083px;">1 из 1</span>
<svg style="left:145.5px;top:1335px;" width="3.6" height="7.2" viewBox="0 0 1.2 2.4"><path d="M0 0V2.4 L1.2 1.2 Z" fill="#999"/></svg>
<svg style="left:158.7px;top:1334.7px;" width="9" height="7.8" viewBox="0 0 3 2.6"><path d="M2.6 0V2.6" stroke="#999" stroke-width="0.4"/><path d="M0.4 0L2.1 1.3L0.4 2.6Z" fill="#999"/></svg>
<svg style="left:197.7px;top:1328.7px;" width="90" height="18.6" viewBox="0 0 30 6.2"><path d="M0 0.3L1.6 5.8H27.2L29.2 0.3" fill="#fff" stroke="#888" stroke-width="0.35"/></svg>
<div style="left:199.5px;top:1329px;width:84.6px;height:1.8px;background:#fff;"></div>
<span style="left:209.7px;top:1331.94px;font-size:11.10px;line-height:13.32px;color:#222;letter-spacing:0.194px;">Страница 1</span>
<svg style="left:1090.5px;top:1335px;" width="3.6" height="7.2" viewBox="0 0 1.2 2.4"><path d="M1.2 0V2.4 L0 1.2 Z" fill="#333"/></svg>
<div style="left:1102.5px;top:1331.1px;width:976.5px;height:15px;background:#cccccc;"></div>
<svg style="left:2086.2px;top:1335px;" width="3.6" height="7.2" viewBox="0 0 1.2 2.4"><path d="M0 0V2.4 L1.2 1.2 Z" fill="#333"/></svg>
<div style="left:2097.6px;top:1329.9px;width:16.2px;height:17.7px;background:#fff;box-shadow:inset 0 0 0 1px #d8d8d8;"></div>
<svg style="left:2099.4px;top:1332px;" width="13.2" height="13.2" viewBox="0 0 4.4 4.4"><circle cx="1.8" cy="1.8" r="1.2" fill="none" stroke="#333" stroke-width="0.45"/><path d="M2.7 2.7L4 4" stroke="#333" stroke-width="0.6"/></svg>
<div style="left:2605.2px;top:1008.6px;width:1437px;height:18.9px;background:#f1f1f1;"></div>
<div style="left:2621.1px;top:1008.6px;width:711.9px;height:1.02px;background:#9a9a9a;"></div>
<div style="left:3333px;top:1008.6px;width:1.02px;height:16.8px;background:#b0b0b0;"></div>
<div style="left:2621.1px;top:1025.4px;width:711.9px;height:1.02px;background:#d8d8d8;"></div>
<svg style="left:2624.7px;top:1011px;" width="13.2" height="13.8" viewBox="0 0 4.4 4.6"><rect x="0.8" y="0.6" width="2.6" height="3.4" fill="#fff" stroke="#999" stroke-width="0.35"/><path d="M2.4 3.4h1.6M3.2 2.6v1.6" stroke="#777" stroke-width="0.35"/></svg>
<svg style="left:2747.7px;top:1011px;" width="13.2" height="13.8" viewBox="0 0 4.4 4.6"><rect x="0.8" y="0.6" width="2.6" height="3.4" fill="#fff" stroke="#999" stroke-width="0.35"/><path d="M2.4 3.4h1.6M3.2 2.6v1.6" stroke="#777" stroke-width="0.35"/></svg>
<svg style="left:2642.7px;top:1014px;" width="9" height="7.8" viewBox="0 0 3 2.6"><path d="M0.4 0V2.6" stroke="#999" stroke-width="0.4"/><path d="M2.6 0L0.9 1.3L2.6 2.6Z" fill="#999"/></svg>
<svg style="left:2661.3px;top:1014.3px;" width="3.6" height="7.2" viewBox="0 0 1.2 2.4"><path d="M1.2 0V2.4 L0 1.2 Z" fill="#999"/></svg>
<span style="left:2673.6px;top:1011.72px;font-size:10.80px;line-height:12.96px;color:#333;letter-spacing:-0.083px;">1 из 1</span>
<svg style="left:2716.8px;top:1014.3px;" width="3.6" height="7.2" viewBox="0 0 1.2 2.4"><path d="M0 0V2.4 L1.2 1.2 Z" fill="#999"/></svg>
<svg style="left:2730px;top:1014px;" width="9" height="7.8" viewBox="0 0 3 2.6"><path d="M2.6 0V2.6" stroke="#999" stroke-width="0.4"/><path d="M0.4 0L2.1 1.3L0.4 2.6Z" fill="#999"/></svg>
<svg style="left:2769px;top:1008px;" width="90" height="18.6" viewBox="0 0 30 6.2"><path d="M0 0.3L1.6 5.8H27.2L29.2 0.3" fill="#fff" stroke="#888" stroke-width="0.35"/></svg>
<div style="left:2770.8px;top:1008.3px;width:84.6px;height:1.8px;background:#fff;"></div>
<span style="left:2781px;top:1011.24px;font-size:11.10px;line-height:13.32px;color:#222;letter-spacing:0.194px;">Страница 1</span>
<svg style="left:3339px;top:1014.3px;" width="3.6" height="7.2" viewBox="0 0 1.2 2.4"><path d="M1.2 0V2.4 L0 1.2 Z" fill="#333"/></svg>
<div style="left:3352.5px;top:1010.4px;width:655.5px;height:15px;background:#cccccc;"></div>
<svg style="left:4015.2px;top:1014.3px;" width="3.6" height="7.2" viewBox="0 0 1.2 2.4"><path d="M0 0V2.4 L1.2 1.2 Z" fill="#333"/></svg>
<div style="left:4025.7px;top:1009.2px;width:16.2px;height:17.7px;background:#fff;box-shadow:inset 0 0 0 1px #d8d8d8;"></div>
<svg style="left:4027.5px;top:1011.3px;" width="13.2" height="13.2" viewBox="0 0 4.4 4.4"><circle cx="1.8" cy="1.8" r="1.2" fill="none" stroke="#333" stroke-width="0.45"/><path d="M2.7 2.7L4 4" stroke="#333" stroke-width="0.6"/></svg>
<div style="left:33.9px;top:1348.2px;width:2080.2px;height:20.4px;background:#f4f4f4;"></div>
<svg style="left:46.5px;top:1354.2px;" width="4.2" height="8.4" viewBox="0 0 1.4 2.8"><path d="M0 0V2.8 L1.4 1.4 Z" fill="#111"/></svg>
<svg style="left:60.6px;top:1350.9px;" width="15" height="15" viewBox="0 0 5 5"><path d="M0.8 4.4L3 2.2" stroke="#333" stroke-width="0.8"/><path d="M2.8 1.2L4 2.4M3.4 1.8L4.4 0.8" stroke="#444" stroke-width="1.1"/></svg>
<svg style="left:84.3px;top:1354.5px;" width="6" height="7.8" viewBox="0 0 2 2.6"><path d="M1.7 0.2L0.4 1.3L1.7 2.4" fill="none" stroke="#c0c0c0" stroke-width="0.4"/></svg>
<div style="left:96.6px;top:1349.7px;width:17.7px;height:18px;background:#fff;box-shadow:inset 0 0 0 1px #666;"></div>
<svg style="left:96.6px;top:1349.7px;" width="17.7" height="18" viewBox="0 0 5.9 6"><path d="M0 0L5.9 6 M5.9 0L0 6" stroke="#333" stroke-width="0.35" fill="none"/></svg>
<span style="left:862.5px;top:1352.22px;font-size:10.80px;line-height:12.96px;color:#bcbcbc;font-style:italic;letter-spacing:0.510px;-webkit-text-stroke:0;">Перетащите сюда цвета (или объекты), чтобы сохранить их вместе с документом</span>
<svg style="left:2077.5px;top:1354.5px;" width="6" height="7.8" viewBox="0 0 2 2.6"><path d="M0.3 0.2L1.6 1.3L0.3 2.4" fill="none" stroke="#c0c0c0" stroke-width="0.4"/></svg>
<svg style="left:2095.5px;top:1354.5px;" width="6" height="7.8" viewBox="0 0 2 2.6"><path d="M0.3 0.2L1.6 1.3L0.3 2.4" fill="none" stroke="#c0c0c0" stroke-width="0.4"/></svg>
<div style="left:2605.2px;top:1026.6px;width:1437px;height:20.4px;background:#f4f4f4;"></div>
<svg style="left:2617.8px;top:1032.6px;" width="4.2" height="8.4" viewBox="0 0 1.4 2.8"><path d="M0 0V2.8 L1.4 1.4 Z" fill="#111"/></svg>
<svg style="left:2631.9px;top:1029.3px;" width="15" height="15" viewBox="0 0 5 5"><path d="M0.8 4.4L3 2.2" stroke="#333" stroke-width="0.8"/><path d="M2.8 1.2L4 2.4M3.4 1.8L4.4 0.8" stroke="#444" stroke-width="1.1"/></svg>
<svg style="left:2655.6px;top:1032.9px;" width="6" height="7.8" viewBox="0 0 2 2.6"><path d="M1.7 0.2L0.4 1.3L1.7 2.4" fill="none" stroke="#c0c0c0" stroke-width="0.4"/></svg>
<div style="left:2667.9px;top:1028.1px;width:17.7px;height:18px;background:#fff;box-shadow:inset 0 0 0 1px #666;"></div>
<svg style="left:2667.9px;top:1028.1px;" width="17.7" height="18" viewBox="0 0 5.9 6"><path d="M0 0L5.9 6 M5.9 0L0 6" stroke="#333" stroke-width="0.35" fill="none"/></svg>
<div style="left:2685.6px;top:1028.4px;width:17.4px;height:17.4px;background:#1a1a1a;"></div>
<div style="left:2702.82px;top:1028.4px;width:17.4px;height:17.4px;background:#f0d080;"></div>
<div style="left:2720.04px;top:1028.4px;width:17.4px;height:17.4px;background:#ffffff;"></div>
<div style="left:2737.26px;top:1028.4px;width:17.4px;height:17.4px;background:#e02020;"></div>
<div style="left:2754.48px;top:1028.4px;width:17.4px;height:17.4px;background:#1a1a1a;"></div>
<div style="left:2667.3px;top:1027.5px;width:104.7px;height:19.2px;box-shadow:inset 0 0 0 1px #8a8a8a;"></div>
<svg style="left:4005.6px;top:1032.9px;" width="6" height="7.8" viewBox="0 0 2 2.6"><path d="M0.3 0.2L1.6 1.3L0.3 2.4" fill="none" stroke="#c0c0c0" stroke-width="0.4"/></svg>
<svg style="left:4023.6px;top:1032.9px;" width="6" height="7.8" viewBox="0 0 2 2.6"><path d="M0.3 0.2L1.6 1.3L0.3 2.4" fill="none" stroke="#c0c0c0" stroke-width="0.4"/></svg>
<div style="left:0px;top:1368.6px;width:2571px;height:37.5px;background:#f7f7f7;"></div>
<div style="left:0px;top:1368.6px;width:2571px;height:1.02px;background:#e6e6e6;"></div>
<span style="left:6px;top:1382.01px;font-size:11.40px;line-height:13.68px;color:#2a2a2a;letter-spacing:-0.190px;">( 3 771,628; 948,874 )</span>
<svg style="left:130.95px;top:1384.95px;" width="3.9" height="7.8" viewBox="0 0 1.3 2.6"><path d="M0 0V2.6 L1.3 1.3 Z" fill="#333"/></svg>
<div style="left:2571px;top:1045.8px;width:1929px;height:38.4px;background:#f7f7f7;"></div>
<div style="left:2571px;top:1045.8px;width:1929px;height:1.02px;background:#e6e6e6;"></div>
<span style="left:2577px;top:1061.16px;font-size:11.40px;line-height:13.68px;color:#2a2a2a;letter-spacing:-0.326px;">( -1 842,328; 553,82... )</span>
<svg style="left:2701.95px;top:1064.1px;" width="3.9" height="7.8" viewBox="0 0 1.3 2.6"><path d="M0 0V2.6 L1.3 1.3 Z" fill="#333"/></svg>
<span style="left:2736px;top:1061.16px;font-size:11.40px;line-height:13.68px;color:#333;letter-spacing:0.129px;">Кривая PowerClip вкл. Layer 1</span>
<svg style="left:2112.3px;top:1378.5px;" width="16.8" height="18" viewBox="0 0 5.6 6"><path d="M0.6 0.6H5V3.6L2.8 5.6L0.6 3.6Z" fill="#3a78c0"/><path d="M0.6 0.6H5V2.4H0.6Z" fill="#d83a3a"/></svg>
<svg style="left:2150.4px;top:1378.5px;" width="18" height="18" viewBox="0 0 6 6"><path d="M1 3L3 1L5 3L3 5Z" fill="#fff" stroke="#333" stroke-width="0.5"/><path d="M1.4 3.2H4.6L3 4.8Z" fill="#c04a1a"/><circle cx="5" cy="4.8" r="0.8" fill="#e02020"/></svg>
<div style="left:2164.5px;top:1376.7px;width:22.2px;height:21px;background:#fff;box-shadow:inset 0 0 0 1px #777;"></div>
<svg style="left:2164.5px;top:1376.7px;" width="22.2" height="21" viewBox="0 0 7.4 7"><path d="M0 0L7.4 7 M7.4 0L0 7" stroke="#333" stroke-width="0.35" fill="none"/></svg>
<span style="left:2190.9px;top:1380.66px;font-size:11.40px;line-height:13.68px;color:#333;letter-spacing:0.328px;">Нет</span>
<div style="left:2343.99px;top:1374px;width:1.02px;height:27px;background:#d8d8d8;"></div>
<svg style="left:2359.5px;top:1377.6px;" width="9.6" height="20.4" viewBox="0 0 4 7"><path d="M2 0.4L3 2.6V5.6H1V2.6Z" fill="#fff" stroke="#555" stroke-width="0.45"/><rect x="1" y="5.6" width="2" height="1" fill="#555"/></svg>
<div style="left:2373px;top:1377px;width:21.6px;height:21.6px;background:#1a1a1a;"></div>
<span style="left:2400.9px;top:1380.66px;font-size:11.40px;line-height:13.68px;color:#333;letter-spacing:-0.130px;">C:0 M:0 Y:0 K:100  0,200 мм</span>
<svg style="left:4042.5px;top:1056.6px;" width="16.8" height="18" viewBox="0 0 5.6 6"><path d="M0.6 0.6H5V3.6L2.8 5.6L0.6 3.6Z" fill="#3a78c0"/><path d="M0.6 0.6H5V2.4H0.6Z" fill="#d83a3a"/></svg>
<svg style="left:4072.5px;top:1056px;" width="18" height="18" viewBox="0 0 6 6"><path d="M1 3L3 1L5 3L3 5Z" fill="#fff" stroke="#333" stroke-width="0.5"/><path d="M1.4 3.2H4.6L3 4.8Z" fill="#c04a1a"/><circle cx="5" cy="4.8" r="0.8" fill="#e02020"/></svg>
<div style="left:4093.8px;top:1054.5px;width:21.9px;height:21.6px;background:linear-gradient(120deg,#c8923a 0%,#e8c47a 45%,#f0d89a 60%,#c89848 100%);"></div>
<span style="left:4119.9px;top:1059.96px;font-size:11.40px;line-height:13.68px;color:#333;letter-spacing:0.073px;">Фонтанная</span>
<div style="left:4272.99px;top:1051.5px;width:1.02px;height:28.5px;background:#d8d8d8;"></div>
<svg style="left:4288.8px;top:1055.4px;" width="9.6" height="20.4" viewBox="0 0 4 7"><path d="M2 0.4L3 2.6V5.6H1V2.6Z" fill="#fff" stroke="#555" stroke-width="0.45"/><rect x="1" y="5.6" width="2" height="1" fill="#555"/></svg>
<div style="left:4302px;top:1054.5px;width:21.6px;height:21.6px;background:#fff;box-shadow:inset 0 0 0 1px #777;"></div>
<svg style="left:4302px;top:1054.5px;" width="21.6" height="21.6" viewBox="0 0 7.2 7.2"><path d="M0 0L7.2 7.2 M7.2 0L0 7.2" stroke="#333" stroke-width="0.35" fill="none"/></svg>
<span style="left:4327.8px;top:1059.96px;font-size:11.40px;line-height:13.68px;color:#333;letter-spacing:0.328px;">Нет</span>
<div style="left:2459.1px;top:3px;width:12px;height:15px;background:#e6e6e6;box-shadow:inset 0 0 0 1px #c8c8c8;"></div>
<svg style="left:2461.5px;top:5.4px;" width="7.2" height="10.8" viewBox="0 0 2.4 3.6"><circle cx="1.2" cy="1" r="0.6" fill="#888"/><path d="M0.2 3.2A1 1 0 0 1 2.2 3.2Z" fill="#888"/></svg>
<div style="left:2493.3px;top:12.3px;width:11.4px;height:2.4px;background:#222;"></div>
<svg style="left:2523.9px;top:3.6px;" width="13.8" height="13.8" viewBox="0 0 4.6 4.6"><rect x="0.4" y="1.4" width="2.8" height="2.8" fill="#fff" stroke="#777" stroke-width="0.4"/><path d="M1.4 1.4V0.4H4.2V3.2H3.2" fill="none" stroke="#777" stroke-width="0.4"/></svg>
<svg style="left:2553.6px;top:5.1px;" width="10.8" height="10.8" viewBox="0 0 3.6 3.6"><path d="M0.2 0.2L3.4 3.4M3.4 0.2L0.2 3.4" stroke="#555" stroke-width="0.45"/></svg>
<div style="left:4386px;top:3px;width:12px;height:15px;background:#e6e6e6;box-shadow:inset 0 0 0 1px #c8c8c8;"></div>
<svg style="left:4388.4px;top:5.4px;" width="7.2" height="10.8" viewBox="0 0 2.4 3.6"><circle cx="1.2" cy="1" r="0.6" fill="#888"/><path d="M0.2 3.2A1 1 0 0 1 2.2 3.2Z" fill="#888"/></svg>
<div style="left:4422.3px;top:12.3px;width:11.4px;height:2.4px;background:#222;"></div>
<svg style="left:4451.4px;top:3.6px;" width="13.8" height="13.8" viewBox="0 0 4.6 4.6"><rect x="0.4" y="1.4" width="2.8" height="2.8" fill="#fff" stroke="#777" stroke-width="0.4"/><path d="M1.4 1.4V0.4H4.2V3.2H3.2" fill="none" stroke="#777" stroke-width="0.4"/></svg>
<svg style="left:4481.1px;top:5.1px;" width="10.8" height="10.8" viewBox="0 0 3.6 3.6"><path d="M0.2 0.2L3.4 3.4M3.4 0.2L0.2 3.4" stroke="#555" stroke-width="0.45"/></svg>
<div style="left:0px;top:1405.8px;width:2571px;height:40.2px;background:#05050a;"></div>
<div style="left:443.4px;top:1405.8px;width:49.2px;height:40.2px;background:#2c2c30;"></div>
<svg style="left:12.6px;top:1413px;" width="24" height="24" viewBox="0 0 10 10"><path d="M1.2 2.4L4.5 1.9V4.8H1.2ZM5 1.8L8.8 1.2V4.8H5ZM1.2 5.3H4.5V8.2L1.2 7.7ZM5 5.3H8.8V8.9L5 8.3Z" fill="#fff"/></svg>
<svg style="left:60.9px;top:1413px;" width="24" height="24" viewBox="0 0 10 10"><circle cx="5.8" cy="4" r="2.4" fill="none" stroke="#e8e8e8" stroke-width="0.6"/><path d="M4 5.8L1.6 8.4" stroke="#e8e8e8" stroke-width="0.7"/></svg>
<svg style="left:108.6px;top:1413px;" width="24" height="24" viewBox="0 0 10 10"><rect x="1.8" y="3" width="6.4" height="4" fill="none" stroke="#e0e0e0" stroke-width="0.55"/><path d="M0.7 3.8V6.2M9.3 3.8V6.2" stroke="#e0e0e0" stroke-width="0.5"/></svg>
<svg style="left:159px;top:1413px;" width="24" height="24" viewBox="0 0 10 10"><path d="M1.6 5.6C1.6 2.6 3.4 1.4 5.2 1.4C7.4 1.4 8.6 3 8.6 5.2H3.8C3.8 6.8 5.6 7.6 8 6.6V8.2C4.6 9.4 1.6 8.4 1.6 5.6ZM3.8 4H6.4C6.4 2.6 4 2.4 3.8 4Z" fill="#1e90e8"/></svg>
<svg style="left:207.9px;top:1413px;" width="24" height="24" viewBox="0 0 10 10"><path d="M1 2.4H4L4.8 3.4H9V8.2H1Z" fill="#f4c84a"/><path d="M1 4.4H9V8.2H1Z" fill="#fbe08a"/><rect x="3.2" y="6.2" width="3.6" height="2" fill="#3a9ae0"/></svg>
<svg style="left:257.1px;top:1413px;" width="24" height="24" viewBox="0 0 10 10"><path d="M1.4 3.2H8.6V8.8H1.4Z" fill="#fff"/><path d="M3.4 3.2V2A1.6 1.6 0 0 1 6.6 2V3.2" fill="none" stroke="#ddd" stroke-width="0.7"/><rect x="3" y="4.6" width="1.7" height="1.5" fill="#e8502a"/><rect x="5.2" y="4.6" width="1.7" height="1.5" fill="#7cc02a"/><rect x="3" y="6.5" width="1.7" height="1.5" fill="#2a9ae8"/><rect x="5.2" y="6.5" width="1.7" height="1.5" fill="#f8c02a"/></svg>
<svg style="left:306.6px;top:1413px;" width="24" height="24" viewBox="0 0 10 10"><rect x="1" y="1" width="8" height="8" fill="#3cc81e"/><path d="M5 2.8L6.6 5.6A1.8 1.8 0 1 1 3.4 5.6Z" fill="#fff"/><circle cx="5" cy="5.8" r="0.8" fill="#3cc81e"/></svg>
<svg style="left:356.1px;top:1413px;" width="24" height="24" viewBox="0 0 10 10"><rect x="1" y="1" width="8" height="8" fill="#f4f4f4"/><path d="M1.8 2.6L3.6 7.2L5.4 2.6" fill="none" stroke="#d82020" stroke-width="1.1"/><path d="M8.4 5.4C6.8 4.4 5.8 5.4 5.8 6.4S6.8 8.4 8.4 7.4" fill="none" stroke="#2a5ad8" stroke-width="1"/></svg>
<svg style="left:405px;top:1413px;" width="24" height="24" viewBox="0 0 10 10"><circle cx="5" cy="5" r="4" fill="#58b030"/><circle cx="5" cy="5" r="2.4" fill="#e8e8d8"/><circle cx="5" cy="5" r="1.3" fill="#e08a2a"/></svg>
<svg style="left:455.1px;top:1413px;" width="24" height="24" viewBox="0 0 10 10"><circle cx="5" cy="4.8" r="3.8" fill="#dfe6dc"/><path d="M2 3.6C4 4.2 6 6.2 6.6 8.2M3.4 2C5.4 2.6 7.6 4.8 8.4 6.8M1.4 5.6C3 6 4 7 4.4 8.4" stroke="#62b83a" stroke-width="0.9" fill="none"/></svg>
<svg style="left:504px;top:1413px;" width="24" height="24" viewBox="0 0 10 10"><rect x="1" y="1" width="8" height="8" fill="#f4f4f4"/><rect x="2.2" y="2.2" width="5.6" height="5.6" fill="none" stroke="#e03a2a" stroke-width="0.9"/><rect x="2" y="2" width="1.6" height="1.6" fill="#e8b020"/><rect x="6.4" y="6.4" width="1.6" height="1.6" fill="#38a838"/><rect x="4" y="4" width="2" height="2" fill="#68b8e8"/></svg>
<svg style="left:553.5px;top:1413px;" width="24" height="24" viewBox="0 0 10 10"><circle cx="5" cy="5" r="4" fill="#e84030"/><path d="M5 5L1.5 3A4 4 0 0 0 4.6 9Z" fill="#38a850"/><path d="M5 5L4.6 9A4 4 0 0 0 8.6 3.2Z" fill="#f8c820"/><circle cx="5" cy="5" r="1.9" fill="#fff"/><circle cx="5" cy="5" r="1.4" fill="#4a8ae8"/></svg>
<svg style="left:603px;top:1413px;" width="24" height="24" viewBox="0 0 10 10"><path d="M4 1.6H6V6.4H4Z" fill="#e8e8e8"/><path d="M4 3.2H6V7H4Z" fill="#48b838"/><path d="M1.4 6.6H8.6V7.6H1.4Z" fill="#d8d8d8"/><path d="M4 7.4H6V8.8H4Z" fill="#48b838"/></svg>
<svg style="left:652.5px;top:1413px;" width="24" height="24" viewBox="0 0 10 10"><rect x="1" y="1.2" width="8" height="7.6" fill="#10104a" stroke="#5a78c8" stroke-width="0.6"/><path d="M3 7V3H4.2A1.1 1.1 0 0 1 4.2 5.2H3" fill="none" stroke="#8ab0f0" stroke-width="0.7"/><path d="M7.2 4.6C6 4.2 5.6 5.4 6.6 5.8S7 7.2 5.8 6.8" fill="none" stroke="#8ab0f0" stroke-width="0.6"/></svg>
<svg style="left:702px;top:1413px;" width="24" height="24" viewBox="0 0 10 10"><path d="M1 1.4H6V4.8H3.4L2.2 6V4.8H1Z" fill="#a8d0f0"/><path d="M4 4.2H9V7.6H8V8.8L6.8 7.6H4Z" fill="#48c838"/></svg>
<svg style="left:750.6px;top:1413px;" width="24" height="24" viewBox="0 0 10 10"><rect x="1" y="1.8" width="8" height="6.4" fill="#d8e4f0"/><rect x="1.6" y="2.4" width="6.8" height="5.2" fill="#3a8ad0"/><path d="M1.6 6.4L4 4.6L5.6 5.8L8.4 4.4V7.6H1.6Z" fill="#3a9858"/></svg>
<svg style="left:799.5px;top:1413px;" width="24" height="24" viewBox="0 0 10 10"><rect x="1.2" y="1.2" width="7.6" height="7.6" fill="#f0f4fa"/><rect x="2" y="2.2" width="5" height="5.6" fill="#2a5ab8"/><path d="M3 3.6L3.7 6.4L4.5 4.4L5.3 6.4L6 3.6" fill="none" stroke="#fff" stroke-width="0.5"/></svg>
<svg style="left:849px;top:1413px;" width="24" height="24" viewBox="0 0 10 10"><rect x="1.2" y="1.2" width="7.6" height="7.6" fill="#eef6ee"/><rect x="1.8" y="2.2" width="5" height="5.6" fill="#2a9a48"/><path d="M3 3.4L5.6 6.6M5.6 3.4L3 6.6" stroke="#fff" stroke-width="0.7"/></svg>
<svg style="left:897.9px;top:1413px;" width="24" height="24" viewBox="0 0 10 10"><path d="M3 1.4H7.8L6.8 8.6H2Z" fill="#b8d8e8"/><path d="M3.4 2.6H7M3.2 4H6.8M3 5.4H6.6" stroke="#6898b0" stroke-width="0.4"/></svg>
<svg style="left:947.4px;top:1413px;" width="24" height="24" viewBox="0 0 10 10"><circle cx="5" cy="5" r="4" fill="#3a4448"/><rect x="3.4" y="3.4" width="1.3" height="1.3" fill="#fff"/><rect x="5.3" y="3.4" width="1.3" height="1.3" fill="#fff"/><rect x="3.4" y="5.3" width="1.3" height="1.3" fill="#fff"/><rect x="5.3" y="5.3" width="1.3" height="1.3" fill="#fff"/></svg>
<svg style="left:996.6px;top:1413px;" width="24" height="24" viewBox="0 0 10 10"><circle cx="5" cy="5" r="3.8" fill="#10a8e8"/><circle cx="3.2" cy="3.2" r="1.8" fill="#10a8e8"/><circle cx="6.8" cy="6.8" r="1.8" fill="#10a8e8"/><path d="M6.4 3.8C5.4 3 3.8 3.2 3.8 4.2C3.8 5.4 6.4 4.8 6.4 6C6.4 7 4.6 7.2 3.6 6.4" fill="none" stroke="#fff" stroke-width="0.8"/></svg>
<svg style="left:1045.5px;top:1413px;" width="24" height="24" viewBox="0 0 10 10"><rect x="1" y="1" width="8" height="8" fill="#d8d8d8"/><path d="M1 1H5L3 9H1Z" fill="#c82020"/><path d="M5 1H7.4L5 9H3Z" fill="#f0a020"/><rect x="6" y="4" width="3" height="5" fill="#f4f4f4"/></svg>
<svg style="left:1095px;top:1413px;" width="24" height="24" viewBox="0 0 10 10"><circle cx="5" cy="5" r="4" fill="#f06a10"/><path d="M3 7L7 3" stroke="#fff" stroke-width="1.1"/><circle cx="3.2" cy="6.8" r="0.9" fill="#fff"/><circle cx="6.8" cy="3.2" r="0.9" fill="#fff"/></svg>
<svg style="left:1143.9px;top:1413px;" width="24" height="24" viewBox="0 0 10 10"><ellipse cx="4.6" cy="5.6" rx="3.8" ry="2.8" fill="#d8e4f4"/><circle cx="3" cy="5" r="0.7" fill="#e03a2a"/><circle cx="4.8" cy="4.2" r="0.7" fill="#38a838"/><circle cx="6.4" cy="5.2" r="0.7" fill="#2a6ad8"/><path d="M6 6L8.8 1.6" stroke="#e8a030" stroke-width="0.8"/></svg>
<div style="left:199.8px;top:1442.4px;width:40.2px;height:3.6px;background:#7aa8cc;"></div>
<div style="left:298.5px;top:1442.4px;width:40.2px;height:3.6px;background:#7aa8cc;"></div>
<div style="left:545.4px;top:1442.4px;width:40.2px;height:3.6px;background:#7aa8cc;"></div>
<div style="left:594.9px;top:1442.4px;width:40.2px;height:3.6px;background:#7aa8cc;"></div>
<div style="left:644.4px;top:1442.4px;width:40.2px;height:3.6px;background:#7aa8cc;"></div>
<div style="left:693.9px;top:1442.4px;width:40.2px;height:3.6px;background:#7aa8cc;"></div>
<div style="left:742.5px;top:1442.4px;width:40.2px;height:3.6px;background:#7aa8cc;"></div>
<div style="left:791.4px;top:1442.4px;width:40.2px;height:3.6px;background:#7aa8cc;"></div>
<div style="left:840.9px;top:1442.4px;width:40.2px;height:3.6px;background:#7aa8cc;"></div>
<div style="left:889.8px;top:1442.4px;width:40.2px;height:3.6px;background:#7aa8cc;"></div>
<div style="left:939.3px;top:1442.4px;width:40.2px;height:3.6px;background:#7aa8cc;"></div>
<div style="left:988.5px;top:1442.4px;width:40.2px;height:3.6px;background:#7aa8cc;"></div>
<div style="left:1037.4px;top:1442.4px;width:40.2px;height:3.6px;background:#7aa8cc;"></div>
<div style="left:1086.9px;top:1442.4px;width:40.2px;height:3.6px;background:#7aa8cc;"></div>
<div style="left:1135.8px;top:1442.4px;width:40.2px;height:3.6px;background:#7aa8cc;"></div>
<div style="left:443.4px;top:1442.1px;width:49.2px;height:3.9px;background:#9cc4e4;"></div>
<span style="left:2328px;top:1417.68px;font-size:10.20px;line-height:12.24px;color:#fff;letter-spacing:1.916px;">EN</span>
<svg style="left:2361px;top:1420.8px;" width="12" height="7.8" viewBox="0 0 4 2.6"><path d="M0.4 2.2L2 0.6L3.6 2.2" fill="none" stroke="#fff" stroke-width="0.5"/></svg>
<svg style="left:2384.4px;top:1417.2px;" width="16.2" height="16.2" viewBox="0 0 5.4 5.4"><circle cx="2.7" cy="2.7" r="2.4" fill="#5a8ad0"/><path d="M1.4 1.2C2.6 1.8 2.4 3 1.6 4.2" stroke="#e8c890" stroke-width="1.1" fill="none"/><circle cx="2.7" cy="2.7" r="2.4" fill="none" stroke="#d8e0f0" stroke-width="0.4"/></svg>
<svg style="left:2406px;top:1417.8px;" width="18" height="15" viewBox="0 0 6 5"><path d="M0.6 1.8H1.8L3.2 0.6V4.4L1.8 3.2H0.6Z" fill="#fff"/><path d="M4 1.4C4.8 2 4.8 3 4 3.6" fill="none" stroke="#fff" stroke-width="0.4"/><path d="M4.8 0.8C6 1.8 6 3.2 4.8 4.2" fill="none" stroke="#fff" stroke-width="0.35"/></svg>
<svg style="left:2430px;top:1417.8px;" width="19.2" height="16.2" viewBox="0 0 6.4 5.4"><rect x="1.6" y="0.6" width="4.2" height="3" fill="none" stroke="#fff" stroke-width="0.5"/><path d="M0.4 1.6V4.8H3.4" fill="none" stroke="#fff" stroke-width="0.5"/><path d="M2.6 4.4H5" stroke="#fff" stroke-width="0.5"/></svg>
<span style="left:2484px;top:1410.24px;font-size:11.10px;line-height:13.32px;color:#fff;transform:translateX(-50%);">17:45</span>
<span style="left:2485.5px;top:1427.34px;font-size:11.10px;line-height:13.32px;color:#fff;transform:translateX(-50%);">05.04.2018</span>
<svg style="left:2527.8px;top:1414.2px;" width="22.2" height="22.2" viewBox="0 0 7.4 7.4"><path d="M0.8 0.8H5.8V4.6H2.6L1.6 5.6V4.6H0.8Z" fill="#fff"/><path d="M1.6 1.9H5M1.6 3.1H5" stroke="#05050a" stroke-width="0.4"/><circle cx="5.6" cy="5.4" r="1.7" fill="#05050a" stroke="#fff" stroke-width="0.4"/><path d="M5.2 4.8C6 4.6 6.2 5.4 5.4 5.6S5.8 6.6 6.2 6" stroke="#fff" stroke-width="0.3" fill="none"/></svg>
<div style="left:2566.2px;top:1407px;width:1.02px;height:39px;background:#555;"></div>
<svg style="left:1068.3px;top:363.3px;" width="67.5" height="73.5" viewBox="0 0 22.5 24.5"><rect x="0" y="0" width="22.5" height="24.5" fill="#d2d2d6"/><rect x="0.3" y="0.3" width="21.9" height="23.9" fill="none" stroke="#8aa0a0" stroke-width="0.5"/><ellipse cx="1.09" cy="1.09" rx="1.19" ry="0.83" fill="#4a1408" transform="rotate(137 1.09 1.09)"/><ellipse cx="1.16" cy="23.25" rx="1.35" ry="0.94" fill="#5a1c0c" transform="rotate(9 1.16 23.25)"/><ellipse cx="1.05" cy="1.45" rx="0.94" ry="0.66" fill="#6a2410" transform="rotate(15 1.05 1.45)"/><ellipse cx="21.40" cy="1.37" rx="0.93" ry="0.65" fill="#4a1408" transform="rotate(147 21.40 1.37)"/><ellipse cx="3.50" cy="1.03" rx="0.93" ry="0.65" fill="#5a1c0c" transform="rotate(74 3.50 1.03)"/><ellipse cx="3.60" cy="23.22" rx="1.14" ry="0.80" fill="#5a1c0c" transform="rotate(26 3.60 23.22)"/><ellipse cx="1.35" cy="3.98" rx="1.02" ry="0.72" fill="#4a1408" transform="rotate(144 1.35 3.98)"/><ellipse cx="20.94" cy="3.82" rx="1.21" ry="0.85" fill="#6a2410" transform="rotate(80 20.94 3.82)"/><ellipse cx="5.68" cy="1.55" rx="1.02" ry="0.71" fill="#5a1c0c" transform="rotate(46 5.68 1.55)"/><ellipse cx="6.02" cy="23.05" rx="1.14" ry="0.80" fill="#6a2410" transform="rotate(87 6.02 23.05)"/><ellipse cx="1.44" cy="6.17" rx="1.39" ry="0.97" fill="#4a1408" transform="rotate(131 1.44 6.17)"/><ellipse cx="21.15" cy="6.55" rx="0.89" ry="0.62" fill="#6a2410" transform="rotate(107 21.15 6.55)"/><ellipse cx="7.67" cy="1.40" rx="1.26" ry="0.88" fill="#3a0e06" transform="rotate(87 7.67 1.40)"/><ellipse cx="8.27" cy="23.26" rx="1.15" ry="0.80" fill="#6a2410" transform="rotate(17 8.27 23.26)"/><ellipse cx="1.50" cy="8.97" rx="1.08" ry="0.76" fill="#4a1408" transform="rotate(15 1.50 8.97)"/><ellipse cx="21.34" cy="8.69" rx="1.15" ry="0.80" fill="#6a2410" transform="rotate(72 21.34 8.69)"/><ellipse cx="10.33" cy="1.53" rx="1.01" ry="0.71" fill="#6a2410" transform="rotate(90 10.33 1.53)"/><ellipse cx="10.20" cy="22.97" rx="0.84" ry="0.58" fill="#3a0e06" transform="rotate(33 10.20 22.97)"/><ellipse cx="1.44" cy="11.04" rx="1.35" ry="0.95" fill="#6a2410" transform="rotate(20 1.44 11.04)"/><ellipse cx="21.00" cy="11.14" rx="0.97" ry="0.68" fill="#5a1c0c" transform="rotate(110 21.00 11.14)"/><ellipse cx="12.67" cy="1.17" rx="1.05" ry="0.73" fill="#3a0e06" transform="rotate(174 12.67 1.17)"/><ellipse cx="12.88" cy="23.47" rx="0.89" ry="0.62" fill="#5a1c0c" transform="rotate(38 12.88 23.47)"/><ellipse cx="1.14" cy="13.34" rx="1.09" ry="0.76" fill="#5a1c0c" transform="rotate(67 1.14 13.34)"/><ellipse cx="21.07" cy="13.39" rx="1.12" ry="0.78" fill="#3a0e06" transform="rotate(32 21.07 13.39)"/><ellipse cx="14.81" cy="1.31" rx="1.17" ry="0.82" fill="#4a1408" transform="rotate(116 14.81 1.31)"/><ellipse cx="15.14" cy="23.37" rx="1.32" ry="0.93" fill="#6a2410" transform="rotate(101 15.14 23.37)"/><ellipse cx="1.24" cy="15.66" rx="1.18" ry="0.83" fill="#4a1408" transform="rotate(48 1.24 15.66)"/><ellipse cx="20.94" cy="15.83" rx="0.90" ry="0.63" fill="#3a0e06" transform="rotate(153 20.94 15.83)"/><ellipse cx="16.68" cy="1.00" rx="0.89" ry="0.62" fill="#4a1408" transform="rotate(93 16.68 1.00)"/><ellipse cx="17.22" cy="22.94" rx="0.92" ry="0.65" fill="#6a2410" transform="rotate(38 17.22 22.94)"/><ellipse cx="1.38" cy="18.57" rx="1.16" ry="0.81" fill="#6a2410" transform="rotate(31 1.38 18.57)"/><ellipse cx="20.97" cy="18.39" rx="1.39" ry="0.97" fill="#6a2410" transform="rotate(123 20.97 18.39)"/><ellipse cx="19.09" cy="1.09" rx="1.25" ry="0.87" fill="#3a0e06" transform="rotate(122 19.09 1.09)"/><ellipse cx="19.60" cy="23.00" rx="0.81" ry="0.57" fill="#3a0e06" transform="rotate(37 19.60 23.00)"/><ellipse cx="1.41" cy="20.95" rx="1.25" ry="0.88" fill="#3a0e06" transform="rotate(164 1.41 20.95)"/><ellipse cx="21.42" cy="20.92" rx="0.96" ry="0.67" fill="#3a0e06" transform="rotate(42 21.42 20.92)"/><ellipse cx="21.36" cy="1.13" rx="1.12" ry="0.79" fill="#3a0e06" transform="rotate(162 21.36 1.13)"/><ellipse cx="21.48" cy="23.39" rx="1.39" ry="0.97" fill="#5a1c0c" transform="rotate(61 21.48 23.39)"/><ellipse cx="1.49" cy="23.24" rx="0.94" ry="0.66" fill="#6a2410" transform="rotate(91 1.49 23.24)"/><ellipse cx="21.34" cy="23.49" rx="1.27" ry="0.89" fill="#6a2410" transform="rotate(66 21.34 23.49)"/><ellipse cx="3.82" cy="3.86" rx="1.01" ry="0.70" fill="#3a0e06" transform="rotate(93 3.82 3.86)"/><ellipse cx="4.15" cy="20.56" rx="1.08" ry="0.76" fill="#3a0e06" transform="rotate(52 4.15 20.56)"/><ellipse cx="3.59" cy="5.29" rx="1.17" ry="0.82" fill="#4a1408" transform="rotate(122 3.59 5.29)"/><ellipse cx="19.05" cy="5.31" rx="1.19" ry="0.83" fill="#4a1408" transform="rotate(99 19.05 5.31)"/><ellipse cx="7.97" cy="4.75" rx="1.09" ry="0.76" fill="#5a1c0c" transform="rotate(111 7.97 4.75)"/><ellipse cx="8.37" cy="19.90" rx="1.28" ry="0.90" fill="#6a2410" transform="rotate(118 8.37 19.90)"/><ellipse cx="4.34" cy="9.07" rx="1.23" ry="0.86" fill="#5a1c0c" transform="rotate(32 4.34 9.07)"/><ellipse cx="17.72" cy="9.25" rx="1.08" ry="0.76" fill="#5a1c0c" transform="rotate(156 17.72 9.25)"/><ellipse cx="11.80" cy="4.09" rx="1.19" ry="0.84" fill="#3a0e06" transform="rotate(39 11.80 4.09)"/><ellipse cx="12.03" cy="20.58" rx="0.81" ry="0.57" fill="#4a1408" transform="rotate(134 12.03 20.58)"/><ellipse cx="3.75" cy="12.38" rx="1.39" ry="0.97" fill="#5a1c0c" transform="rotate(54 3.75 12.38)"/><ellipse cx="18.52" cy="12.83" rx="1.10" ry="0.77" fill="#3a0e06" transform="rotate(66 18.52 12.83)"/><ellipse cx="15.43" cy="4.80" rx="0.84" ry="0.59" fill="#3a0e06" transform="rotate(117 15.43 4.80)"/><ellipse cx="15.90" cy="20.19" rx="1.11" ry="0.78" fill="#5a1c0c" transform="rotate(136 15.90 20.19)"/><ellipse cx="4.19" cy="16.41" rx="1.32" ry="0.93" fill="#5a1c0c" transform="rotate(155 4.19 16.41)"/><ellipse cx="17.70" cy="16.98" rx="0.90" ry="0.63" fill="#6a2410" transform="rotate(158 17.70 16.98)"/><ellipse cx="19.34" cy="3.83" rx="1.00" ry="0.70" fill="#6a2410" transform="rotate(27 19.34 3.83)"/><ellipse cx="19.83" cy="20.53" rx="0.91" ry="0.64" fill="#4a1408" transform="rotate(25 19.83 20.53)"/><ellipse cx="3.60" cy="20.24" rx="1.26" ry="0.88" fill="#4a1408" transform="rotate(113 3.60 20.24)"/><ellipse cx="18.70" cy="20.88" rx="1.16" ry="0.81" fill="#5a1c0c" transform="rotate(177 18.70 20.88)"/><ellipse cx="5.87" cy="8.00" rx="1.28" ry="0.90" fill="#5a1c0c" transform="rotate(178 5.87 8.00)"/><ellipse cx="16.01" cy="8.73" rx="1.36" ry="0.95" fill="#5a1c0c" transform="rotate(114 16.01 8.73)"/><ellipse cx="16.38" cy="13.27" rx="1.07" ry="0.75" fill="#4a1408" transform="rotate(171 16.38 13.27)"/><ellipse cx="5.84" cy="16.74" rx="1.20" ry="0.84" fill="#4a1408" transform="rotate(39 5.84 16.74)"/><ellipse cx="15.86" cy="18.09" rx="1.02" ry="0.71" fill="#3a0e06" transform="rotate(35 15.86 18.09)"/><ellipse cx="10.8" cy="12" rx="5" ry="7" fill="#ececee" opacity="0.85"/><ellipse cx="10.6" cy="9.6" rx="3" ry="2.2" fill="#faf6f0"/><path d="M8.2 10.4H13L12 21.6H9.2Z" fill="#f078a0"/><path d="M9.4 11.2H10.6L10.4 21H9.7Z" fill="#e03a8a"/><path d="M8.2 10.4H13L12.8 12.4H8.4Z" fill="#f8d8c0"/><circle cx="10" cy="3.4" r="1" fill="#e8742a"/><path d="M6.5 5.6H14.5V7.2H6.5Z" fill="#2a0c06"/><rect x="17.8" y="5.2" width="0.8" height="1.6" fill="#30c090"/></svg>
<svg style="left:1065.6px;top:363px;" width="8.4" height="73.8" viewBox="0 0 2.8 24.6"><path d="M1.4 0V24.6" stroke="#3a3ae6" stroke-width="2.8" stroke-dasharray="0.75 1.25" stroke-dashoffset="-0.7" opacity="0.5"/></svg>
<svg style="left:1125.6px;top:363px;" width="8.4" height="73.8" viewBox="0 0 2.8 24.6"><path d="M1.4 0V24.6" stroke="#3a3ae6" stroke-width="2.8" stroke-dasharray="0.75 1.25" stroke-dashoffset="-0.7" opacity="0.5"/></svg>
<svg style="left:1068px;top:361.5px;" width="67.8" height="3.6" viewBox="0 0 22.6 1.2"><path d="M0 0.6H22.6" stroke="#3a3ae6" stroke-width="1.1" stroke-dasharray="0.85 1.15" opacity="0.8"/></svg>
<svg style="left:1068px;top:432px;" width="67.8" height="3.6" viewBox="0 0 22.6 1.2"><path d="M0 0.6H22.6" stroke="#3a3ae6" stroke-width="1.1" stroke-dasharray="0.85 1.15" opacity="0.8"/></svg>
<div style="left:1146.9px;top:369.9px;width:18px;height:0.9px;background:#c8c8c8;"></div>
<div style="left:1146.9px;top:375.9px;width:15px;height:0.9px;background:#ccc;"></div>
<div style="left:1146.9px;top:379.2px;width:28.8px;height:0.9px;background:#bbb;"></div>
<svg style="left:1146.6px;top:384.6px;" width="31.8" height="29.4" viewBox="0 0 10.6 9.8"><rect x="0" y="0" width="10.6" height="9.8" fill="#fff" stroke="#222" stroke-width="0.4"/><rect x="2.64" y="4.95" width="0.70" height="1.53" fill="#111"/><rect x="6.13" y="1.12" width="0.41" height="1.92" fill="#111"/><rect x="2.83" y="2.47" width="1.20" height="1.30" fill="#111"/><rect x="8.03" y="4.41" width="0.91" height="0.76" fill="#111"/><rect x="6.21" y="7.54" width="0.82" height="1.76" fill="#111"/><rect x="6.54" y="1.11" width="1.01" height="1.50" fill="#111"/><rect x="3.21" y="0.85" width="1.09" height="1.30" fill="#111"/><rect x="6.97" y="7.63" width="0.97" height="2.07" fill="#111"/><rect x="4.05" y="7.01" width="0.76" height="2.09" fill="#111"/><rect x="8.41" y="1.38" width="0.51" height="0.87" fill="#111"/><rect x="9.19" y="4.09" width="0.90" height="1.01" fill="#111"/><rect x="5.07" y="3.69" width="0.68" height="1.49" fill="#111"/><rect x="5.76" y="7.83" width="0.95" height="2.08" fill="#111"/><rect x="8.21" y="8.53" width="0.94" height="0.78" fill="#111"/><rect x="8.25" y="8.32" width="1.12" height="1.47" fill="#111"/><rect x="6.92" y="2.29" width="1.07" height="1.48" fill="#111"/><rect x="3.06" y="1.11" width="1.08" height="2.18" fill="#111"/><rect x="1.30" y="7.00" width="0.73" height="0.76" fill="#111"/><rect x="3.15" y="6.75" width="1.10" height="0.58" fill="#111"/><rect x="6.03" y="0.96" width="0.97" height="1.06" fill="#111"/><rect x="8.43" y="8.45" width="0.80" height="2.20" fill="#111"/><rect x="3.29" y="1.22" width="0.88" height="0.55" fill="#111"/><rect x="2.28" y="3.86" width="0.89" height="0.77" fill="#111"/><rect x="0.88" y="7.54" width="0.65" height="2.13" fill="#111"/><rect x="8.57" y="3.62" width="0.77" height="1.38" fill="#111"/><rect x="6.29" y="5.37" width="0.85" height="1.55" fill="#111"/><rect x="8.97" y="4.66" width="0.74" height="1.72" fill="#111"/><rect x="2.64" y="3.01" width="1.18" height="1.39" fill="#111"/><rect x="5.44" y="0.69" width="0.73" height="1.49" fill="#111"/><rect x="0.68" y="5.53" width="0.91" height="0.60" fill="#111"/><rect x="6.15" y="4.33" width="0.94" height="1.10" fill="#111"/><rect x="6.86" y="6.50" width="0.42" height="0.60" fill="#111"/><rect x="6.58" y="8.31" width="0.60" height="1.28" fill="#111"/><rect x="5.83" y="3.16" width="0.69" height="1.03" fill="#111"/><rect x="3.82" y="5.36" width="0.64" height="1.14" fill="#111"/><rect x="7.45" y="0.82" width="0.86" height="1.75" fill="#111"/><rect x="3.29" y="2.38" width="1.04" height="0.91" fill="#111"/><rect x="2.19" y="4.08" width="0.96" height="0.67" fill="#111"/><rect x="3.40" y="3.27" width="1.07" height="1.25" fill="#111"/><rect x="8.20" y="1.95" width="0.67" height="1.61" fill="#111"/><path d="M6.8 0.2V9.6M8.6 0.2V9.6" stroke="#fff" stroke-width="0.8"/><path d="M4 2.2C5.4 3 5.6 6 4.4 8" stroke="#111" stroke-width="1.3" fill="none"/></svg>
<div style="left:1147.2px;top:417.6px;width:4.2px;height:2.4px;background:#999;"></div>
<svg style="left:3198px;top:465px;" width="151.8" height="83.4" viewBox="0 0 50.6 27.8"><defs><linearGradient id="gb" x1="0" y1="0" x2="0" y2="1"><stop offset="0" stop-color="#4c140c"/><stop offset="0.5" stop-color="#7a2a14"/><stop offset="1" stop-color="#a84016"/></linearGradient><linearGradient id="gg" x1="0" y1="0" x2="1" y2="1"><stop offset="0" stop-color="#c88a30"/><stop offset="0.5" stop-color="#ecc070"/><stop offset="1" stop-color="#c88a38"/></linearGradient><linearGradient id="gr" x1="0" y1="0" x2="0" y2="1"><stop offset="0" stop-color="#421008"/><stop offset="0.5" stop-color="#6e2410"/><stop offset="1" stop-color="#a03c14"/></linearGradient></defs><rect x="0.9" y="1" width="50" height="27" fill="#999" opacity="0.7"/><rect x="0" y="0" width="49.6" height="27" fill="url(#gb)"/><rect x="17.6" y="0" width="6.2" height="27" fill="url(#gg)"/><rect x="23.8" y="0" width="2.2" height="27" fill="#fff"/><rect x="26" y="0" width="5.6" height="27" fill="url(#gg)"/><rect x="31.6" y="0" width="18" height="27" fill="url(#gr)"/><rect x="2.6" y="4" width="13.2" height="17" fill="#c88a58" opacity="0.5"/><path d="M3 4.6H15.4" stroke="#f0d8a8" stroke-width="0.8"/><path d="M3.2 7H15M3.2 9H15M3.2 11H13M3.2 13.4H15M3.2 15.4H14M3.2 17.6H15" stroke="#f4d8b0" stroke-width="0.35" opacity="0.8"/><rect x="5" y="19.6" width="9" height="1.6" fill="#a8c8d0" opacity="0.8"/><rect x="14.6" y="13" width="1.3" height="7.6" fill="#c8d0d0"/><rect x="27.2" y="2.4" width="3" height="2.4" fill="#a8e0e8"/><path d="M34.5 3.4C37 2 40 3.6 42.5 2.6S45 3 45.8 2.8" stroke="#f0d8a0" stroke-width="0.9" fill="none"/><path d="M34.4 6.2C36 4.6 38 7 40 5.6S44 6.4 45.6 5.2" stroke="#f8e8c0" stroke-width="1.6" fill="none"/><rect x="38" y="9" width="11.6" height="2.6" fill="#e0a060" opacity="0.7"/><ellipse cx="40.5" cy="17.4" rx="6" ry="4.6" fill="#e8e0d8"/><ellipse cx="39.6" cy="15" rx="3.4" ry="1.8" fill="#c89048"/><path d="M36 12.4C38 11 40 13 42 11.8" stroke="#f8f0d8" stroke-width="1.4" fill="none"/><path d="M44 14.4L47.2 15.4L46.4 19.6L43.6 20.4Z" fill="#d8c8b8"/><path d="M30.6 22L35.4 15.6" stroke="#8a3a1a" stroke-width="1.4"/><rect x="33" y="22.6" width="8" height="1.8" fill="#f0c890" opacity="0.85"/><circle cx="44.8" cy="23" r="1.5" fill="#2a0c06"/><circle cx="14.6" cy="23.6" r="1.2" fill="#2a0c06"/><circle cx="44.8" cy="23" r="0.8" fill="#d86a20"/><circle cx="14.6" cy="23.6" r="0.6" fill="#d86a20"/></svg>
<div style="left:3239.85px;top:454.95px;width:7.5px;height:7.5px;background:#0a0a0a;"></div>
<div style="left:3239.85px;top:500.85px;width:7.5px;height:7.5px;background:#0a0a0a;"></div>
<div style="left:3239.85px;top:546.45px;width:7.5px;height:7.5px;background:#0a0a0a;"></div>
<div style="left:3255.75px;top:454.95px;width:7.5px;height:7.5px;background:#0a0a0a;"></div>
<div style="left:3256.8px;top:501.9px;width:5.4px;height:5.4px;background:#666;"></div>
<div style="left:3255.75px;top:546.45px;width:7.5px;height:7.5px;background:#0a0a0a;"></div>
<div style="left:3271.05px;top:454.95px;width:7.5px;height:7.5px;background:#0a0a0a;"></div>
<div style="left:3271.05px;top:500.85px;width:7.5px;height:7.5px;background:#0a0a0a;"></div>
<div style="left:3271.05px;top:546.45px;width:7.5px;height:7.5px;background:#0a0a0a;"></div>
<div style="left:3196.8px;top:562.2px;width:133.2px;height:24.6px;background:#fff;box-shadow:1.5px 1.5px 2px rgba(0,0,0,0.45);"></div>
<svg style="left:3204px;top:568.2px;" width="15" height="15" viewBox="0 0 5 5"><rect x="0.4" y="2.4" width="4.2" height="1.8" fill="none" stroke="#d0d0d0" stroke-width="0.4"/><path d="M3.4 0.4L2.4 1.6" stroke="#ccc" stroke-width="0.4" fill="none"/></svg>
<svg style="left:3231.6px;top:568.2px;" width="15" height="15" viewBox="0 0 5 5"><rect x="0.4" y="2.4" width="4.2" height="1.8" fill="none" stroke="#d0d0d0" stroke-width="0.4"/><path d="M0.6 0.8H4.4V2" stroke="#ccc" stroke-width="0.4" fill="none"/></svg>
<svg style="left:3259.5px;top:568.2px;" width="15" height="15" viewBox="0 0 5 5"><rect x="0.4" y="2.4" width="4.2" height="1.8" fill="none" stroke="#d0d0d0" stroke-width="0.4"/><path d="M3.4 0.4L2.4 1.6" stroke="#ccc" stroke-width="0.4" fill="none"/></svg>
<div style="left:3281.7px;top:562.8px;width:24px;height:23.4px;background:#fff;box-shadow:inset 0 0 0 1px #e2e2e2;"></div>
<svg style="left:3288px;top:568.2px;" width="15" height="15" viewBox="0 0 5 5"><rect x="0.4" y="2.4" width="4.2" height="1.8" fill="none" stroke="#d0d0d0" stroke-width="0.4"/><path d="M0.6 0.8H4.4V2" stroke="#ccc" stroke-width="0.4" fill="none"/></svg>
<svg style="left:3315.6px;top:572.1px;" width="2.4" height="4.8" viewBox="0 0 0.8 1.6"><path d="M0 0V1.6 L0.8 0.8 Z" fill="#aaa"/></svg>
<div style="left:1959.3px;top:139.8px;width:1.35px;height:16.8px;background:#222;"></div>
</div></body></html>
